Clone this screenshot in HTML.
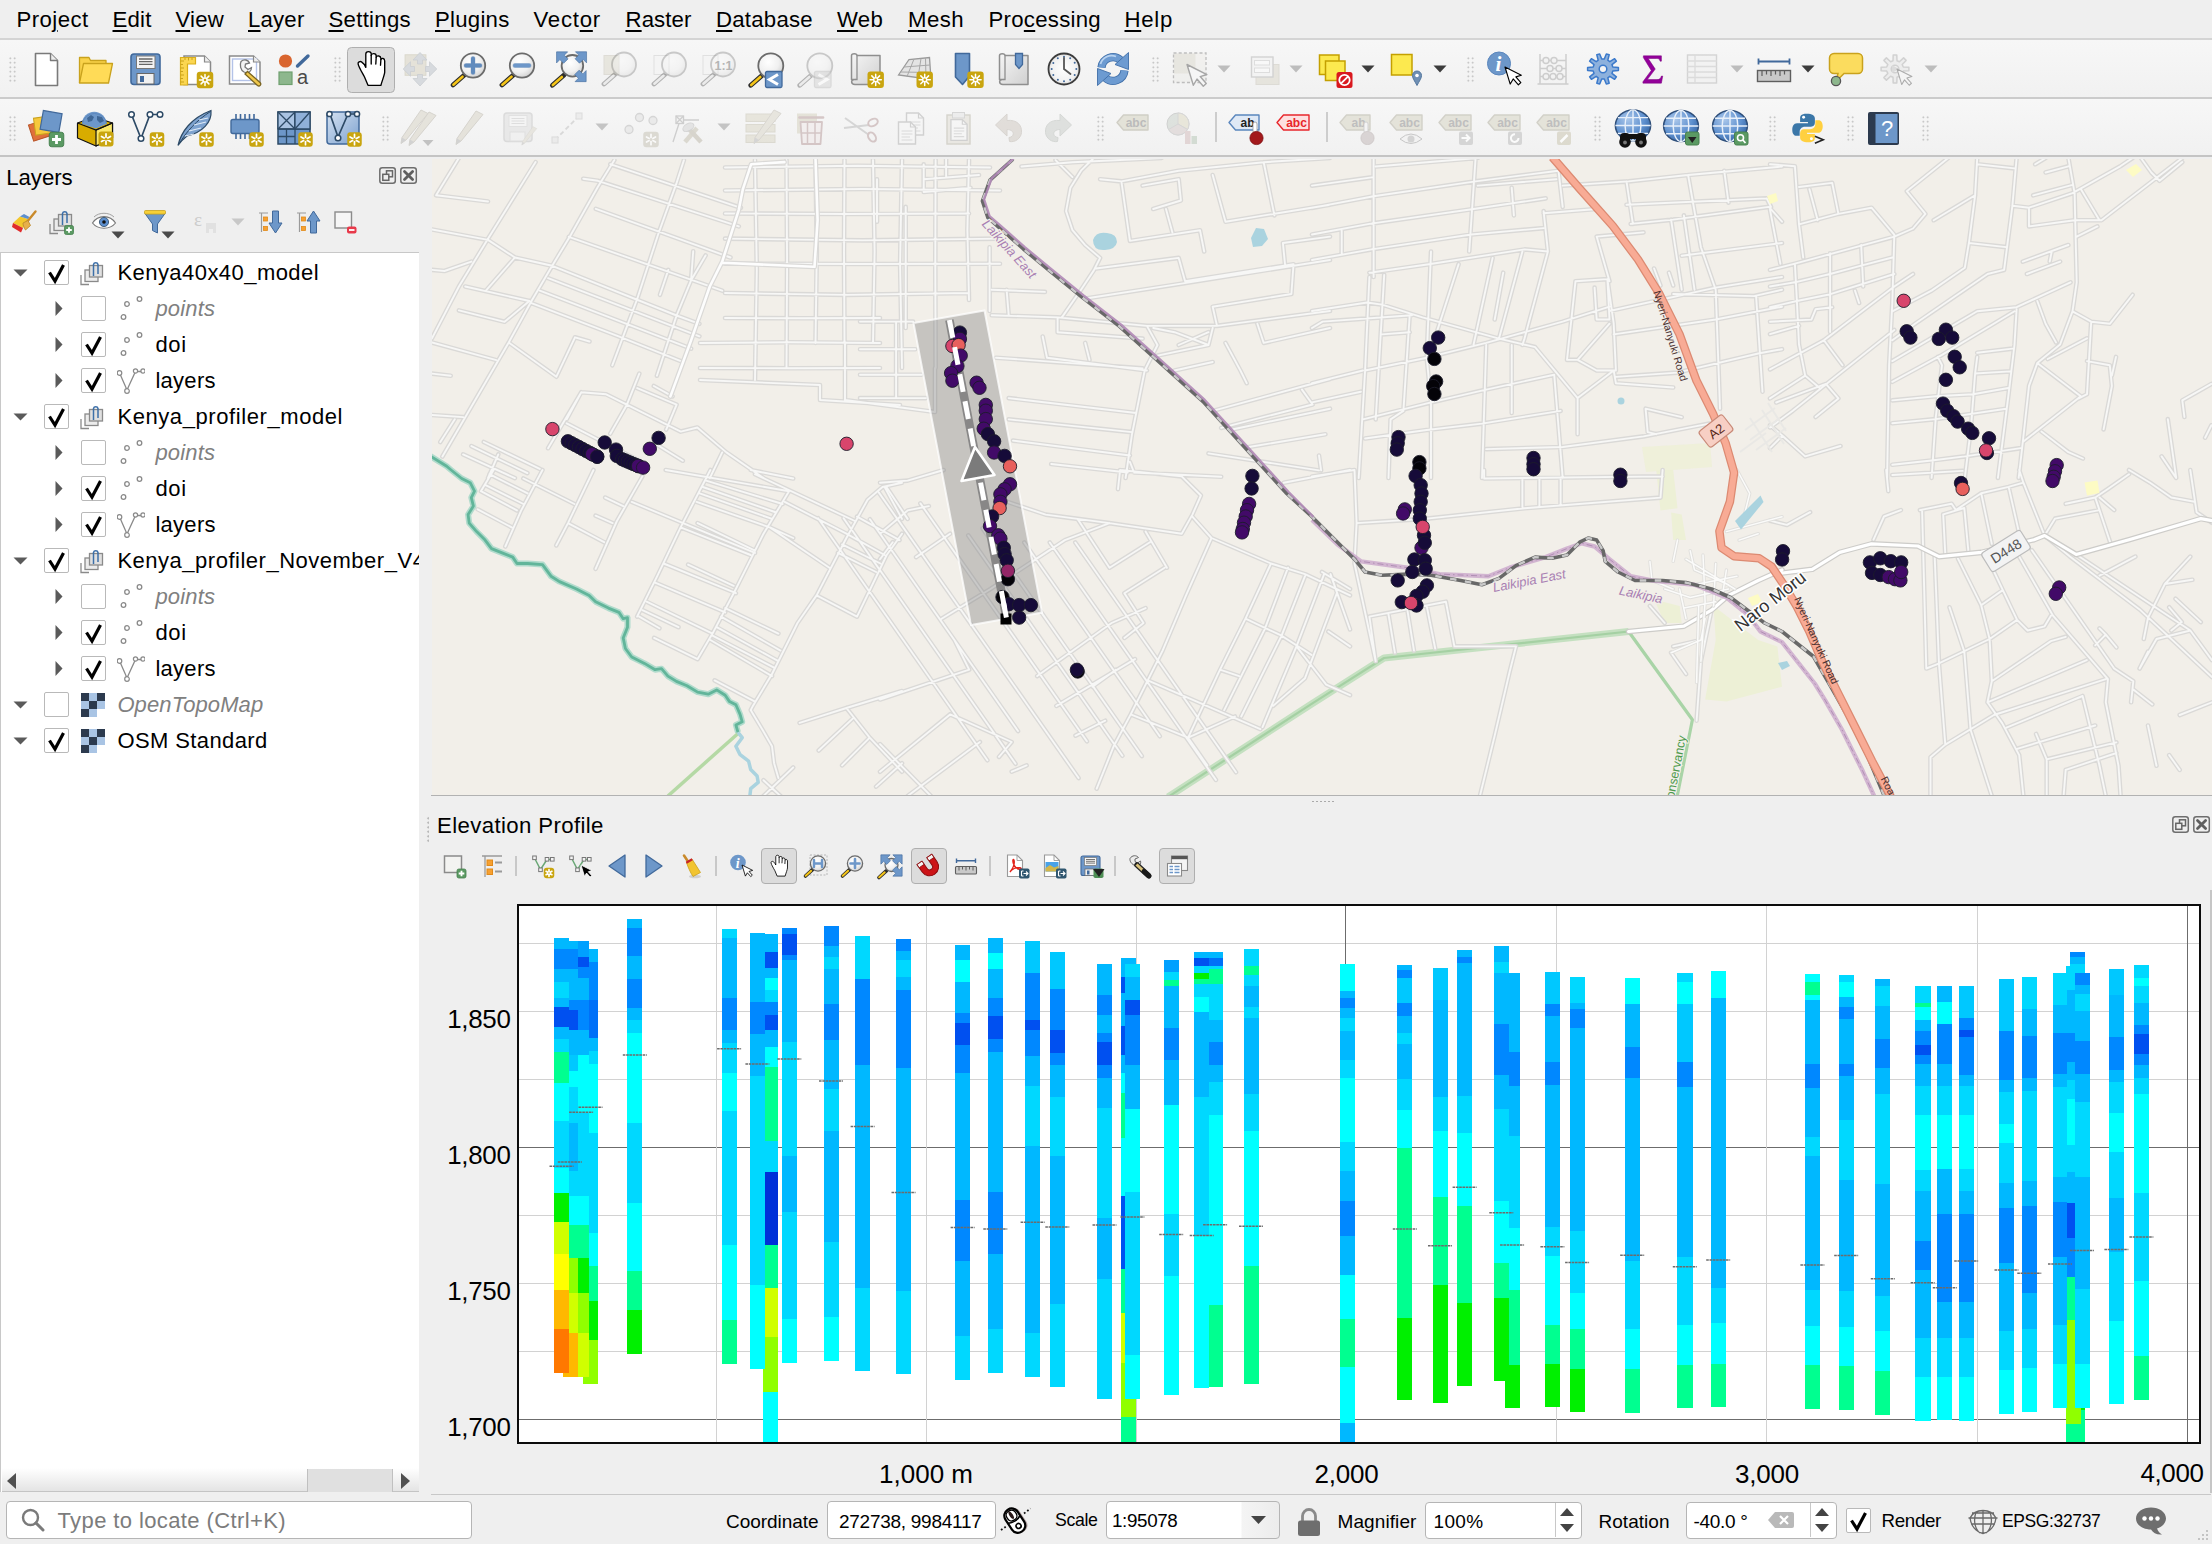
<!DOCTYPE html>
<html><head><meta charset="utf-8"><title>QGIS</title><style>
*{box-sizing:border-box;margin:0;padding:0}
html,body{width:2212px;height:1544px;overflow:hidden;background:#efefef;font-family:"Liberation Sans",sans-serif;color:#000}
.abs{position:absolute}
.t{position:absolute;white-space:nowrap;line-height:1}
.menu{}
.menu u{text-decoration-thickness:1.5px;text-underline-offset:3px}
.tb{position:absolute;left:0;width:2212px;background:linear-gradient(#f7f7f7,#f1f1f1)}
.hl{position:absolute;left:0;width:2212px;height:2px;background:#cfcfcf}
.grip{position:absolute;width:9px;height:27px;background-image:radial-gradient(circle,#b4b4b4 0.7px,transparent 1.05px);background-size:4.5px 4.5px}
.pressed{position:absolute;background:#dcdcdc;border:1.5px solid #afafaf;border-radius:4.5px}
.cb{position:absolute;width:25px;height:25px;background:#fff;border:1.5px solid #b9b9b9;border-radius:2px}
.tree{}
.gray{color:#808080;font-style:italic}
.inp{position:absolute;background:#fff;border:1.5px solid #b5b5b5;border-radius:4px}
.sb{font-size:19.5px;top:1511px}
</style></head><body>
<div class="t menu" style="left:16.5px;top:9.3px;font-size:22.2px;letter-spacing:0.415px;">Pro<u>j</u>ect</div>
<div class="t menu" style="left:112.5px;top:9.3px;font-size:22.2px;letter-spacing:0.186px;"><u>E</u>dit</div>
<div class="t menu" style="left:175.5px;top:9.3px;font-size:22.2px;letter-spacing:0.195px;"><u>V</u>iew</div>
<div class="t menu" style="left:248.0px;top:9.3px;font-size:22.2px;letter-spacing:0.193px;"><u>L</u>ayer</div>
<div class="t menu" style="left:328.5px;top:9.3px;font-size:22.2px;letter-spacing:0.285px;"><u>S</u>ettings</div>
<div class="t menu" style="left:435.0px;top:9.3px;font-size:22.2px;letter-spacing:0.241px;"><u>P</u>lugins</div>
<div class="t menu" style="left:533.5px;top:9.3px;font-size:22.2px;letter-spacing:0.76px;">Vect<u>o</u>r</div>
<div class="t menu" style="left:625.5px;top:9.3px;font-size:22.2px;letter-spacing:0.102px;"><u>R</u>aster</div>
<div class="t menu" style="left:716.0px;top:9.3px;font-size:22.2px;letter-spacing:0.246px;"><u>D</u>atabase</div>
<div class="t menu" style="left:837.0px;top:9.3px;font-size:22.2px;letter-spacing:0.251px;"><u>W</u>eb</div>
<div class="t menu" style="left:908.0px;top:9.3px;font-size:22.2px;letter-spacing:0.428px;"><u>M</u>esh</div>
<div class="t menu" style="left:988.5px;top:9.3px;font-size:22.2px;letter-spacing:0.268px;">Pro<u>c</u>essing</div>
<div class="t menu" style="left:1124.5px;top:9.3px;font-size:22.2px;letter-spacing:0.71px;"><u>H</u>elp</div>
<div class="hl" style="top:38px;background:#d4d4d4"></div>
<div class="tb" style="top:40px;height:57px"></div>
<div class="hl" style="top:97.3px;height:1.5px;background:#cbcbcb"></div>
<div class="tb" style="top:99px;height:56px"></div>
<div class="hl" style="top:155px;height:2px;background:#c4c4c4"></div>
<div class="grip" style="left:7.5px;top:55.5px"></div>
<div class="grip" style="left:332.5px;top:55.5px"></div>
<div class="grip" style="left:1150.5px;top:55.5px"></div>
<div class="grip" style="left:1465.5px;top:55.5px"></div>
<div class="grip" style="left:7.5px;top:114.5px"></div>
<div class="grip" style="left:380.5px;top:114.5px"></div>
<div class="grip" style="left:1095.5px;top:114.5px"></div>
<div class="grip" style="left:1592.5px;top:114.5px"></div>
<div class="grip" style="left:1767.5px;top:114.5px"></div>
<div class="grip" style="left:1845.5px;top:114.5px"></div>
<div class="grip" style="left:1920.5px;top:114.5px"></div>
<div class="pressed" style="left:347px;top:46.8px;width:48px;height:46.2px"></div>
<svg width="0" height="0" style="position:absolute"><defs><radialGradient id="lg" cx=".4" cy=".35" r=".7"><stop offset="0" stop-color="#fff"/><stop offset=".6" stop-color="#f0f0f0"/><stop offset="1" stop-color="#cfcfcf"/></radialGradient><linearGradient id="lgg" x1="0" y1="0" x2="1" y2="1"><stop offset="0" stop-color="#f6f6f6"/><stop offset="1" stop-color="#d0d0d0"/></linearGradient><radialGradient id="lgc" cx=".5" cy=".5" r=".5"><stop offset="0" stop-color="#fff"/><stop offset=".8" stop-color="#f1f1f1"/><stop offset="1" stop-color="#dcdcdc"/></radialGradient><linearGradient id="lgb" x1="0" y1="0" x2="1" y2="1"><stop offset="0" stop-color="#d5e2f2"/><stop offset="1" stop-color="#7da2cf"/></linearGradient><radialGradient id="lgglobe" cx=".35" cy=".3" r=".8"><stop offset="0" stop-color="#a9c6ea"/><stop offset=".6" stop-color="#5d8fce"/><stop offset="1" stop-color="#2f5d9a"/></radialGradient></defs></svg>
<svg class="abs" style="left:22px;top:44.5px" width="48" height="48" viewBox="-24 -24 48 48"><path d="M-10.500 -15.500H4.500L11.500 -8.500V16.500H-10.500Z" fill="#fff" stroke="#7a7a7a" stroke-width="1.6" stroke-linejoin="round"/><path d="M4.500 -15.500V-8.500H11.500" fill="#eee" stroke="#7a7a7a" stroke-width="1.4" stroke-linejoin="round"/></svg>
<svg class="abs" style="left:71px;top:44.5px" width="48" height="48" viewBox="-24 -24 48 48"><path d="M-15.500 14V-11.500H-6L-4.500 -8.500H11V-5" fill="#f9d24a" stroke="#c9a21d" stroke-width="1.3" stroke-linejoin="round"/><path d="M-15.500 14L-11.500 -5.500H17.500L13.500 14Z" fill="#ffdb57" stroke="#c9a21d" stroke-width="1.3" stroke-linejoin="round"/></svg>
<svg class="abs" style="left:121px;top:44.5px" width="48" height="48" viewBox="-24 -24 48 48"><rect x="-14" y="-15" width="29" height="30.500" rx="3" fill="#6d97c9" stroke="#41699b" stroke-width="1.6"/><rect x="-8.500" y="-13" width="18.500" height="12.500" fill="#f4f4f4" stroke="#777" stroke-width="1"/><path d="M-6 -10H7.500M-6 -7.300H7.500M-6 -4.600H7.500" stroke="#666" stroke-width="1.3"/><rect x="-8" y="4.500" width="17" height="10.500" fill="#f0f0f0" stroke="#666" stroke-width="1"/><rect x="-5" y="7" width="4" height="6" fill="#41699b"/></svg>
<svg class="abs" style="left:171px;top:44.5px" width="48" height="48" viewBox="-24 -24 48 48"><path d="M-4 -13H9.500L15.500 -7V15.500H-11V-13Z" fill="#fff" stroke="#8a8a8a" stroke-width="1.5"/><path d="M9.500 -13V-7H15.500" fill="#eee" stroke="#8a8a8a" stroke-width="1.2"/><path d="M-14.500 -11.500H0.500V-5H-7.500V16H-14.500Z" fill="#fbd651" stroke="#d9ae1c" stroke-width="1.2"/><path d="M-14.500 -8H-11M-14.500 -4.500H-12M-14.500 -1H-11M-14.500 2.500H-12M-14.500 6H-11M-14.500 9.500H-12M-14.500 13H-11M-10 -11.500V-9M-6.500 -11.500V-8.500M-3 -11.500V-9" stroke="#c9a21d" stroke-width="1"/><g transform="translate(10,11)"><rect x="-8.25" y="-8.25" width="16.5" height="16.5" rx="3" fill="#c9a50f"/><g stroke="#fff" stroke-width="1.500" stroke-linecap="round"><path d="M0 -5.600V5.600M-5.600 0H5.600M-3.900 -3.900L3.900 3.900M-3.900 3.900L3.900 -3.900"/></g><circle r="2.600" fill="#fff"/><circle r="1.300" fill="#c9a50f"/></g></svg>
<svg class="abs" style="left:221px;top:44.5px" width="48" height="48" viewBox="-24 -24 48 48"><path d="M-15.500 -13H8.500L15 -7V15H-15.500Z" fill="#fff" stroke="#8a8a8a" stroke-width="1.5"/><rect x="-12.500" y="-10" width="24" height="21.500" fill="none" stroke="#b4c3e8" stroke-width="1.4"/><path d="M8.500 -13V-7H15" fill="#eee" stroke="#8a8a8a" stroke-width="1.2"/><path d="M-4 -7.500C-1 -10.500 3.500 -9 4.500 -6L0.500 -5L0 -2L3 0.500L6.500 -1.500C6.500 2 3.500 4.500 0.500 3.500L-1 3C-4.500 1 -5.500 -4 -4 -7.500Z" fill="#f3f3f3" stroke="#777" stroke-width="1.3"/><path d="M2.500 2.500L15 13.500C17 15.500 14.500 18 12.500 16.500L0 5Z" fill="#f0c84b" stroke="#7a6420" stroke-width="1.3"/></svg>
<svg class="abs" style="left:270px;top:44.5px" width="48" height="48" viewBox="-24 -24 48 48"><circle cx="-8.500" cy="-8" r="6.600" fill="#d9652f"/><path d="M3.500 -3L14 -13" stroke="#41699b" stroke-width="3.400" stroke-linecap="round"/><rect x="-15" y="3" width="13" height="12.500" fill="#8db78d" stroke="#6fa06f" stroke-width="1.2"/><text x="3" y="14.500" font-size="20" fill="#4a4a4a" font-family="Liberation Sans,sans-serif">a</text></svg>
<svg class="abs" style="left:347px;top:44.5px" width="48" height="48" viewBox="-24 -24 48 48"><g transform="scale(1)"><path d="M-3 16.300L-6.600 7.700C-8 5 -9.800 2.300 -10.800 0C-11.500 -1.500 -12.600 -3.500 -12.900 -5.200C-13.200 -7 -11 -8 -9.500 -7.200C-8 -6.300 -6.500 -4.500 -5.200 -1.600L-5.200 -14.900C-5.200 -18.200 0.200 -18.200 0.200 -14.900L0.200 -13.500C0.500 -16.200 5.200 -16 5.200 -13.100L5.200 -11.800C5.800 -13.800 9.900 -13.400 9.900 -10.400L9.900 -9.500C10.500 -11.300 13.700 -10.900 13.700 -8.100L13.700 3.200C13.500 6 11 12 9.900 16.300Z" fill="#fff" stroke="#000" stroke-width="1.350" stroke-linejoin="round"/><path d="M0.200 -13.500L0.200 -5M5.200 -11.800L4.800 -5M9.900 -9.500L9.500 -3.800" stroke="#000" stroke-width="1.350" stroke-linecap="round" fill="none"/></g></svg>
<svg class="abs" style="left:396px;top:44.5px" width="48" height="48" viewBox="-24 -24 48 48"><g opacity=".9"><rect x="-14.900" y="-14.200" width="20.800" height="20.500" fill="#e4e1d6" stroke="#d8d5c8"/><g fill="#d4d8dc" stroke="#c6cace" stroke-width=".8"><path d="M0 -16.500L7 -9H2.500V-5H-2.500V-9H-7Z"/><path d="M0 17L7 9.500H2.500V5.500H-2.500V9.500H-7Z"/><path d="M16.800 0L9.500 -7.200V-2.500H5.500V2.500H9.500V7.200Z"/><path d="M-16.800 0L-9.500 -7.200V-2.500H-5.500V2.500H-9.500V7.200Z"/></g></g></svg>
<svg class="abs" style="left:446px;top:44.5px" width="48" height="48" viewBox="-24 -24 48 48"><g opacity="1"><path d="M-5.300000000000001 5.699999999999999L-17 16.0" stroke="#2b2b2b" stroke-width="4.800" stroke-linecap="round"/><path d="M-7.5 7.699999999999999L-16.6 15.7" stroke="#f5c518" stroke-width="2.600" stroke-linecap="round"/><circle cx="3" cy="-3.5" r="12.2" fill="url(#lg)" stroke="#6b6b6b" stroke-width="1.8"/></g><path d="M3 -10.500V3.500M-4 -3.500H10" stroke="#6d97c9" stroke-width="4" stroke-linecap="round"/><path d="M3 -10.500V3.500M-4 -3.500H10" stroke="#41699b" stroke-width="5" stroke-linecap="round" opacity=".25"/></svg>
<svg class="abs" style="left:495px;top:44.5px" width="48" height="48" viewBox="-24 -24 48 48"><g opacity="1"><path d="M-5.300000000000001 5.699999999999999L-17 16.0" stroke="#2b2b2b" stroke-width="4.800" stroke-linecap="round"/><path d="M-7.5 7.699999999999999L-16.6 15.7" stroke="#f5c518" stroke-width="2.600" stroke-linecap="round"/><circle cx="3" cy="-3.5" r="12.2" fill="url(#lg)" stroke="#6b6b6b" stroke-width="1.8"/></g><path d="M-4 -3.500H10" stroke="#41699b" stroke-width="5" stroke-linecap="round" opacity=".3"/><path d="M-4 -3.500H10" stroke="#6d97c9" stroke-width="4" stroke-linecap="round"/></svg>
<svg class="abs" style="left:545px;top:44.5px" width="48" height="48" viewBox="-24 -24 48 48"><g opacity="1"><path d="M-4.9 5.999999999999999L-16.6 16.3" stroke="#2b2b2b" stroke-width="4.800" stroke-linecap="round"/><path d="M-7.1 7.999999999999999L-16.200000000000003 16.0" stroke="#f5c518" stroke-width="2.600" stroke-linecap="round"/><circle cx="3.4" cy="-3.2" r="10.8" fill="url(#lg)" stroke="#6b6b6b" stroke-width="1.8"/></g><path transform="translate(12,-11.7) rotate(0) scale(0.74)" d="M-7.500 -7.500H7.500V7.500L3 3L-2 8L-8 2L-3 -3Z" fill="#6d97c9" stroke="#41699b" stroke-width="0.8"/><path transform="translate(-6.9,-11.6) rotate(-90) scale(0.74)" d="M-7.500 -7.500H7.500V7.500L3 3L-2 8L-8 2L-3 -3Z" fill="#6d97c9" stroke="#41699b" stroke-width="0.8"/><path transform="translate(11.6,7.1) rotate(90) scale(0.74)" d="M-7.500 -7.500H7.500V7.500L3 3L-2 8L-8 2L-3 -3Z" fill="#6d97c9" stroke="#41699b" stroke-width="0.8"/></svg>
<svg class="abs" style="left:594px;top:44.5px" width="48" height="48" viewBox="-24 -24 48 48"><g opacity=".45"><rect x="-14" y="-13.500" width="15" height="19" fill="#d8d4c4" stroke="#c4c0b2"/></g><g opacity="0.32"><path d="M-2.3000000000000007 4.699999999999999L-14 15.0" stroke="#2b2b2b" stroke-width="4.800" stroke-linecap="round"/><path d="M-4.5 6.699999999999999L-13.600000000000001 14.7" stroke="#ddd" stroke-width="2.600" stroke-linecap="round"/><circle cx="6" cy="-4.5" r="12" fill="url(#lg)" stroke="#6b6b6b" stroke-width="1.8"/></g></svg>
<svg class="abs" style="left:644px;top:44.5px" width="48" height="48" viewBox="-24 -24 48 48"><g opacity=".45"><rect x="-14" y="-13.500" width="15" height="19" fill="#f4f4f4" stroke="#c8c8c8"/></g><g opacity="0.32"><path d="M-2.3000000000000007 4.699999999999999L-14 15.0" stroke="#2b2b2b" stroke-width="4.800" stroke-linecap="round"/><path d="M-4.5 6.699999999999999L-13.600000000000001 14.7" stroke="#ddd" stroke-width="2.600" stroke-linecap="round"/><circle cx="6" cy="-4.5" r="12" fill="url(#lg)" stroke="#6b6b6b" stroke-width="1.8"/></g></svg>
<svg class="abs" style="left:693px;top:44.5px" width="48" height="48" viewBox="-24 -24 48 48"><g opacity=".45"><rect x="-14" y="-13.500" width="15" height="19" fill="#f4f4f4" stroke="#c8c8c8"/></g><g opacity="0.32"><path d="M-2.3000000000000007 4.699999999999999L-14 15.0" stroke="#2b2b2b" stroke-width="4.800" stroke-linecap="round"/><path d="M-4.5 6.699999999999999L-13.600000000000001 14.7" stroke="#ddd" stroke-width="2.600" stroke-linecap="round"/><circle cx="6" cy="-4.5" r="12" fill="url(#lg)" stroke="#6b6b6b" stroke-width="1.8"/></g><text x="6.500" y="1" font-size="12.500" font-weight="bold" text-anchor="middle" fill="#b5b5b5" font-family="Liberation Sans,sans-serif">1:1</text></svg>
<svg class="abs" style="left:743px;top:44.5px" width="48" height="48" viewBox="-24 -24 48 48"><g opacity="1"><path d="M-4.500000000000001 5.999999999999999L-16.2 16.3" stroke="#2b2b2b" stroke-width="4.800" stroke-linecap="round"/><path d="M-6.7 7.999999999999999L-15.8 16.0" stroke="#f5c518" stroke-width="2.600" stroke-linecap="round"/><circle cx="3.8" cy="-3.2" r="12.5" fill="url(#lg)" stroke="#6b6b6b" stroke-width="1.8"/></g><rect x="-1.500" y="2.500" width="16.500" height="16" rx="1.500" fill="#6d97c9" stroke="#41699b" stroke-width="1.3"/><path d="M11 5.500L2.500 10.500L11 15.500" fill="none" stroke="#fff" stroke-width="3"/></svg>
<svg class="abs" style="left:792px;top:44.5px" width="48" height="48" viewBox="-24 -24 48 48"><g opacity="0.32"><path d="M-4.500000000000001 5.999999999999999L-16.2 16.3" stroke="#2b2b2b" stroke-width="4.800" stroke-linecap="round"/><path d="M-6.7 7.999999999999999L-15.8 16.0" stroke="#ddd" stroke-width="2.600" stroke-linecap="round"/><circle cx="3.8" cy="-3.2" r="12.5" fill="url(#lg)" stroke="#6b6b6b" stroke-width="1.8"/></g><g opacity=".5"><rect x="-1.500" y="2.500" width="16.500" height="16" rx="1.500" fill="#d6d6d6" stroke="#c2c2c2" stroke-width="1.3"/><path d="M2.500 5.500L11 10.500L2.500 15.500" fill="none" stroke="#fff" stroke-width="3"/></g></svg>
<svg class="abs" style="left:842px;top:44.5px" width="48" height="48" viewBox="-24 -24 48 48"><path d="M-14.500 -13.500C-14.500 -16 -9 -16 -9 -13.500H14V15.500H-11C-15.500 15.500 -15.500 10 -11 10.500H-14.500Z" fill="url(#lgg)" stroke="#8f8f8f" stroke-width="1.5" stroke-linejoin="round"/><path d="M-9 -13.500V10.500H-11" fill="none" stroke="#8f8f8f" stroke-width="1.3"/><g transform="translate(9.7,10.8)"><rect x="-8.2" y="-8.2" width="16.4" height="16.4" rx="3" fill="#c9a50f"/><g stroke="#fff" stroke-width="1.500" stroke-linecap="round"><path d="M0 -5.600V5.600M-5.600 0H5.600M-3.900 -3.900L3.900 3.900M-3.900 3.900L3.900 -3.900"/></g><circle r="2.600" fill="#fff"/><circle r="1.300" fill="#c9a50f"/></g></svg>
<svg class="abs" style="left:891px;top:44.5px" width="48" height="48" viewBox="-24 -24 48 48"><path d="M-16.500 6L-6 -9.500L14.500 -11.500L16 10.500Z" fill="#e4e4e4" stroke="#9a9a9a" stroke-width="1.3"/><path d="M-11 -2L15 -4M-14 3L15.500 3.500M-1 -10L-8 7.500M6 -10.500L3 8.500M10.500 -11L11 10" stroke="#a8a8a8" stroke-width="1" fill="none"/><g transform="translate(9.7,10.8)"><rect x="-8.2" y="-8.2" width="16.4" height="16.4" rx="3" fill="#c9a50f"/><g stroke="#fff" stroke-width="1.500" stroke-linecap="round"><path d="M0 -5.600V5.600M-5.600 0H5.600M-3.900 -3.900L3.900 3.900M-3.900 3.900L3.900 -3.900"/></g><circle r="2.600" fill="#fff"/><circle r="1.300" fill="#c9a50f"/></g></svg>
<svg class="abs" style="left:941px;top:44.5px" width="48" height="48" viewBox="-24 -24 48 48"><path d="M-9.500 -15.500H4.500V7L-2.500 15.500L-9.500 8Z" fill="#6d97c9" stroke="#41699b" stroke-width="1.6" stroke-linejoin="round"/><g transform="translate(10.5,10.8)"><rect x="-8.2" y="-8.2" width="16.4" height="16.4" rx="3" fill="#c9a50f"/><g stroke="#fff" stroke-width="1.500" stroke-linecap="round"><path d="M0 -5.600V5.600M-5.600 0H5.600M-3.900 -3.900L3.900 3.900M-3.900 3.900L3.900 -3.900"/></g><circle r="2.600" fill="#fff"/><circle r="1.300" fill="#c9a50f"/></g></svg>
<svg class="abs" style="left:990px;top:44.5px" width="48" height="48" viewBox="-24 -24 48 48"><path d="M-14.500 -13.500C-14.500 -16 -9 -16 -9 -13.500H14V15.500H-11C-15.500 15.500 -15.500 10 -11 10.500H-14.500Z" fill="url(#lgg)" stroke="#8f8f8f" stroke-width="1.5" stroke-linejoin="round"/><path d="M-9 -13.500V10.500H-11" fill="none" stroke="#8f8f8f" stroke-width="1.3"/><path d="M1.500 -15.500H8.500V-4.500L5 -0.500L1.500 -4.500Z" fill="#6d97c9" stroke="#41699b" stroke-width="1.3"/></svg>
<svg class="abs" style="left:1040px;top:44.5px" width="48" height="48" viewBox="-24 -24 48 48"><circle r="15.500" fill="url(#lgc)" stroke="#3c3c3c" stroke-width="1.8"/><circle cx="12.3" cy="0.0" r="1" fill="#41699b"/><circle cx="10.7" cy="6.1" r="1" fill="#41699b"/><circle cx="6.2" cy="10.7" r="1" fill="#41699b"/><circle cx="0.0" cy="12.3" r="1" fill="#41699b"/><circle cx="-6.1" cy="10.7" r="1" fill="#41699b"/><circle cx="-10.7" cy="6.1" r="1" fill="#41699b"/><circle cx="-12.3" cy="0.0" r="1" fill="#41699b"/><circle cx="-10.7" cy="-6.1" r="1" fill="#41699b"/><circle cx="-6.2" cy="-10.7" r="1" fill="#41699b"/><circle cx="-0.0" cy="-12.3" r="1" fill="#41699b"/><circle cx="6.2" cy="-10.7" r="1" fill="#41699b"/><circle cx="10.7" cy="-6.2" r="1" fill="#41699b"/><path d="M0 -11V0L6.500 5" fill="none" stroke="#555" stroke-width="1.8" stroke-linecap="round"/></svg>
<svg class="abs" style="left:1089px;top:44.5px" width="48" height="48" viewBox="-24 -24 48 48"><g fill="none" stroke-linecap="butt"><path d="M-11.500 -1.500A11.500 11.500 0 0 1 7.500 -9" stroke="#3f6ea8" stroke-width="8.200"/><path d="M-11.500 -1.500A11.500 11.500 0 0 1 7.500 -9" stroke="#6d9bd1" stroke-width="6.600"/><path d="M11.500 1.500A11.500 11.500 0 0 1 -7.500 9" stroke="#3f6ea8" stroke-width="8.200"/><path d="M11.500 1.500A11.500 11.500 0 0 1 -7.500 9" stroke="#6d9bd1" stroke-width="6.600"/></g><path d="M2 -4.500L15.500 -16.500L15.500 0.500Z" fill="#6d9bd1" stroke="#3f6ea8" stroke-width=".9" stroke-linejoin="round"/><path d="M-2 4.500L-15.500 16.500L-15.500 -0.500Z" fill="#6d9bd1" stroke="#3f6ea8" stroke-width=".9" stroke-linejoin="round"/><path d="M-12.500 -5A11.500 11.500 0 0 1 3 -12.500" fill="none" stroke="#b9d3f0" stroke-width="1.800"/></svg>
<svg class="abs" style="left:1166px;top:44.5px" width="48" height="48" viewBox="-24 -24 48 48"><g opacity=".6"><rect x="-16" y="-15.500" width="21.500" height="20" fill="#dcdad0"/><rect x="-16.500" y="-16" width="32.500" height="29.500" fill="#e4e2da" fill-opacity=".35" stroke="#9a9a9a" stroke-width="1.300" stroke-dasharray="3 2.200"/></g><path transform="translate(-3,-4.5) rotate(-17) scale(1.4)" d="M0 0V15.500L3.800 12L6.600 18.200L9.200 17L6.500 11L11.500 11Z" fill="#f6f6f6" stroke="#a6a6a6" stroke-width="1" stroke-linejoin="round"/></svg>
<svg class="abs" style="left:1238px;top:44.5px" width="48" height="48" viewBox="-24 -24 48 48"><g opacity=".6"><rect x="-6" y="-4.500" width="23" height="20" fill="#dedbd0" stroke="#cfccc2"/><rect x="-10.500" y="-12" width="21.500" height="20" fill="#f3f3f3" stroke="#bdbdbd" stroke-width="1.400"/><rect x="-7.500" y="-8.500" width="15" height="4.500" fill="#fbfbfb" stroke="#cfcfcf"/><rect x="-7.500" y="-1" width="15" height="4.500" fill="#fbfbfb" stroke="#cfcfcf"/></g></svg>
<svg class="abs" style="left:1311px;top:44.5px" width="48" height="48" viewBox="-24 -24 48 48"><rect x="-15.500" y="-14" width="19.500" height="19.500" fill="#fce94f" stroke="#c4a000" stroke-width="1.500"/><rect x="-9.500" y="-8" width="19.500" height="19.500" fill="#fce94f" stroke="#c4a000" stroke-width="1.500"/><rect x="1.500" y="3" width="16" height="16" rx="2.500" fill="#d9181e"/><circle cx="9.500" cy="11" r="5.200" fill="none" stroke="#fff" stroke-width="1.800"/><path d="M5.800 14.700L13.200 7.300" stroke="#fff" stroke-width="1.800"/></svg>
<svg class="abs" style="left:1383px;top:44.5px" width="48" height="48" viewBox="-24 -24 48 48"><rect x="-15.500" y="-14.500" width="20.500" height="20.500" fill="#fce94f" stroke="#c4a000" stroke-width="1.5"/><path d="M10 16.500C7.500 11.500 5.500 9.500 5.500 6.500A4.500 4.500 0 0 1 14.500 6.500C14.500 9.500 12.500 11.500 10 16.500Z" fill="#6f8fb4" stroke="#54779e" stroke-width="1"/><circle cx="10" cy="6.500" r="1.800" fill="#fff"/></svg>
<svg class="abs" style="left:1480px;top:44.5px" width="48" height="48" viewBox="-24 -24 48 48"><circle cx="-5" cy="-5.500" r="11.500" fill="#6d97c9" stroke="#5a86bd" stroke-width="1"/><text x="-5.500" y="2" font-size="21" font-style="italic" font-weight="bold" text-anchor="middle" fill="#fff" font-family="Liberation Serif,serif">i</text><path transform="translate(1,-2) rotate(-17) scale(1.15)" d="M0 0V15.500L3.800 12L6.600 18.200L9.200 17L6.500 11L11.500 11Z" fill="#fff" stroke="#000" stroke-width="1" stroke-linejoin="round"/></svg>
<svg class="abs" style="left:1529px;top:44.5px" width="48" height="48" viewBox="-24 -24 48 48"><g opacity=".5" fill="none" stroke="#a9a9a9" stroke-width="1.5"><path d="M-13 -15V15M13 -15V15M-15.500 15H15.500M-13 -8.500H13M-13 -0.500H13M-13 7.500H13"/><g fill="#f2f2f2"><circle cx="-7" cy="-8.500" r="3"/><circle cx="1" cy="-8.500" r="3"/><circle cx="-3" cy="-0.500" r="3"/><circle cx="6" cy="-0.500" r="3"/><circle cx="-7" cy="7.500" r="3"/><circle cx="0" cy="7.500" r="3"/><circle cx="7" cy="7.500" r="3"/></g></g></svg>
<svg class="abs" style="left:1579px;top:44.5px" width="48" height="48" viewBox="-24 -24 48 48"><path d="M15.4 -1.6L15.4 1.6L9.8 1.9L9.0 4.3L13.4 7.8L11.6 10.3L6.8 7.3L4.8 8.8L6.2 14.2L3.3 15.1L1.3 9.9L-1.3 9.9L-3.3 15.1L-6.2 14.2L-4.8 8.8L-6.8 7.3L-11.6 10.3L-13.4 7.8L-9.0 4.3L-9.8 1.9L-15.4 1.6L-15.4 -1.6L-9.8 -1.9L-9.0 -4.3L-13.4 -7.8L-11.6 -10.3L-6.8 -7.3L-4.8 -8.8L-6.2 -14.2L-3.3 -15.1L-1.3 -9.9L1.3 -9.9L3.3 -15.1L6.2 -14.2L4.8 -8.8L6.8 -7.3L11.6 -10.3L13.4 -7.8L9.0 -4.3L9.8 -1.9Z" fill="#8db1dd" stroke="#3c7acb" stroke-width="1.500" stroke-linejoin="round"/><circle r="3.800" fill="#f4f4f4" stroke="#3c7acb" stroke-width="1.500"/></svg>
<svg class="abs" style="left:1628px;top:44.5px" width="48" height="48" viewBox="-24 -24 48 48"><path transform="translate(0.6,0.5) scale(.88)" d="M-10.500 -15.500H10V-9.500H8.500C8 -12 7 -12.500 4.500 -12.500H-5L3 -0.500L-6 11.500H5C8 11.500 9 10.500 10 7.500H11.500L10 15.500H-11V14L-1.500 1L-10.500 -13.500Z" fill="#93009a" stroke="#7a0080" stroke-width=".6"/></svg>
<svg class="abs" style="left:1678px;top:44.5px" width="48" height="48" viewBox="-24 -24 48 48"><g opacity=".5"><rect x="-14.500" y="-14" width="29" height="28" fill="#f1f1f1" stroke="#b5b5b5" stroke-width="1.4"/><path d="M-14.500 -8H14.500M-14.500 -2.500H14.500M-14.500 3H14.500M-14.500 8.500H14.500M-7 -14V14" stroke="#c4c4c4" stroke-width="1.3"/></g></svg>
<svg class="abs" style="left:1750px;top:44.5px" width="48" height="48" viewBox="-24 -24 48 48"><path d="M-15.500 -10.500V-4.500M15.500 -10.500V-4.500M-15.500 -7.500H15.500" stroke="#41699b" stroke-width="1.8"/><rect x="-16.500" y="1.500" width="33" height="11" fill="#c9c9c9" stroke="#5e5e5e" stroke-width="1.4"/><path d="M-12 1.500V7M-7.500 1.500V5.500M-3 1.500V7M1.500 1.500V5.500M6 1.500V7M10.500 1.500V5.500" stroke="#5e5e5e" stroke-width="1.2"/></svg>
<svg class="abs" style="left:1822px;top:44.5px" width="48" height="48" viewBox="-24 -24 48 48"><path d="M-12 -15.500H12A4.500 4.500 0 0 1 16.500 -11V0A4.500 4.500 0 0 1 12 4.500H-2L-10 12.500L-8 4.500H-12A4.500 4.500 0 0 1 -16.500 0V-11A4.500 4.500 0 0 1 -12 -15.500Z" fill="#fbdc5e" stroke="#c9a21d" stroke-width="1.5"/><circle cx="-10" cy="12" r="4.600" fill="#8db78d" stroke="#555" stroke-width="1.300"/></svg>
<svg class="abs" style="left:1871px;top:44.5px" width="48" height="48" viewBox="-24 -24 48 48"><g opacity=".5"><path d="M13.9 -1.8L13.9 1.8L8.3 2.0L7.2 4.4L11.1 8.6L8.6 11.1L4.4 7.2L2.0 8.3L1.8 13.9L-1.8 13.9L-2.0 8.3L-4.4 7.2L-8.6 11.1L-11.1 8.6L-7.2 4.4L-8.3 2.0L-13.9 1.8L-13.9 -1.8L-8.3 -2.0L-7.2 -4.4L-11.1 -8.6L-8.6 -11.1L-4.4 -7.2L-2.0 -8.3L-1.8 -13.9L1.8 -13.9L2.0 -8.3L4.4 -7.2L8.6 -11.1L11.1 -8.6L7.2 -4.4L8.3 -2.0Z" fill="#e6e6e6" stroke="#b0b0b0" stroke-width="1.500" stroke-linejoin="round"/><circle r="3.800" fill="#f4f4f4" stroke="#b0b0b0" stroke-width="1.500"/><path d="M-3 -4L4 0L-3 4Z" fill="#c4c4c4"/></g><path transform="translate(2,0) rotate(-17) scale(1.05)" d="M0 0V15.500L3.800 12L6.600 18.200L9.200 17L6.500 11L11.500 11Z" fill="#f4f4f4" stroke="#ababab" stroke-width="1" stroke-linejoin="round"/></svg>
<svg class="abs" style="left:1216px;top:63.5px;opacity:1" width="16" height="10" viewBox="-8 -5 16 10"><path d="M-6.500 -3.500H6.500L0 3.500Z" fill="#bdbdbd"/></svg>
<svg class="abs" style="left:1288px;top:63.5px;opacity:1" width="16" height="10" viewBox="-8 -5 16 10"><path d="M-6.500 -3.500H6.500L0 3.500Z" fill="#bdbdbd"/></svg>
<svg class="abs" style="left:1360px;top:63.5px;opacity:1" width="16" height="10" viewBox="-8 -5 16 10"><path d="M-6.500 -3.500H6.500L0 3.500Z" fill="#3c3c3c"/></svg>
<svg class="abs" style="left:1432px;top:63.5px;opacity:1" width="16" height="10" viewBox="-8 -5 16 10"><path d="M-6.500 -3.500H6.500L0 3.500Z" fill="#3c3c3c"/></svg>
<svg class="abs" style="left:1729px;top:63.5px;opacity:1" width="16" height="10" viewBox="-8 -5 16 10"><path d="M-6.500 -3.500H6.500L0 3.500Z" fill="#bdbdbd"/></svg>
<svg class="abs" style="left:1800px;top:63.5px;opacity:1" width="16" height="10" viewBox="-8 -5 16 10"><path d="M-6.500 -3.500H6.500L0 3.500Z" fill="#3c3c3c"/></svg>
<svg class="abs" style="left:1923px;top:63.5px;opacity:1" width="16" height="10" viewBox="-8 -5 16 10"><path d="M-6.500 -3.500H6.500L0 3.500Z" fill="#bdbdbd"/></svg>
<svg class="abs" style="left:22px;top:103.5px" width="48" height="48" viewBox="-24 -24 48 48"><rect x="-15.500" y="-6" width="17" height="17" transform="rotate(-18 -7 2)" fill="#e0703a" stroke="#b9552a" stroke-width="1"/><rect x="-11.500" y="-11" width="17" height="17" transform="rotate(-8 -3 -3)" fill="#f6c83c" stroke="#c9a21d" stroke-width="1"/><rect x="-4.500" y="-16" width="19" height="19" transform="rotate(10 5 -6)" fill="#6d97c9" stroke="#41699b" stroke-width="1.2"/><g transform="translate(10.5,11.5)"><rect x="-7.25" y="-7.25" width="14.5" height="14.5" rx="2.500" fill="#5b9a63" stroke="#47814f" stroke-width="1"/><path d="M0 -4.500V4.500M-4.500 0H4.500" stroke="#fff" stroke-width="2.800"/></g></svg>
<svg class="abs" style="left:71px;top:103.5px" width="48" height="48" viewBox="-24 -24 48 48"><path d="M-17.500 -5L-1 -11L17.500 -5V10L1 18L-17.500 10Z" fill="#d8ac00" stroke="#111" stroke-width="1.2" stroke-linejoin="round"/><path d="M1 2V18L17.500 10V-5Z" fill="#fbe86a" stroke="#111" stroke-width="1.2" stroke-linejoin="round"/><path d="M-17.500 -5L1 2L17.500 -5" fill="none" stroke="#111" stroke-width="1.2"/><path d="M-13 -4A12 12 0 0 1 11.500 -4L1 0.500Z" fill="#6d97c9"/><circle cx="-1" cy="-5.500" r="12" fill="none"/><path d="M-12.500 -4.500A12.200 12.200 0 0 1 11.500 -4.500" fill="#6d97c9" stroke="#5a86bd"/><path d="M-8 -10l4 -3l3 2l-2 4l-4 1zM2 -12l5 1l2 4l-4 2l-3 -3z" fill="#3f6796"/><g transform="translate(11,11)"><rect x="-7.5" y="-7.5" width="15" height="15" rx="3" fill="#c9a50f"/><g stroke="#fff" stroke-width="1.700" stroke-linecap="round"><path d="M0 -5.200V5.200M-4.500 -2.600L4.500 2.600M-4.500 2.600L4.500 -2.600"/></g><circle r="1.5" fill="#c9a50f"/></g></svg>
<svg class="abs" style="left:121px;top:103.5px" width="48" height="48" viewBox="-24 -24 48 48"><path d="M-13.500 -13.500L-4 10.500L5 -13.500H15" fill="none" stroke="#2d4a66" stroke-width="1.700"/><g fill="#fff" stroke="#2d4a66" stroke-width="1.500"><circle cx="-13.500" cy="-13.500" r="2.800"/><circle cx="-4" cy="10.500" r="2.800"/><circle cx="5" cy="-13.500" r="2.800"/><circle cx="15" cy="-13.500" r="2.800"/></g><g transform="translate(12,11.5)"><rect x="-7.25" y="-7.25" width="14.5" height="14.5" rx="3" fill="#c9a50f"/><g stroke="#fff" stroke-width="1.700" stroke-linecap="round"><path d="M0 -5.200V5.200M-4.500 -2.600L4.500 2.600M-4.500 2.600L4.500 -2.600"/></g><circle r="1.5" fill="#c9a50f"/></g></svg>
<svg class="abs" style="left:171px;top:103.5px" width="48" height="48" viewBox="-24 -24 48 48"><path d="M-17 17.500C-14 4 -4 -10 16 -17.500C17 -6 8 4 -8 8C-12 11 -14.500 14 -17 17.500Z" fill="#7da2cf" stroke="#2d4a66" stroke-width="1.200"/><path d="M-16 16C-9 4 2 -8 15.500 -16.500" fill="none" stroke="#2d4a66" stroke-width="1"/><path d="M-6 3l12 -3M-1 -3l12 -3M4 -8l9 -2M-10 8l9 -2" stroke="#dfeaf6" stroke-width="1.200"/><g transform="translate(11.5,11.5)"><rect x="-7.25" y="-7.25" width="14.5" height="14.5" rx="3" fill="#c9a50f"/><g stroke="#fff" stroke-width="1.700" stroke-linecap="round"><path d="M0 -5.200V5.200M-4.500 -2.600L4.500 2.600M-4.500 2.600L4.500 -2.600"/></g><circle r="1.5" fill="#c9a50f"/></g></svg>
<svg class="abs" style="left:221px;top:103.5px" width="48" height="48" viewBox="-24 -24 48 48"><path d="M-9 -14V-8M-4.500 -14V-8M0 -14V-8M4.500 -14V-8M9 -14V-8M-9 5V11M-4.500 5V11M0 5V11M4.500 5V11" stroke="#41699b" stroke-width="1.600"/><rect x="-14" y="-8.500" width="28" height="14" rx="2" fill="#6d97c9" stroke="#41699b" stroke-width="1.400"/><g transform="translate(11.5,11.5)"><rect x="-7.25" y="-7.25" width="14.5" height="14.5" rx="3" fill="#c9a50f"/><g stroke="#fff" stroke-width="1.700" stroke-linecap="round"><path d="M0 -5.200V5.200M-4.500 -2.600L4.500 2.600M-4.500 2.600L4.500 -2.600"/></g><circle r="1.5" fill="#c9a50f"/></g></svg>
<svg class="abs" style="left:270px;top:103.5px" width="48" height="48" viewBox="-24 -24 48 48"><rect x="-16" y="-16" width="32" height="32" fill="#6d97c9" stroke="#2d4a66" stroke-width="1.500"/><rect x="-16" y="-16" width="17" height="17" fill="#a9c3e2" stroke="#2d4a66" stroke-width="1.300"/><path d="M-16 -16L1 1M1 -16L-16 1M1 1L16 -16M1 -16V16M-16 1H16M-16 8.500H1M-7.500 1V16" stroke="#2d4a66" stroke-width="1.300" fill="none"/><path d="M1 -16H16V1H1Z" fill="#8fb0d8" stroke="#2d4a66" stroke-width="1.300"/><path d="M1 1L16 -16" stroke="#2d4a66" stroke-width="1.300"/><g transform="translate(11.5,11.5)"><rect x="-7.25" y="-7.25" width="14.5" height="14.5" rx="3" fill="#c9a50f"/><g stroke="#fff" stroke-width="1.700" stroke-linecap="round"><path d="M0 -5.200V5.200M-4.500 -2.600L4.500 2.600M-4.500 2.600L4.500 -2.600"/></g><circle r="1.5" fill="#c9a50f"/></g></svg>
<svg class="abs" style="left:319px;top:103.5px" width="48" height="48" viewBox="-24 -24 48 48"><rect x="-16" y="-16" width="32" height="32" rx="3" fill="url(#lgb)" stroke="#41699b" stroke-width="1.500"/><path d="M-13 -14L-5 9L5 -14H14" fill="none" stroke="#2d4a66" stroke-width="1.700"/><g fill="#fff" stroke="#2d4a66" stroke-width="1.500"><circle cx="-13.500" cy="-14" r="2.600"/><circle cx="-5" cy="10" r="2.800"/><circle cx="5" cy="-14" r="2.600"/><circle cx="14" cy="-14" r="2.600"/></g><g transform="translate(11.5,11.5)"><rect x="-7.25" y="-7.25" width="14.5" height="14.5" rx="3" fill="#c9a50f"/><g stroke="#fff" stroke-width="1.700" stroke-linecap="round"><path d="M0 -5.200V5.200M-4.500 -2.600L4.500 2.600M-4.500 2.600L4.500 -2.600"/></g><circle r="1.5" fill="#c9a50f"/></g></svg>
<svg class="abs" style="left:396px;top:103.5px" width="48" height="48" viewBox="-24 -24 48 48"><g opacity=".6"><g transform="translate(-6,-1)"><path d="M7 -17L14 -13.500L-8 13L-13 16.500L-12 10.500Z" fill="#dcd8cc" stroke="#c2beb4" stroke-width="1"/><path d="M-12 10.500L-8 13L-13 16.500Z" fill="#bdbdbd"/></g><g transform="translate(2,1)"><path d="M7 -17L14 -13.500L-8 13L-13 16.500L-12 10.500Z" fill="#dcd8cc" stroke="#c2beb4" stroke-width="1"/><path d="M-12 10.500L-8 13L-13 16.500Z" fill="#bdbdbd"/></g></g><g transform="translate(8,15)" opacity=".45"><path d="M-5.500 -3H5.500L0 3Z" fill="#888"/></g></svg>
<svg class="abs" style="left:445px;top:103.5px" width="48" height="48" viewBox="-24 -24 48 48"><g opacity=".6"><path d="M7 -17L14 -13.500L-8 13L-13 16.500L-12 10.500Z" fill="#dcd8cc" stroke="#c2beb4" stroke-width="1"/><path d="M-12 10.500L-8 13L-13 16.500Z" fill="#bdbdbd"/></g></svg>
<svg class="abs" style="left:494px;top:103.5px" width="48" height="48" viewBox="-24 -24 48 48"><g opacity=".5"><rect x="-14" y="-15" width="28" height="28.500" rx="3" fill="#dedede" stroke="#c3c3c3" stroke-width="1.500"/><rect x="-9" y="-12.500" width="18" height="11" fill="#f4f4f4" stroke="#cfcfcf"/><path d="M-6.500 -9.500H6.500M-6.500 -7H6.500M-6.500 -4.500H6.500" stroke="#c8c8c8" stroke-width="1.100"/><rect x="-8" y="4" width="15" height="9" fill="#eee" stroke="#ccc"/><g transform="translate(11,8) scale(.55)"><path d="M7 -17L14 -13.500L-8 13L-13 16.500L-12 10.500Z" fill="#dcd8cc" stroke="#c2beb4" stroke-width="1"/><path d="M-12 10.500L-8 13L-13 16.500Z" fill="#bdbdbd"/></g></g></svg>
<svg class="abs" style="left:544px;top:103.5px" width="48" height="48" viewBox="-24 -24 48 48"><g opacity=".5"><path d="M-13 12L11 -12" stroke="#bdbdbd" stroke-width="1.800" stroke-dasharray="4.500 3"/><rect x="-16" y="9" width="6" height="6" fill="#e4e4e4" stroke="#c4c4c4"/><rect x="8" y="-15" width="6" height="6" fill="#e4e4e4" stroke="#c4c4c4"/></g></svg>
<svg class="abs" style="left:617px;top:103.5px" width="48" height="48" viewBox="-24 -24 48 48"><g opacity=".55"><circle cx="-12" cy="1.500" r="4" fill="#e2e2e2" stroke="#bcbcbc" stroke-width="1.300"/><circle cx="-1.500" cy="-10.500" r="4" fill="#e2e2e2" stroke="#bcbcbc" stroke-width="1.300"/><circle cx="12" cy="-7.500" r="4" fill="#e2e2e2" stroke="#bcbcbc" stroke-width="1.300"/></g><g opacity=".55"><g transform="translate(10,11.5)"><rect x="-7.75" y="-7.75" width="15.5" height="15.5" rx="3" fill="#c9c5b8"/><g stroke="#fff" stroke-width="1.700" stroke-linecap="round"><path d="M0 -5.200V5.200M-4.500 -2.600L4.500 2.600M-4.500 2.600L4.500 -2.600"/></g><circle r="1.5" fill="#c9c5b8"/></g></g></svg>
<svg class="abs" style="left:666px;top:103.5px" width="48" height="48" viewBox="-24 -24 48 48"><g opacity=".5"><rect x="-14" y="-12" width="7.500" height="7.500" fill="#f2f2f2" stroke="#a9a9a9" stroke-width="1.300"/><path d="M-14 -12L-6.500 -4.500M-6.500 -12L-14 -4.500M-6.500 -8H9M-11 -4.500L-17 14" stroke="#a9a9a9" stroke-width="1.300"/><path d="M-5 14L7 0" stroke="#c4bfae" stroke-width="4.500"/><path d="M-2 0L11 14" stroke="#bcb7a8" stroke-width="4.500"/><ellipse cx="-1" cy="-1.500" rx="6" ry="3.500" transform="rotate(-30)" fill="#d4d4d4" stroke="#b4b4b4"/></g></svg>
<svg class="abs" style="left:738px;top:103.5px" width="48" height="48" viewBox="-24 -24 48 48"><g opacity=".55"><rect x="-16" y="-14" width="29" height="7.500" fill="#dcd8c8" stroke="#c9c5b5"/><rect x="-16" y="-3.500" width="29" height="7.500" fill="#dcd8c8" stroke="#c9c5b5"/><rect x="-16" y="7" width="29" height="7.500" fill="#dcd8c8" stroke="#c9c5b5"/><g transform="translate(5,-1)"><path d="M7 -17L14 -13.500L-8 13L-13 16.500L-12 10.500Z" fill="#dcd8cc" stroke="#c2beb4" stroke-width="1"/><path d="M-12 10.500L-8 13L-13 16.500Z" fill="#bdbdbd"/></g></g></svg>
<svg class="abs" style="left:787px;top:103.5px" width="48" height="48" viewBox="-24 -24 48 48"><g opacity=".5"><rect x="-14" y="-14.500" width="20" height="20" fill="#d5d1bd"/><path d="M-10.500 -6H11L9.500 16H-9Z" fill="#f1e9e9" stroke="#b79a9a" stroke-width="1.800" stroke-linejoin="round"/><path d="M-11.500 -10.500H12" stroke="#b79a9a" stroke-width="2.600" stroke-linecap="round"/><path d="M-3.500 -5V15M4 -5V15M-10 5H10.500" stroke="#b79a9a" stroke-width="1.500"/></g></svg>
<svg class="abs" style="left:837px;top:103.5px" width="48" height="48" viewBox="-24 -24 48 48"><g opacity=".5" fill="none"><path d="M-16 -10L8 7M-17 0L8 -3" stroke="#b8b8b8" stroke-width="2"/><ellipse cx="12" cy="-5.500" rx="5" ry="3.400" transform="rotate(-25 12 -5.500)" stroke="#b79a9a" stroke-width="2"/><ellipse cx="11" cy="9" rx="3.400" ry="5" transform="rotate(-35 11 9)" stroke="#b79a9a" stroke-width="2"/></g></svg>
<svg class="abs" style="left:886px;top:103.5px" width="48" height="48" viewBox="-24 -24 48 48"><g opacity=".55"><g transform="translate(5,-4)"><path d="M-8.500 -11H3.500L8.500 -6V11H-8.500Z" fill="#f7f7f7" stroke="#b5b5b5" stroke-width="1.400"/><path d="M3.500 -11V-6H8.500" fill="none" stroke="#b5b5b5" stroke-width="1.200"/><path d="M-5.500 -2H5.500M-5.500 1H5.500M-5.500 4H3M-5.500 7H5.500" stroke="#c6c6c6" stroke-width="1.200"/></g><g transform="translate(-3,5)"><path d="M-8.500 -11H3.500L8.500 -6V11H-8.500Z" fill="#f7f7f7" stroke="#b5b5b5" stroke-width="1.400"/><path d="M3.500 -11V-6H8.500" fill="none" stroke="#b5b5b5" stroke-width="1.200"/><path d="M-5.500 -2H5.500M-5.500 1H5.500M-5.500 4H3M-5.500 7H5.500" stroke="#c6c6c6" stroke-width="1.200"/></g></g></svg>
<svg class="abs" style="left:935px;top:103.5px" width="48" height="48" viewBox="-24 -24 48 48"><g opacity=".55"><rect x="-12" y="-13" width="23" height="29" fill="#e2dfd6" stroke="#bdb9ac" stroke-width="1.400"/><rect x="-6.500" y="-15.500" width="12" height="5.500" fill="#e6e6e6" stroke="#bdbdbd"/><g transform="translate(0,2) scale(.95)"><path d="M-8.500 -11H3.500L8.500 -6V11H-8.500Z" fill="#f7f7f7" stroke="#b5b5b5" stroke-width="1.400"/><path d="M3.500 -11V-6H8.500" fill="none" stroke="#b5b5b5" stroke-width="1.200"/><path d="M-5.500 -2H5.500M-5.500 1H5.500M-5.500 4H3M-5.500 7H5.500" stroke="#c6c6c6" stroke-width="1.200"/></g></g></svg>
<svg class="abs" style="left:985px;top:103.5px" width="48" height="48" viewBox="-24 -24 48 48"><g opacity=".5"><path d="M-13.500 -3L-2 -14V-7.500C8 -8.500 13 -3 12.500 4.500C12 10.500 6 14.500 0.500 13.500L0 9.500C6 9 6 1.500 -2 1.500V8Z" fill="#cfc8c0" stroke="#bdb6ae" stroke-width="1"/></g></svg>
<svg class="abs" style="left:1034px;top:103.5px" width="48" height="48" viewBox="-24 -24 48 48"><g opacity=".5"><path d="M13.500 -3L2 -14V-7.500C-8 -8.500 -13 -3 -12.500 4.500C-12 10.500 -6 14.500 -0.500 13.500L0 9.500C-6 9 -6 1.500 2 1.500V8Z" fill="#c9cdc9" stroke="#b7bcb7" stroke-width="1"/></g></svg>
<svg class="abs" style="left:1110px;top:103.5px" width="48" height="48" viewBox="-24 -24 48 48"><g opacity="0.75"><path d="M-17 -5.500L-10.500 -13H14V2H-10.500Z" fill="#dedccf" stroke="#c4c2b6" stroke-width="1.400" stroke-linejoin="round"/><text x="2.0" y="-1" font-size="12" font-weight="bold" text-anchor="middle" fill="#a8a8a8" font-family="Liberation Sans,sans-serif">abc</text></g></svg>
<svg class="abs" style="left:1159px;top:103.5px" width="48" height="48" viewBox="-24 -24 48 48"><g opacity=".6"><circle cx="-5" cy="-4" r="11" fill="#cfd6cf" stroke="#b9b9b9"/><path d="M-5 -4V-15A11 11 0 0 1 4.500 1.500Z" fill="#e1ddc9" stroke="#c3c3c3"/><path d="M-5 -4L4.500 1.500A11 11 0 0 1 -14.500 1.500Z" fill="#d9d0cf" stroke="#c3c3c3"/><rect x="2" y="3" width="5.500" height="13" fill="#d8c3c3"/><rect x="8.500" y="8" width="5.500" height="8" fill="#bfcdbf"/></g></svg>
<svg class="abs" style="left:1222px;top:103.5px" width="48" height="48" viewBox="-24 -24 48 48"><g opacity="1"><path d="M-17 -5.500L-10.500 -13H13V2H-10.500Z" fill="#dfe9f6" stroke="#5a86bd" stroke-width="1.400" stroke-linejoin="round"/><text x="1.5" y="-1" font-size="12" font-weight="bold" text-anchor="middle" fill="#222" font-family="Liberation Sans,sans-serif">ab</text><rect x="7" y="-6" width="4" height="11" rx="2" fill="#fff" stroke="#999" stroke-width=".8"/><circle cx="10.500" cy="10" r="6.600" fill="#a3191c" stroke="#7c1013" stroke-width=".8"/></g></svg>
<svg class="abs" style="left:1270px;top:103.5px" width="48" height="48" viewBox="-24 -24 48 48"><g opacity="1"><path d="M-17 -5.500L-10.500 -13H15V2H-10.500Z" fill="#fde0e0" stroke="#e8262b" stroke-width="1.400" stroke-linejoin="round"/><text x="2.5" y="-1" font-size="12" font-weight="bold" text-anchor="middle" fill="#e8262b" font-family="Liberation Sans,sans-serif">abc</text></g></svg>
<svg class="abs" style="left:1333px;top:103.5px" width="48" height="48" viewBox="-24 -24 48 48"><g opacity="0.7"><path d="M-17 -5.500L-10.500 -13H13V2H-10.500Z" fill="#dedccf" stroke="#c4c2b6" stroke-width="1.400" stroke-linejoin="round"/><text x="1.5" y="-1" font-size="12" font-weight="bold" text-anchor="middle" fill="#a8a8a8" font-family="Liberation Sans,sans-serif">ab</text><rect x="7" y="-6" width="4" height="11" rx="2" fill="#f4f4f4" stroke="#bbb" stroke-width=".8"/><circle cx="10.500" cy="10" r="6.600" fill="#cfc7c7" stroke="#bdb5b5" stroke-width=".8"/></g></svg>
<svg class="abs" style="left:1383px;top:103.5px" width="48" height="48" viewBox="-24 -24 48 48"><g opacity="0.7"><path d="M-17 -5.500L-10.500 -13H15V2H-10.500Z" fill="#dedccf" stroke="#c4c2b6" stroke-width="1.400" stroke-linejoin="round"/><text x="2.5" y="-1" font-size="12" font-weight="bold" text-anchor="middle" fill="#a8a8a8" font-family="Liberation Sans,sans-serif">abc</text><path d="M-7 11Q4 1 15 11Q4 20 -7 11Z" fill="#f2f2f2" stroke="#b5b5b5"/><circle cx="4" cy="11" r="3.500" fill="#c6c6c6"/></g></svg>
<svg class="abs" style="left:1432px;top:103.5px" width="48" height="48" viewBox="-24 -24 48 48"><g opacity="0.7"><path d="M-17 -5.500L-10.500 -13H15V2H-10.500Z" fill="#dedccf" stroke="#c4c2b6" stroke-width="1.400" stroke-linejoin="round"/><text x="2.5" y="-1" font-size="12" font-weight="bold" text-anchor="middle" fill="#a8a8a8" font-family="Liberation Sans,sans-serif">abc</text><rect x="3" y="3.500" width="14" height="13.500" rx="2" fill="#c9c9c9"/><path d="M5.500 10H12M10 6.500L13.500 10L10 13.500" stroke="#fff" stroke-width="2" fill="none"/></g></svg>
<svg class="abs" style="left:1481px;top:103.5px" width="48" height="48" viewBox="-24 -24 48 48"><g opacity="0.7"><path d="M-17 -5.500L-10.500 -13H15V2H-10.500Z" fill="#dedccf" stroke="#c4c2b6" stroke-width="1.400" stroke-linejoin="round"/><text x="2.5" y="-1" font-size="12" font-weight="bold" text-anchor="middle" fill="#a8a8a8" font-family="Liberation Sans,sans-serif">abc</text><rect x="3" y="3.500" width="14" height="13.500" rx="2" fill="#c9c9c9"/><path d="M13.500 10A3.800 3.800 0 1 1 10 6.300" stroke="#fff" stroke-width="2" fill="none"/></g></svg>
<svg class="abs" style="left:1530px;top:103.5px" width="48" height="48" viewBox="-24 -24 48 48"><g opacity="0.7"><path d="M-17 -5.500L-10.500 -13H15V2H-10.500Z" fill="#dedccf" stroke="#c4c2b6" stroke-width="1.400" stroke-linejoin="round"/><text x="2.5" y="-1" font-size="12" font-weight="bold" text-anchor="middle" fill="#a8a8a8" font-family="Liberation Sans,sans-serif">abc</text><rect x="3" y="3.500" width="14" height="13.500" rx="2" fill="#d4d0c0"/><path d="M6.500 14L13.500 7" stroke="#fff" stroke-width="2.500"/></g></svg>
<svg class="abs" style="left:1609px;top:103.5px" width="48" height="48" viewBox="-24 -24 48 48"><g transform="translate(0,-2.500) scale(1.1,.97)"><circle r="16" fill="url(#lgglobe)" stroke="#2f4f7a" stroke-width="1.400"/><g fill="none" stroke="#e8f0fa" stroke-width="1.300"><ellipse rx="7.2" ry="16"/><path d="M0 -16V16M-16 0H16M-13.76 -8.0H13.76M-13.76 8.0H13.76"/></g></g><g fill="#111"><rect x="-13" y="5" width="10" height="12" rx="4"/><rect x="3" y="5" width="10" height="12" rx="4"/><rect x="-5" y="6" width="10" height="5"/><circle cx="-8" cy="14" r="5.800"/><circle cx="8" cy="14" r="5.800"/></g><circle cx="-8" cy="14.500" r="1.900" fill="#777"/><circle cx="8" cy="14.500" r="1.900" fill="#777"/></svg>
<svg class="abs" style="left:1658px;top:103.5px" width="48" height="48" viewBox="-24 -24 48 48"><g transform="translate(-1,-2) scale(1.12,1)"><circle r="15.5" fill="url(#lgglobe)" stroke="#2f4f7a" stroke-width="1.400"/><g fill="none" stroke="#e8f0fa" stroke-width="1.300"><ellipse rx="6.9750000000000005" ry="15.5"/><path d="M0 -15.5V15.5M-15.5 0H15.5M-13.33 -7.75H13.33M-13.33 7.75H13.33"/></g></g><rect x="3.500" y="4" width="13.500" height="13" rx="2" fill="#5b9a63" stroke="#47814f"/><path d="M6 9H14.500L10.200 15Z" fill="#222"/></svg>
<svg class="abs" style="left:1707px;top:103.5px" width="48" height="48" viewBox="-24 -24 48 48"><g transform="translate(-1,-2) scale(1.12,1)"><circle r="15.5" fill="url(#lgglobe)" stroke="#2f4f7a" stroke-width="1.400"/><g fill="none" stroke="#e8f0fa" stroke-width="1.300"><ellipse rx="6.9750000000000005" ry="15.5"/><path d="M0 -15.5V15.5M-15.5 0H15.5M-13.33 -7.75H13.33M-13.33 7.75H13.33"/></g></g><rect x="3.500" y="4" width="13.500" height="13" rx="2" fill="#5b9a63" stroke="#47814f"/><circle cx="9.500" cy="9.800" r="3" fill="none" stroke="#fff" stroke-width="1.600"/><path d="M11.800 12L14.500 15" stroke="#fff" stroke-width="1.800"/></svg>
<svg class="abs" style="left:1784px;top:103.5px" width="48" height="48" viewBox="-24 -24 48 48"><g transform="translate(-0.5,0) scale(.87)"><path d="M-1 -16.500C-8 -16.500 -8.500 -13.500 -8.500 -11V-7H0.500V-5.500H-12C-16 -5.500 -17.500 -2 -17.500 2C-17.500 6 -16 9 -12.500 9H-9V4.500C-9 1 -6.500 -1.500 -3 -1.500H4C7 -1.500 8.500 -3.500 8.500 -6V-11C8.500 -14.500 5.500 -16.500 -1 -16.500Z" fill="#3b77a8"/><circle cx="-4.500" cy="-12.300" r="1.700" fill="#fff"/><path d="M1 16.500C8 16.500 8.500 13.500 8.500 11V7H-0.500V5.500H12C16 5.500 17.500 2 17.500 -2C17.500 -6 16 -9 12.500 -9H9V-4.500C9 -1 6.500 1.500 3 1.500H-4C-7 1.500 -8.500 3.500 -8.500 6V11C-8.500 14.500 -5.500 16.500 1 16.500Z" fill="#ffd040"/><circle cx="4.500" cy="12.300" r="1.700" fill="#fff"/><path d="M8.500 9.500L18 13.500L8.500 17.500" fill="none" stroke="#222" stroke-width="1.900"/></g></svg>
<svg class="abs" style="left:1860px;top:103.5px" width="48" height="48" viewBox="-24 -24 48 48"><rect x="-16" y="-16" width="31" height="33" rx="2" fill="#2c3a4e"/><rect x="-9" y="-14.500" width="23" height="30" fill="#6d97c9" stroke="#2c3a4e" stroke-width="1"/><text x="3" y="8" font-size="22" text-anchor="middle" fill="#fff" font-family="Liberation Sans,sans-serif">?</text></svg>
<svg class="abs" style="left:594px;top:122px;opacity:1" width="16" height="10" viewBox="-8 -5 16 10"><path d="M-6.500 -3.500H6.500L0 3.500Z" fill="#c4c4c4"/></svg>
<svg class="abs" style="left:716px;top:122px;opacity:1" width="16" height="10" viewBox="-8 -5 16 10"><path d="M-6.500 -3.500H6.500L0 3.500Z" fill="#c4c4c4"/></svg>
<div class="abs" style="left:1215px;top:112px;width:1.5px;height:30px;background:#cdcdcd"></div>
<div class="abs" style="left:1326px;top:112px;width:1.5px;height:30px;background:#cdcdcd"></div>
<div class="t " style="left:6.2px;top:167px;font-size:22.2px;letter-spacing:-0.022px;">Layers</div>
<div class="abs" style="left:0px;top:252px;width:419.3px;height:1240px;background:#fff;border-top:1.5px solid #c8c8c8;border-left:1.5px solid #c8c8c8"></div>
<div class="abs" style="left:2px;top:254px;width:417px;height:1212px;overflow:hidden">
<svg class="abs" style="left:9.5px;top:14px" width="18" height="10"><path d="M1.5 1.5h14l-7 7z" fill="#5a5a5a"/></svg>
<div class="cb" style="left:41.8px;top:5.699999999999999px"></div>
<svg class="abs" style="left:41.8px;top:5.699999999999999px" width="25" height="25"><path d="M5.5 12.5l5.5 8.5 8.5-16" fill="none" stroke="#000" stroke-width="3.2"/></svg>
<svg class="abs" style="left:77px;top:5px" width="28" height="28" viewBox="-14 -14 28 28"><path d="M-12 2V11.500H-4" fill="none" stroke="#8a8a8a" stroke-width="1.300"/><rect x="-8" y="-3" width="13" height="11.500" fill="#ececec" stroke="#8a8a8a" stroke-width="1.300"/><rect x="-3.500" y="-7.500" width="13" height="11.500" fill="#e0e0e0" stroke="#8a8a8a" stroke-width="1.300"/><path d="M0.500 3V-8.500A2.300 2.300 0 0 1 5 -8.500V1" fill="none" stroke="#3c6fa8" stroke-width="1.500"/></svg>
<div class="t tree" style="left:115.4px;top:8.2px;font-size:22px;letter-spacing:0.451px;">Kenya40x40_model</div>
<svg class="abs" style="left:51.5px;top:46px" width="10" height="17"><path d="M1.5 1l7 7.5-7 7.5z" fill="#5a5a5a"/></svg>
<div class="cb" style="left:78.8px;top:41.7px"></div>
<svg class="abs" style="left:115px;top:41px" width="28" height="28" viewBox="-14 -14 28 28"><g fill="#fff" stroke="#8a8a8a" stroke-width="1.300"><circle cx="-7.500" cy="8" r="2.300"/><circle cx="-4" cy="-5" r="2.300"/><circle cx="8.500" cy="-10" r="2.300"/></g></svg>
<div class="t tree gray" style="left:153.4px;top:44.2px;font-size:22px;letter-spacing:0.182px;">points</div>
<svg class="abs" style="left:51.5px;top:82px" width="10" height="17"><path d="M1.5 1l7 7.5-7 7.5z" fill="#5a5a5a"/></svg>
<div class="cb" style="left:78.8px;top:77.7px"></div>
<svg class="abs" style="left:78.8px;top:77.7px" width="25" height="25"><path d="M5.5 12.5l5.5 8.5 8.5-16" fill="none" stroke="#000" stroke-width="3.2"/></svg>
<svg class="abs" style="left:115px;top:77px" width="28" height="28" viewBox="-14 -14 28 28"><g fill="#fff" stroke="#8a8a8a" stroke-width="1.300"><circle cx="-7.500" cy="8" r="2.300"/><circle cx="-4" cy="-5" r="2.300"/><circle cx="8.500" cy="-10" r="2.300"/></g></svg>
<div class="t tree" style="left:153.4px;top:80.2px;font-size:22px;letter-spacing:0.747px;">doi</div>
<svg class="abs" style="left:51.5px;top:118px" width="10" height="17"><path d="M1.5 1l7 7.5-7 7.5z" fill="#5a5a5a"/></svg>
<div class="cb" style="left:78.8px;top:113.7px"></div>
<svg class="abs" style="left:78.8px;top:113.7px" width="25" height="25"><path d="M5.5 12.5l5.5 8.5 8.5-16" fill="none" stroke="#000" stroke-width="3.2"/></svg>
<svg class="abs" style="left:115px;top:113px" width="28" height="28" viewBox="-14 -14 28 28"><path d="M-11 -7L-4 9L4.500 -9.500H12" fill="none" stroke="#8a8a8a" stroke-width="1.300"/><g fill="#fff" stroke="#8a8a8a" stroke-width="1.200"><circle cx="-11.500" cy="-8" r="2.300"/><circle cx="-4" cy="10" r="2.300"/><circle cx="4.500" cy="-10" r="2.100"/><circle cx="12" cy="-10" r="2.100"/></g></svg>
<div class="t tree" style="left:153.4px;top:116.2px;font-size:22px;letter-spacing:0.286px;">layers</div>
<svg class="abs" style="left:9.5px;top:158px" width="18" height="10"><path d="M1.5 1.5h14l-7 7z" fill="#5a5a5a"/></svg>
<div class="cb" style="left:41.8px;top:149.7px"></div>
<svg class="abs" style="left:41.8px;top:149.7px" width="25" height="25"><path d="M5.5 12.5l5.5 8.5 8.5-16" fill="none" stroke="#000" stroke-width="3.2"/></svg>
<svg class="abs" style="left:77px;top:149px" width="28" height="28" viewBox="-14 -14 28 28"><path d="M-12 2V11.500H-4" fill="none" stroke="#8a8a8a" stroke-width="1.300"/><rect x="-8" y="-3" width="13" height="11.500" fill="#ececec" stroke="#8a8a8a" stroke-width="1.300"/><rect x="-3.500" y="-7.500" width="13" height="11.500" fill="#e0e0e0" stroke="#8a8a8a" stroke-width="1.300"/><path d="M0.500 3V-8.500A2.300 2.300 0 0 1 5 -8.500V1" fill="none" stroke="#3c6fa8" stroke-width="1.500"/></svg>
<div class="t tree" style="left:115.4px;top:152.2px;font-size:22px;letter-spacing:0.584px;">Kenya_profiler_model</div>
<svg class="abs" style="left:51.5px;top:190px" width="10" height="17"><path d="M1.5 1l7 7.5-7 7.5z" fill="#5a5a5a"/></svg>
<div class="cb" style="left:78.8px;top:185.7px"></div>
<svg class="abs" style="left:115px;top:185px" width="28" height="28" viewBox="-14 -14 28 28"><g fill="#fff" stroke="#8a8a8a" stroke-width="1.300"><circle cx="-7.500" cy="8" r="2.300"/><circle cx="-4" cy="-5" r="2.300"/><circle cx="8.500" cy="-10" r="2.300"/></g></svg>
<div class="t tree gray" style="left:153.4px;top:188.2px;font-size:22px;letter-spacing:0.182px;">points</div>
<svg class="abs" style="left:51.5px;top:226px" width="10" height="17"><path d="M1.5 1l7 7.5-7 7.5z" fill="#5a5a5a"/></svg>
<div class="cb" style="left:78.8px;top:221.7px"></div>
<svg class="abs" style="left:78.8px;top:221.7px" width="25" height="25"><path d="M5.5 12.5l5.5 8.5 8.5-16" fill="none" stroke="#000" stroke-width="3.2"/></svg>
<svg class="abs" style="left:115px;top:221px" width="28" height="28" viewBox="-14 -14 28 28"><g fill="#fff" stroke="#8a8a8a" stroke-width="1.300"><circle cx="-7.500" cy="8" r="2.300"/><circle cx="-4" cy="-5" r="2.300"/><circle cx="8.500" cy="-10" r="2.300"/></g></svg>
<div class="t tree" style="left:153.4px;top:224.2px;font-size:22px;letter-spacing:0.747px;">doi</div>
<svg class="abs" style="left:51.5px;top:262px" width="10" height="17"><path d="M1.5 1l7 7.5-7 7.5z" fill="#5a5a5a"/></svg>
<div class="cb" style="left:78.8px;top:257.7px"></div>
<svg class="abs" style="left:78.8px;top:257.7px" width="25" height="25"><path d="M5.5 12.5l5.5 8.5 8.5-16" fill="none" stroke="#000" stroke-width="3.2"/></svg>
<svg class="abs" style="left:115px;top:257px" width="28" height="28" viewBox="-14 -14 28 28"><path d="M-11 -7L-4 9L4.500 -9.500H12" fill="none" stroke="#8a8a8a" stroke-width="1.300"/><g fill="#fff" stroke="#8a8a8a" stroke-width="1.200"><circle cx="-11.500" cy="-8" r="2.300"/><circle cx="-4" cy="10" r="2.300"/><circle cx="4.500" cy="-10" r="2.100"/><circle cx="12" cy="-10" r="2.100"/></g></svg>
<div class="t tree" style="left:153.4px;top:260.2px;font-size:22px;letter-spacing:0.286px;">layers</div>
<svg class="abs" style="left:9.5px;top:302px" width="18" height="10"><path d="M1.5 1.5h14l-7 7z" fill="#5a5a5a"/></svg>
<div class="cb" style="left:41.8px;top:293.7px"></div>
<svg class="abs" style="left:41.8px;top:293.7px" width="25" height="25"><path d="M5.5 12.5l5.5 8.5 8.5-16" fill="none" stroke="#000" stroke-width="3.2"/></svg>
<svg class="abs" style="left:77px;top:293px" width="28" height="28" viewBox="-14 -14 28 28"><path d="M-12 2V11.500H-4" fill="none" stroke="#8a8a8a" stroke-width="1.300"/><rect x="-8" y="-3" width="13" height="11.500" fill="#ececec" stroke="#8a8a8a" stroke-width="1.300"/><rect x="-3.500" y="-7.500" width="13" height="11.500" fill="#e0e0e0" stroke="#8a8a8a" stroke-width="1.300"/><path d="M0.500 3V-8.500A2.300 2.300 0 0 1 5 -8.500V1" fill="none" stroke="#3c6fa8" stroke-width="1.500"/></svg>
<div class="t tree" style="left:115.4px;top:296.2px;font-size:22px;letter-spacing:0.51px;">Kenya_profiler_November_V4</div>
<svg class="abs" style="left:51.5px;top:334px" width="10" height="17"><path d="M1.5 1l7 7.5-7 7.5z" fill="#5a5a5a"/></svg>
<div class="cb" style="left:78.8px;top:329.7px"></div>
<svg class="abs" style="left:115px;top:329px" width="28" height="28" viewBox="-14 -14 28 28"><g fill="#fff" stroke="#8a8a8a" stroke-width="1.300"><circle cx="-7.500" cy="8" r="2.300"/><circle cx="-4" cy="-5" r="2.300"/><circle cx="8.500" cy="-10" r="2.300"/></g></svg>
<div class="t tree gray" style="left:153.4px;top:332.2px;font-size:22px;letter-spacing:0.182px;">points</div>
<svg class="abs" style="left:51.5px;top:370px" width="10" height="17"><path d="M1.5 1l7 7.5-7 7.5z" fill="#5a5a5a"/></svg>
<div class="cb" style="left:78.8px;top:365.7px"></div>
<svg class="abs" style="left:78.8px;top:365.7px" width="25" height="25"><path d="M5.5 12.5l5.5 8.5 8.5-16" fill="none" stroke="#000" stroke-width="3.2"/></svg>
<svg class="abs" style="left:115px;top:365px" width="28" height="28" viewBox="-14 -14 28 28"><g fill="#fff" stroke="#8a8a8a" stroke-width="1.300"><circle cx="-7.500" cy="8" r="2.300"/><circle cx="-4" cy="-5" r="2.300"/><circle cx="8.500" cy="-10" r="2.300"/></g></svg>
<div class="t tree" style="left:153.4px;top:368.2px;font-size:22px;letter-spacing:0.747px;">doi</div>
<svg class="abs" style="left:51.5px;top:406px" width="10" height="17"><path d="M1.5 1l7 7.5-7 7.5z" fill="#5a5a5a"/></svg>
<div class="cb" style="left:78.8px;top:401.7px"></div>
<svg class="abs" style="left:78.8px;top:401.7px" width="25" height="25"><path d="M5.5 12.5l5.5 8.5 8.5-16" fill="none" stroke="#000" stroke-width="3.2"/></svg>
<svg class="abs" style="left:115px;top:401px" width="28" height="28" viewBox="-14 -14 28 28"><path d="M-11 -7L-4 9L4.500 -9.500H12" fill="none" stroke="#8a8a8a" stroke-width="1.300"/><g fill="#fff" stroke="#8a8a8a" stroke-width="1.200"><circle cx="-11.500" cy="-8" r="2.300"/><circle cx="-4" cy="10" r="2.300"/><circle cx="4.500" cy="-10" r="2.100"/><circle cx="12" cy="-10" r="2.100"/></g></svg>
<div class="t tree" style="left:153.4px;top:404.2px;font-size:22px;letter-spacing:0.286px;">layers</div>
<svg class="abs" style="left:9.5px;top:446px" width="18" height="10"><path d="M1.5 1.5h14l-7 7z" fill="#5a5a5a"/></svg>
<div class="cb" style="left:41.8px;top:437.7px"></div>
<svg class="abs" style="left:77px;top:437px" width="28" height="28" viewBox="-14 -14 28 28"><rect x="-12" y="-12" width="24" height="24" fill="#a9c4e4"/><rect x="-12" y="-12" width="8" height="8" fill="#2c3a4e"/><rect x="4" y="-12" width="8" height="8" fill="#2c3a4e"/><rect x="-4" y="-4" width="8" height="8" fill="#2c3a4e"/><rect x="-12" y="4" width="8" height="8" fill="#2c3a4e"/><rect x="4" y="4" width="8" height="8" fill="#fff"/></svg>
<div class="t tree gray" style="left:115.4px;top:440.2px;font-size:22px;letter-spacing:0.105px;">OpenTopoMap</div>
<svg class="abs" style="left:9.5px;top:482px" width="18" height="10"><path d="M1.5 1.5h14l-7 7z" fill="#5a5a5a"/></svg>
<div class="cb" style="left:41.8px;top:473.7px"></div>
<svg class="abs" style="left:41.8px;top:473.7px" width="25" height="25"><path d="M5.5 12.5l5.5 8.5 8.5-16" fill="none" stroke="#000" stroke-width="3.2"/></svg>
<svg class="abs" style="left:77px;top:473px" width="28" height="28" viewBox="-14 -14 28 28"><rect x="-12" y="-12" width="24" height="24" fill="#a9c4e4"/><rect x="-12" y="-12" width="8" height="8" fill="#2c3a4e"/><rect x="4" y="-12" width="8" height="8" fill="#2c3a4e"/><rect x="-4" y="-4" width="8" height="8" fill="#2c3a4e"/><rect x="-12" y="4" width="8" height="8" fill="#2c3a4e"/><rect x="4" y="4" width="8" height="8" fill="#fff"/></svg>
<div class="t tree" style="left:115.4px;top:476.2px;font-size:22px;letter-spacing:0.399px;">OSM Standard</div>
</div>
<div class="abs" style="left:2px;top:1468px;width:417px;height:24px;background:linear-gradient(#fff,#e4e4e4);border-bottom:1.5px solid #c4c4c4"></div>
<div class="abs" style="left:307px;top:1469px;width:86px;height:23px;background:#e0e0e0;border-left:1px solid #c0c0c0;border-right:1px solid #c0c0c0"></div>
<svg class="abs" style="left:6px;top:1472px" width="12" height="18"><path d="M10 1v16l-9-8z" fill="#505050"/></svg>
<svg class="abs" style="left:399px;top:1472px" width="12" height="18"><path d="M2 1v16l9-8z" fill="#505050"/></svg>
<svg class="abs" style="left:10px;top:208px" width="28" height="28" viewBox="-14 -14 28 28"><path d="M-11 1L-4 -5.500L4 -3L-1 6Z" fill="#f3c72c"/><path d="M-11 1L-1 6L-3 10.500L-12 5Z" fill="#e02b2b"/><path d="M-4 -5.500L0 -8L5.500 -5L4 -3Z" fill="#5d8fce"/><path d="M11.500 -10.500L2.500 0.500" stroke="#c98a2b" stroke-width="2.400" stroke-linecap="round"/><path d="M-1 1L4 -1.500L6.500 3.500L1.500 8C0 6 -1 3.500 -1 1Z" fill="#e7b04a" stroke="#b9852a" stroke-width=".8"/></svg>
<svg class="abs" style="left:48px;top:208px" width="28" height="28" viewBox="-14 -14 28 28"><path d="M-12 2V11.500H-4" fill="none" stroke="#8a8a8a" stroke-width="1.300"/><rect x="-8" y="-3" width="13" height="11.500" fill="#ececec" stroke="#8a8a8a" stroke-width="1.300"/><rect x="-3.500" y="-7.500" width="13" height="11.500" fill="#e0e0e0" stroke="#8a8a8a" stroke-width="1.300"/><path d="M0.500 3V-8.500A2.300 2.300 0 0 1 5 -8.500V1" fill="none" stroke="#3c6fa8" stroke-width="1.500"/><g transform="translate(7,8)"><rect x="-4.5" y="-4.5" width="9" height="9" rx="1.800" fill="#5b9a63" stroke="#47814f" stroke-width=".8"/><path d="M0 -2.800V2.800M-2.800 0H2.800" stroke="#fff" stroke-width="1.800"/></g></svg>
<svg class="abs" style="left:90px;top:208px" width="28" height="28" viewBox="-14 -14 28 28"><path d="M-11.500 1C-6 -7.500 6 -7.500 11.500 1C6 8 -6 8 -11.500 1Z" fill="#fff" stroke="#777" stroke-width="1.100"/><circle cx="0" cy="0" r="4.600" fill="#5d8fce" stroke="#2d4a66" stroke-width=".8"/><circle cx="0" cy="0" r="1.800" fill="#111"/><path d="M-10 -5C-5 -10 5 -10 10 -5" fill="none" stroke="#999" stroke-width=".9"/></svg>
<svg class="abs" style="left:141px;top:208px" width="28" height="28" viewBox="-14 -14 28 28"><path d="M-10 -8.500H10L2.500 2V11L-2.500 8.500V2Z" fill="#6d97c9" stroke="#41699b" stroke-width="1"/><rect x="-10.500" y="-11.500" width="21" height="3.600" rx="1" fill="#f7d038" stroke="#c9a21d" stroke-width=".8"/></svg>
<svg class="abs" style="left:191px;top:208px" width="28" height="28" viewBox="-14 -14 28 28"><g opacity=".5"><text x="-11" y="4" font-size="19" fill="#aaa" font-family="Liberation Serif,serif">ε</text><path d="M1 1H11V11H8V7H4V11H1Z" fill="#d5d5d5"/></g></svg>
<svg class="abs" style="left:256px;top:208px" width="28" height="28" viewBox="-14 -14 28 28"><path d="M-11 -9H-2M-8.500 -9V10" stroke="#9a9a9a" stroke-width="1.200" fill="none"/><rect x="-6.500" y="-5" width="4" height="4" fill="#f7a030" stroke="#e08a1a" stroke-width=".8"/><rect x="-6.500" y="4.500" width="4" height="4" fill="#f7a030" stroke="#e08a1a" stroke-width=".8"/><path d="M2.500 -11H8.500V1H12L5.500 11L-1 1H2.500Z" fill="#6d97c9" stroke="#41699b" stroke-width="1"/></svg>
<svg class="abs" style="left:294px;top:208px" width="28" height="28" viewBox="-14 -14 28 28"><path d="M-11 -9H-2M-8.500 -9V10" stroke="#9a9a9a" stroke-width="1.200" fill="none"/><rect x="-6.500" y="-5" width="4" height="4" fill="#f7a030" stroke="#e08a1a" stroke-width=".8"/><rect x="-6.500" y="4.500" width="4" height="4" fill="#f7a030" stroke="#e08a1a" stroke-width=".8"/><path d="M2.500 11H8.500V-1H12L5.500 -11L-1 -1H2.500Z" fill="#6d97c9" stroke="#41699b" stroke-width="1"/></svg>
<svg class="abs" style="left:331px;top:208px" width="28" height="28" viewBox="-14 -14 28 28"><rect x="-10" y="-10" width="16.500" height="16" fill="#f6f6f6" stroke="#8b8b8b" stroke-width="1.400"/><rect x="2" y="4.500" width="9.500" height="7" rx="2" fill="#e8394a"/><path d="M4 8H9.500" stroke="#fff" stroke-width="1.800"/></svg>
<svg class="abs" style="left:110px;top:230px;opacity:1" width="16" height="10" viewBox="-8 -5 16 10"><path d="M-6.500 -3.500H6.500L0 3.500Z" fill="#4a4a4a"/></svg>
<svg class="abs" style="left:160px;top:230px;opacity:1" width="16" height="10" viewBox="-8 -5 16 10"><path d="M-6.500 -3.500H6.500L0 3.500Z" fill="#4a4a4a"/></svg>
<svg class="abs" style="left:230px;top:217px;opacity:1" width="16" height="10" viewBox="-8 -5 16 10"><path d="M-6.500 -3.500H6.500L0 3.500Z" fill="#c8c8c8"/></svg>
<svg class="abs" style="left:379.3px;top:166.6px" width="40" height="18" viewBox="0 0 40 18"><g fill="none" stroke="#555" stroke-width="1.200"><rect x="0.800" y="0.800" width="15.500" height="15.500" rx="2.500" stroke="#6e6e6e" stroke-width="1.500"/><rect x="7.500" y="3.800" width="6" height="6" stroke="#666" stroke-width="1.500"/><rect x="3.800" y="7.300" width="6" height="6" fill="#efefef" stroke="#666" stroke-width="1.500"/><rect x="21.800" y="0.800" width="15.500" height="15.500" rx="2.500" stroke="#6e6e6e" stroke-width="1.500"/></g><path d="M25.500 4.500L33.600 12.600M33.600 4.500L25.500 12.600" stroke="#5e5e5e" stroke-width="2.800" stroke-linecap="round"/></svg>
<svg class="abs" style="left:2171.5px;top:815.6px" width="40" height="18" viewBox="0 0 40 18"><g fill="none" stroke="#555" stroke-width="1.200"><rect x="0.800" y="0.800" width="15.500" height="15.500" rx="2.500" stroke="#6e6e6e" stroke-width="1.500"/><rect x="7.500" y="3.800" width="6" height="6" stroke="#666" stroke-width="1.500"/><rect x="3.800" y="7.300" width="6" height="6" fill="#efefef" stroke="#666" stroke-width="1.500"/><rect x="21.800" y="0.800" width="15.500" height="15.500" rx="2.500" stroke="#6e6e6e" stroke-width="1.500"/></g><path d="M25.500 4.500L33.600 12.600M33.600 4.500L25.500 12.600" stroke="#5e5e5e" stroke-width="2.800" stroke-linecap="round"/></svg>
<svg class="abs" style="left:432px;top:158px" width="1780" height="637" viewBox="432 158 1780 637" font-family="Liberation Sans, sans-serif">
<rect x="432" y="158" width="1780" height="637" fill="#f2efe9"/>
<g fill="#edf0d6"><path d="M1656.2 470.0 L1673.2 470.0 L1677.5 508.2 L1660.5 510.4z"/><path d="M1671.1 512.5 L1681.7 514.6 L1686.0 540.1 L1673.2 540.1z"/><path d="M1654.1 599.6 L1679.6 606.0 L1681.7 623.0 L1664.7 623.0z"/><path d="M1713.6 606.0 L1758.2 640.0 L1777.4 646.4 L1782.0 686.7 L1726.4 701.6 L1705.1 699.5 L1715.7 640.0z"/><path d="M1642 447l68 -4l2 24l-66 5z" opacity=".8"/></g>
<path d="M1168.0 797.0 L1312.0 703.7 L1384.0 658.0 L1628.6 631.5" fill="none" stroke="#c4e0c0" stroke-width="7" stroke-linejoin="round"/><path d="M1168.0 797.0 L1312.0 703.7 L1384.0 658.0 L1628.6 631.5" fill="none" stroke="#a5d0a3" stroke-width="2.2" stroke-linejoin="round"/>
<path d="M667.9 796.0 L738.0 733.5" fill="none" stroke="#b5d9a5" stroke-width="3.5"/>
<path d="M1628.6 631.5 L1692.4 719.7 L1677.0 797.0" fill="none" stroke="#a9d4a7" stroke-width="3.200" stroke-linejoin="round"/>
<g fill="none" stroke-linejoin="round" stroke-linecap="round"><path d="M432.0 338.3 L458.9 286.5 L488.0 238.8 L535.6 162.1 M442.4 456.5 L508.7 342.5 L531.5 301.0 L552.2 265.8 L570.9 234.7 L597.8 187.0 L614.4 160.1 M548.1 448.2 L581.3 392.2 L606.1 394.3 L626.9 404.7 L639.3 373.6 M612.3 365.3 L637.2 299.0 L658.0 234.7 L676.6 182.9 L683.9 160.1 M656.9 375.7 L676.6 315.5 L691.1 280.3 L693.2 251.3 M432.0 229.5 L488.0 239.9 L514.9 257.5 L552.2 265.8 L676.6 315.5 L699.4 323.8 M610.3 164.2 L740.9 207.8 M583.3 178.7 L597.8 180.8 L738.8 226.4 M595.8 208.8 L730.5 257.5 M568.8 236.8 L722.2 290.7 M548.1 278.2 L699.4 336.3 M539.8 290.7 L691.1 348.7 M531.5 303.1 L618.6 336.3 L680.8 361.2 M458.9 310.4 L504.6 321.8 L529.4 301.0 M432.0 342.5 L496.3 360.1 M508.7 342.5 L556.4 376.7 L575.0 337.3 L589.5 341.5 M432.0 269.9 L444.4 271.0 L471.4 261.6 M465.2 286.5 L529.4 301.0 M485.9 290.7 L514.9 257.5 M436.1 195.3 L488.0 201.5 M436.1 195.3 L458.9 158.0 M432.0 373.6 L450.7 375.7 M432.0 415.0 L463.1 417.1 M440.3 442.0 L454.8 419.2 M660.0 294.8 L668.3 269.9 M705.6 255.4 L691.1 280.3 M581.3 392.2 L566.7 419.2 M606.1 394.3 L680.8 431.6 L697.3 427.5 L726.4 452.4 L763.7 478.1 M637.2 388.1 L676.6 404.7 L666.2 429.6 M653.8 386.0 L672.5 396.4 M566.7 423.3 L639.3 460.7 M483.8 442.0 L539.8 468.9 M471.4 446.1 L527.4 473.1 M463.1 454.4 L514.9 478.1 M498.3 454.4 L488.0 478.1 M626.9 404.7 L610.3 433.7 M722.2 452.4 L709.8 478.1 M655.9 444.1 L682.8 460.7 M755.0 160.0 L756.8 270.0 L755.0 380.0 M786.5 160.0 L787.1 264.0 L786.5 368.0 M815.5 160.0 L816.8 251.5 L815.5 343.0 M844.5 160.0 L844.0 251.5 L844.5 343.0 M873.0 160.0 L874.6 251.5 L873.0 343.0 M902.0 160.0 L900.1 264.0 L902.0 368.0 M935.6 160.0 L935.3 264.0 L935.6 368.0 M969.0 160.0 L967.4 230.0 L969.0 300.0 M725.0 167.5 L857.5 165.7 L990.0 167.5 M725.0 190.5 L862.5 189.0 L1000.0 190.5 M725.0 213.5 L847.0 214.0 L969.0 213.5 M725.0 238.6 L862.5 240.4 L1000.0 238.6 M725.0 263.7 L862.5 264.0 L1000.0 263.7 M725.0 293.0 L847.0 294.9 L969.0 293.0 M725.0 318.0 L802.5 318.2 L880.0 318.0 M700.0 343.0 L790.0 342.2 L880.0 343.0 M700.0 368.0 L790.0 368.2 L880.0 368.0 M845.0 343.0 L845.0 400.0 L935.0 412.0 L935.0 368.0 M700.0 380.0 L820.0 385.0 L820.0 400.0 L900.0 405.0 M480.9 491.2 L493.6 470.0 M505.3 546.5 L521.2 510.4 L542.5 470.0 M556.3 545.4 L568.0 523.1 L593.5 470.0 M595.6 568.8 L616.9 521.0 L642.4 476.4 M637.1 616.6 L657.2 576.2 L680.6 527.4 L710.4 470.0 M697.6 659.1 L712.5 633.6 L733.7 593.2 L763.5 533.7 L789.0 491.2 M752.9 705.9 L772.0 674.0 L797.5 623.0 L816.6 595.4 L846.4 538.0 L867.6 499.7 L882.5 487.0 L902.0 482.7 M857.0 616.6 L886.7 555.0 L902.0 533.7 M489.4 474.2 L527.6 493.4 M485.1 484.9 L523.4 504.0 M480.9 491.2 L517.0 510.4 M477.7 509.3 L511.7 527.4 M523.4 478.5 L574.4 504.0 M568.0 523.1 L604.1 542.2 M605.2 497.6 L623.2 506.1 M595.6 515.7 L612.6 523.1 M631.7 501.9 L755.0 552.9 M706.1 480.6 L782.6 504.0 M702.9 487.0 L776.2 512.5 M699.7 493.4 L772.0 518.9 M696.6 501.9 L769.9 527.4 L793.2 538.0 M697.6 523.1 L755.0 550.7 M680.6 527.4 L750.7 555.0 M663.6 563.5 L735.9 593.2 M688.1 564.6 L733.7 585.8 M655.1 582.6 L725.2 612.4 M646.6 601.7 L712.5 633.6 M642.4 610.2 L678.5 627.2 M639.2 616.6 L659.4 628.3 M654.1 637.9 L697.6 659.1 M665.7 470.0 L789.0 491.2 M755.0 474.2 L854.9 521.0 M784.7 501.9 L846.4 533.7 M769.9 527.4 L829.4 567.7 M725.2 608.1 L778.4 633.6 M721.0 616.6 L780.5 650.6 M716.7 627.2 L778.4 661.2 M712.5 635.7 L774.1 667.6 M710.4 640.0 L772.0 676.1 M714.6 680.4 L755.0 701.6 M857.0 516.7 L899.5 540.1 M846.4 533.7 L884.6 555.0 M842.1 544.4 L880.4 563.5 M837.9 552.9 L876.1 572.0 M816.6 595.4 L857.0 616.6 M752.9 705.9 L750.7 710.1 L763.5 731.4 L772.0 746.2 L774.1 763.2 L778.4 778.1 M799.6 722.9 L846.4 708.0 L902.0 691.0 M846.4 708.0 L869.7 737.7 L902.0 771.7 M852.7 718.6 L818.7 750.5 M869.7 737.7 L842.1 765.4 M902.0 763.2 L876.1 786.6 M793.2 767.5 L763.5 796.0 M763.5 780.2 L780.5 796.0 M884.6 487.0 L902.0 518.9 M750.7 470.0 L793.2 478.5 M818.1 518.2 L987.4 760.2 M843.6 518.2 L1015.5 763.8 M869.9 519.3 L1018.0 731.0 M878.9 492.6 L1078.6 778.0 M920.4 503.4 L1086.9 741.3 M968.3 535.4 L1122.4 755.7 M982.6 528.5 L1141.8 756.0 M1024.3 542.5 L1159.8 736.2 M1049.8 542.5 L1215.9 779.9 M1075.3 542.5 L1236.0 772.2 M880.0 533.7 L907.6 510.4 L928.9 506.1 M916.1 557.1 L950.1 533.7 M941.6 618.7 L990.5 589.0 L1064.9 540.1 L1109.5 523.1 M954.4 640.0 L969.2 669.7 L880.0 699.5 M1037.2 676.1 L1111.6 623.0 L1145.6 608.1 M1056.4 705.9 L1135.0 659.1 M1075.5 735.6 L1105.2 720.7 M1092.5 686.7 L1115.9 669.7 M1124.4 593.2 L1164.7 567.7 M1109.5 567.7 L1149.9 542.2 M880.0 482.7 L907.6 480.6 L943.7 470.0 M886.4 487.0 L907.6 518.9 M880.0 559.2 L892.7 542.2 M1124.4 593.2 L1143.5 623.0 L1124.4 637.9 M1145.6 531.6 L1166.9 567.7 M1077.6 518.9 L1109.5 567.7 M950.1 714.4 L1011.7 742.0 L999.0 756.9 M880.0 744.1 L931.0 796.0 M950.1 714.4 L880.0 771.7 M979.9 742.0 L907.6 796.0 M1026.6 765.4 L1011.7 771.7 M1211.5 538.0 L1186.0 595.4 L1162.6 650.6 L1147.7 680.4 L1130.7 714.4 L1113.7 746.2 L1096.7 788.7 M1192.4 516.7 L1211.5 538.0 L1271.0 563.5 L1305.0 574.1 L1350.0 595.4 M1007.5 501.9 L1045.7 514.6 L1109.5 523.1 L1181.7 533.7 L1192.4 514.6 L1200.9 495.5 L1181.7 476.4 L1120.1 470.0 M1120.1 470.0 L1118.0 489.1 M1147.7 680.4 L1260.4 729.2 M1130.7 714.4 L1188.1 737.7 L1207.2 765.4 M1188.1 737.7 L1234.9 716.5 M1271.0 563.5 L1245.5 618.7 L1220.0 669.7 L1203.0 705.9 L1188.1 737.7 M1288.0 567.7 L1264.6 629.4 L1224.2 710.1 M1305.0 576.2 L1281.6 635.7 L1241.2 716.5 M1324.1 574.1 L1296.5 646.4 L1262.5 727.1 M1336.9 593.2 L1305.0 678.2 L1273.1 705.9 M1245.5 618.7 L1281.6 635.7 L1311.4 654.9 M1220.0 669.7 L1239.1 676.1 M1296.5 646.4 L1326.2 684.6 L1350.0 695.2 M1322.0 572.0 L1350.0 589.0 M1328.4 631.5 L1350.0 646.4 M1330.5 574.1 L1350.0 629.4 M1283.7 482.7 L1350.0 470.0 M1093.7 158.0 L1081.0 170.7 L1070.4 187.7 L1066.1 211.1 L1072.5 230.2 L1085.2 245.1 L1100.1 257.9 L1093.7 270.6 L1081.0 289.7 L1061.9 317.4 M1021.5 166.5 L1072.5 162.2 L1161.7 158.0 M1055.5 160.1 L1072.5 177.1 M1100.1 179.2 L1121.4 181.4 L1178.7 170.7 L1263.7 162.2 L1330.0 158.0 M1142.6 185.6 L1178.7 179.2 L1180.9 200.5 L1153.2 209.0 M1121.4 181.4 L1129.9 240.9 L1200.0 230.2 L1204.2 251.5 M1166.0 209.0 L1172.4 232.4 M1212.7 175.0 L1225.5 221.7 L1330.0 204.7 M1263.7 162.2 L1274.4 215.4 M1095.9 268.5 L1178.7 257.9 L1185.1 281.2 L1293.5 264.2 L1291.4 294.0 L1212.7 306.7 L1217.0 325.9 M1282.9 243.0 L1330.0 236.6 M1282.9 243.0 L1285.0 264.2 M1087.4 298.2 L1183.0 283.4 L1330.0 260.0 M1057.6 317.4 L1146.9 325.9 L1217.0 325.9 L1330.0 311.0 M1057.6 317.4 L1057.6 332.2 L1142.6 338.6 M1042.7 336.5 L1047.0 357.7 L1146.9 370.5 M1085.2 342.9 L1089.5 359.9 M1146.9 325.9 L1157.5 345.0 L1144.7 370.5 L1132.0 434.2 L1125.6 478.0 M1157.5 355.6 L1208.5 345.0 L1212.7 328.0 M1257.4 323.7 L1263.7 342.9 L1330.0 328.0 M1225.5 342.9 L1240.4 370.5 L1246.7 383.2 M1174.5 370.5 L1212.7 362.0 M991.7 289.7 L1044.9 291.9 M1006.6 289.7 L1008.7 315.2 M991.7 315.2 L1057.6 317.4 M996.0 357.7 L1142.6 368.4 M1008.7 398.1 L1136.2 413.0 M1008.7 419.4 L1132.0 432.1 M1013.0 440.6 L1129.9 455.5 M1051.2 464.0 L1127.7 472.5 M1212.7 410.9 L1330.0 379.0 M1302.0 389.6 L1312.6 404.5 L1221.2 427.9 M1229.7 430.0 L1330.0 408.7 M1248.9 447.0 L1325.4 434.2 M1208.5 453.4 L1319.0 470.4 M1319.0 455.5 L1321.1 470.4 M1129.9 461.9 L1134.1 472.5 L1221.2 476.7 M923.7 179.2 L979.0 175.0 M923.7 164.4 L923.7 192.0 L970.5 187.7 M946.1 158.0 L946.1 177.1 M877.0 179.2 L877.0 221.7 M905.7 206.9 L905.7 328.0 M896.1 321.6 L896.1 398.1 M860.0 321.6 L913.1 321.6 M860.0 349.2 L915.2 349.2 M860.0 374.7 L921.6 374.7 M860.0 398.1 L925.9 398.1 M989.6 247.2 L989.6 311.0 M1153.2 328.0 L1174.5 332.2 L1208.5 345.0 M1178.7 345.0 L1208.5 332.2 M1312.0 207.9 L1373.6 196.2 L1475.6 181.4 L1558.5 170.7 M1312.0 234.5 L1369.4 223.9 L1473.5 209.0 L1545.7 198.4 M1312.0 260.0 L1371.5 249.4 L1471.4 234.5 L1543.6 228.1 M1369.4 272.7 L1428.9 264.2 L1524.5 249.4 L1547.9 251.5 M1312.0 311.0 L1367.2 302.5 L1382.1 304.6 L1422.5 317.4 L1499.0 338.6 L1535.1 347.1 L1577.6 398.1 M1312.0 328.0 L1322.6 321.6 L1411.9 315.2 M1382.1 334.4 L1409.7 332.2 M1365.1 370.5 L1426.7 357.7 L1486.2 342.9 L1562.7 321.6 L1609.5 306.7 M1312.0 383.2 L1363.0 370.5 M1312.0 402.4 L1360.9 391.7 M1363.0 419.4 L1431.0 402.4 L1486.2 389.6 L1554.2 374.7 M1365.1 438.5 L1426.7 430.0 L1482.0 423.6 L1560.6 410.9 M1486.2 449.1 L1562.7 447.0 L1643.5 436.4 L1709.4 423.6 M1373.6 158.0 L1373.6 277.0 M1369.4 277.0 L1365.1 370.5 L1358.7 478.0 M1475.6 158.0 L1469.2 251.5 M1431.0 251.5 L1426.7 357.7 L1431.0 402.4 L1431.0 478.0 M1384.2 274.9 L1375.7 419.4 M1409.7 315.2 L1403.4 410.9 L1390.6 419.4 L1388.5 478.0 M1543.6 211.1 L1547.9 251.5 L1524.5 338.6 L1522.4 345.0 M1492.6 257.9 L1473.5 345.0 M1458.6 264.2 L1437.4 330.1 M1503.2 272.7 L1494.7 319.5 M1522.4 251.5 L1499.0 338.6 M1511.7 345.0 L1511.7 413.0 M1486.2 345.0 L1482.0 478.0 M1554.2 374.7 L1562.7 478.0 M1341.7 230.2 L1341.7 253.6 M1577.6 398.1 L1577.6 434.2 M1575.5 281.2 L1607.4 279.1 L1609.5 319.5 L1596.7 319.5 L1594.6 287.6 M1575.5 281.2 L1567.0 359.9 L1577.6 359.9 L1609.5 323.7 M1577.6 359.9 L1596.7 370.5 L1615.9 370.5 L1613.7 323.7 L1607.4 279.1 M1577.6 398.1 L1613.7 370.5 M1562.7 185.6 L1628.6 181.4 L1688.1 175.0 L1782.0 166.5 M1626.5 204.7 L1766.7 198.4 M1543.6 213.2 L1596.7 209.0 M1630.7 223.9 L1673.2 219.6 L1768.9 206.9 L1782.0 221.7 M1596.7 236.6 L1643.5 232.4 M1681.7 255.7 L1782.0 243.0 M1673.2 294.0 L1754.0 296.1 L1782.0 289.7 M1609.5 311.0 L1715.7 287.6 L1782.0 277.0 M1613.7 334.4 L1715.7 319.5 L1782.0 306.7 M1615.9 376.9 L1677.5 372.6 L1758.2 353.5 L1782.0 349.2 M1615.9 383.2 L1673.2 387.5 M1645.6 408.7 L1681.7 417.2 M1688.1 175.0 L1700.9 247.2 L1715.7 289.7 L1720.0 408.7 M1626.5 181.4 L1632.9 223.9 M1724.2 170.7 L1728.5 202.6 M1671.1 219.6 L1681.7 289.7 M1683.9 215.4 L1694.5 289.7 M1756.1 296.1 L1762.5 391.7 M1558.5 170.7 L1562.7 206.9 M1511.7 187.7 L1513.9 215.4 M1766.7 198.4 L1771.0 206.9 M1654.1 268.5 L1660.5 285.5 M1669.0 272.7 L1673.2 285.5 M1596.7 236.6 L1609.5 281.2 M1312.0 185.6 L1373.6 177.1 M1375.7 166.5 L1477.7 158.0 M1477.7 185.6 L1556.4 179.2 M1645.6 408.7 L1647.7 432.1 L1656.2 434.2 M1613.7 370.5 L1615.9 383.2 M1354.5 470.0 L1356.6 523.1 L1354.5 563.5 L1375.7 661.2 M1356.6 523.1 L1424.6 518.9 L1524.5 508.2 L1660.5 497.6 L1662.6 470.0 M1484.1 470.0 L1484.1 478.5 L1662.6 476.4 M1522.4 478.5 L1522.4 507.2 M1539.4 478.5 L1539.4 506.1 M1560.6 478.5 L1560.6 505.1 M1454.4 646.4 L1516.0 646.4 L1509.6 671.9 L1494.7 735.6 L1479.9 796.0 M1369.4 616.6 L1445.9 601.7 L1454.4 646.4 M1369.4 616.6 L1375.7 661.2 M1388.5 614.5 L1394.9 652.7 M1407.6 611.3 L1414.0 650.6 M1426.7 606.0 L1435.2 648.5 M1312.0 476.4 L1354.5 470.0 M1696.6 720.7 L1700.9 661.2 L1711.5 610.2 M1673.2 646.4 L1700.9 640.0 M1671.1 652.7 L1686.0 674.0 M1649.9 606.0 L1664.7 623.0 M1894.3 234.7 L1892.3 303.0 L1889.1 365.2 L1887.1 477.9 M1770.0 269.9 L1794.9 263.7 L1894.3 236.7 L1913.0 228.5 M1913.0 228.5 L1925.4 213.9 L1906.8 191.2 L1948.2 158.0 M1933.7 220.2 L1975.1 195.3 M1977.2 158.0 L1975.1 195.3 L1968.9 243.0 L1964.8 267.8 L1931.6 290.6 L1892.3 311.3 M2016.6 158.0 L2012.4 205.7 L2004.1 269.9 L1987.6 274.0 L1915.0 323.8 L1892.3 340.3 M1977.2 164.2 L2014.5 168.4 M1968.9 243.0 L2006.2 247.1 M2012.4 205.7 L2029.0 207.7 L2029.0 226.4 L2074.6 220.2 L2101.5 220.2 L2182.3 158.0 M2029.0 207.7 L2072.5 193.2 L2120.2 166.3 L2132.6 158.0 M2068.4 158.0 L2074.6 193.2 L2076.7 282.3 L2072.5 311.3 L2060.1 344.5 L2037.3 363.1 L2029.0 385.9 L2022.8 441.9 L2018.7 477.9 M2076.7 236.7 L2097.4 226.4 M2080.8 189.1 L2099.5 220.2 M2022.8 261.6 L2068.4 245.0 M2051.8 251.2 L2049.7 261.6 M2026.9 274.0 L2060.1 261.6 M1892.3 361.1 L1977.2 311.3 L2016.6 307.2 L2070.5 282.3 M1892.3 381.8 L1942.0 354.9 L2014.5 311.3 M2016.6 309.3 L2014.5 344.5 L2008.3 396.3 L1997.9 477.9 M2037.3 301.0 L2045.6 323.8 L2056.0 342.4 M1937.8 356.9 L1942.0 365.2 L1935.8 417.0 L1931.6 477.9 M1977.2 356.9 L1975.1 373.5 L1971.0 427.4 L1964.8 477.9 M1977.2 352.8 L2012.4 348.6 M1975.1 373.5 L2010.4 371.4 M1892.3 400.4 L1935.8 396.3 L1973.1 394.2 L2008.3 388.0 M1892.3 423.2 L1935.8 419.1 L2006.2 408.7 M1892.3 464.7 L1931.6 460.5 L1964.8 456.4 L2020.7 448.1 M1892.3 475.0 L1962.7 470.9 M1770.0 286.5 L1794.9 282.3 L1830.1 274.0 L1861.2 265.7 L1892.3 257.5 M1770.0 307.2 L1796.9 301.0 L1828.0 294.8 L1894.3 274.0 M1770.0 321.7 L1811.4 319.6 L1815.6 309.3 L1832.2 307.2 M1770.0 334.1 L1799.0 325.8 M1794.9 263.7 L1796.9 301.0 L1799.0 344.5 L1805.2 375.6 L1819.7 388.0 M1830.1 253.3 L1830.1 332.1 M1861.2 245.0 L1863.2 286.5 M1855.0 290.6 L1859.1 303.0 M1770.0 369.4 L1823.9 340.3 L1894.3 286.5 L1913.0 274.0 M1823.9 340.3 L1842.5 365.2 M1770.0 398.4 L1805.2 375.6 M1776.2 402.5 L1825.9 383.9 L1838.4 398.4 L1815.6 417.0 M1770.0 427.4 L1792.8 410.8 L1894.3 330.0 M1770.0 164.2 L1794.9 166.3 L1799.0 224.3 L1803.2 257.5 M1799.0 187.0 L1832.2 182.9 L1838.4 213.9 L1871.5 207.7 L1894.3 234.7 M1809.4 189.1 L1817.7 220.2 M1799.0 224.3 L1838.4 213.9 M1770.0 209.8 L1780.4 263.7 M2072.5 311.3 L2091.2 321.7 L2109.8 323.8 L2132.6 294.8 M2091.2 321.7 L2087.0 394.2 L2078.7 398.4 M2047.7 359.0 L2087.0 338.3 M2037.3 363.1 L2080.8 396.3 L2022.8 441.9 M2087.0 361.1 L2109.8 365.2 L2111.9 385.9 L2103.6 429.4 M2116.0 356.9 L2111.9 375.6 M2041.4 431.5 L2068.4 452.2 L2082.9 458.5 M2167.8 419.1 L2176.1 477.1 M2211.4 383.9 L2182.3 400.4 L2184.4 417.0 M2161.6 456.4 L2176.1 477.9 M2211.4 425.3 L2205.1 437.7 M2033.2 195.3 L2072.5 184.9 M2045.6 172.5 L2068.4 166.3 M2035.2 164.2 L2045.6 158.0 M2151.3 172.5 L2159.6 180.8 L2182.3 162.1 M2140.9 158.0 L2151.3 172.5 M1770.0 448.1 L1782.4 435.7 L1805.2 456.4 L1840.5 446.0 M1782.4 435.7 L1770.0 425.3 M1922.1 510.1 L1926.3 668.5 L1936.8 664.3 M1919.9 510.1 L1951.6 503.8 L1955.9 510.1 L1981.2 493.2 L2008.6 486.9 L2023.4 482.7 L2019.2 470.0 M1943.2 514.4 L1945.3 554.5 M1943.2 514.4 L1964.3 508.0 L1968.5 552.4 M1981.2 493.2 L1991.8 543.9 M2008.6 486.9 L2019.2 533.4 M2023.4 482.7 L2044.6 535.5 M1934.7 556.6 L1939.0 664.3 L1945.3 744.6 L1930.5 757.2 L1930.5 796.1 M1958.0 558.7 L1981.2 605.2 L1989.6 639.0 L1991.8 681.2 L1987.5 702.3 L2002.3 723.4 L2019.2 755.1 L2023.4 796.1 M1949.5 607.3 L1964.3 651.6 L1970.6 729.8 L1991.8 796.1 M1936.8 664.3 L1989.6 639.0 L2017.1 619.9 L2027.7 630.5 L2044.6 626.3 L2050.9 615.7 M1981.2 605.2 L2002.3 590.4 M1993.9 571.4 L2017.1 619.9 M2019.2 556.6 L2053.0 615.7 L2107.9 679.1 L2105.8 702.3 L2118.5 765.7 L2120.6 796.1 M2031.9 550.3 L2114.2 668.5 M1991.8 681.2 L2050.9 641.1 L2065.7 636.8 M1987.5 702.3 L2086.8 660.1 M1945.3 744.6 L1993.9 715.0 L2105.8 679.1 M2006.5 727.7 L2082.6 696.0 L2099.5 765.7 L2105.8 796.1 M2017.1 748.8 L2095.2 725.5 M2036.1 734.0 L2046.7 759.3 L2116.4 742.4 M2046.7 759.3 L2046.7 796.1 M2065.7 769.9 L2116.4 753.0 M2065.7 769.9 L2063.6 796.1 M2114.2 668.5 L2133.3 681.2 L2131.1 702.3 M2133.3 689.6 L2152.3 704.4 M2095.2 645.3 L2105.8 634.7 L2116.4 647.4 M2099.5 628.4 L2105.8 634.7 M2099.5 575.6 L2135.4 556.6 M2044.6 535.5 L2069.9 556.6 L2139.6 609.4 L2212.0 677.0 M2076.2 554.5 L2190.3 630.5 L2212.0 660.1 M2190.3 556.6 L2164.9 584.0 L2148.0 617.8 L2143.8 639.0 M2139.6 668.5 L2156.5 639.0 L2190.3 630.5 M2164.9 584.0 L2192.4 579.8 M2169.2 607.3 L2181.8 622.1 L2171.3 630.5 M2175.5 598.8 L2200.8 622.1 M2148.0 651.6 L2139.6 668.5 M2179.7 715.0 L2212.0 702.3 M2148.0 725.5 L2156.5 765.7 M2169.2 755.1 L2179.7 769.9 M2065.7 503.8 L2095.2 497.5 L2099.5 510.1 L2055.1 518.6 L2044.6 535.5 M2095.2 497.5 L2107.9 489.0 L2129.0 474.2 M2099.5 510.1 L2110.0 541.8 M2099.5 497.5 L2114.2 510.1 M2190.3 470.0 L2196.6 512.2 L2212.0 522.8 M2129.0 470.0 L2150.1 482.7 L2171.3 497.5 L2194.5 501.7 M1886.2 470.0 L1888.3 491.1 M1770.0 520.7 L1786.9 524.9 L1810.1 512.2 M1873.5 539.7 L1884.0 516.5 L1900.9 510.1" stroke="#dad9d7" stroke-width="4.600"/><path d="M432.0 338.3 L458.9 286.5 L488.0 238.8 L535.6 162.1 M442.4 456.5 L508.7 342.5 L531.5 301.0 L552.2 265.8 L570.9 234.7 L597.8 187.0 L614.4 160.1 M548.1 448.2 L581.3 392.2 L606.1 394.3 L626.9 404.7 L639.3 373.6 M612.3 365.3 L637.2 299.0 L658.0 234.7 L676.6 182.9 L683.9 160.1 M656.9 375.7 L676.6 315.5 L691.1 280.3 L693.2 251.3 M432.0 229.5 L488.0 239.9 L514.9 257.5 L552.2 265.8 L676.6 315.5 L699.4 323.8 M610.3 164.2 L740.9 207.8 M583.3 178.7 L597.8 180.8 L738.8 226.4 M595.8 208.8 L730.5 257.5 M568.8 236.8 L722.2 290.7 M548.1 278.2 L699.4 336.3 M539.8 290.7 L691.1 348.7 M531.5 303.1 L618.6 336.3 L680.8 361.2 M458.9 310.4 L504.6 321.8 L529.4 301.0 M432.0 342.5 L496.3 360.1 M508.7 342.5 L556.4 376.7 L575.0 337.3 L589.5 341.5 M432.0 269.9 L444.4 271.0 L471.4 261.6 M465.2 286.5 L529.4 301.0 M485.9 290.7 L514.9 257.5 M436.1 195.3 L488.0 201.5 M436.1 195.3 L458.9 158.0 M432.0 373.6 L450.7 375.7 M432.0 415.0 L463.1 417.1 M440.3 442.0 L454.8 419.2 M660.0 294.8 L668.3 269.9 M705.6 255.4 L691.1 280.3 M581.3 392.2 L566.7 419.2 M606.1 394.3 L680.8 431.6 L697.3 427.5 L726.4 452.4 L763.7 478.1 M637.2 388.1 L676.6 404.7 L666.2 429.6 M653.8 386.0 L672.5 396.4 M566.7 423.3 L639.3 460.7 M483.8 442.0 L539.8 468.9 M471.4 446.1 L527.4 473.1 M463.1 454.4 L514.9 478.1 M498.3 454.4 L488.0 478.1 M626.9 404.7 L610.3 433.7 M722.2 452.4 L709.8 478.1 M655.9 444.1 L682.8 460.7 M755.0 160.0 L756.8 270.0 L755.0 380.0 M786.5 160.0 L787.1 264.0 L786.5 368.0 M815.5 160.0 L816.8 251.5 L815.5 343.0 M844.5 160.0 L844.0 251.5 L844.5 343.0 M873.0 160.0 L874.6 251.5 L873.0 343.0 M902.0 160.0 L900.1 264.0 L902.0 368.0 M935.6 160.0 L935.3 264.0 L935.6 368.0 M969.0 160.0 L967.4 230.0 L969.0 300.0 M725.0 167.5 L857.5 165.7 L990.0 167.5 M725.0 190.5 L862.5 189.0 L1000.0 190.5 M725.0 213.5 L847.0 214.0 L969.0 213.5 M725.0 238.6 L862.5 240.4 L1000.0 238.6 M725.0 263.7 L862.5 264.0 L1000.0 263.7 M725.0 293.0 L847.0 294.9 L969.0 293.0 M725.0 318.0 L802.5 318.2 L880.0 318.0 M700.0 343.0 L790.0 342.2 L880.0 343.0 M700.0 368.0 L790.0 368.2 L880.0 368.0 M845.0 343.0 L845.0 400.0 L935.0 412.0 L935.0 368.0 M700.0 380.0 L820.0 385.0 L820.0 400.0 L900.0 405.0 M480.9 491.2 L493.6 470.0 M505.3 546.5 L521.2 510.4 L542.5 470.0 M556.3 545.4 L568.0 523.1 L593.5 470.0 M595.6 568.8 L616.9 521.0 L642.4 476.4 M637.1 616.6 L657.2 576.2 L680.6 527.4 L710.4 470.0 M697.6 659.1 L712.5 633.6 L733.7 593.2 L763.5 533.7 L789.0 491.2 M752.9 705.9 L772.0 674.0 L797.5 623.0 L816.6 595.4 L846.4 538.0 L867.6 499.7 L882.5 487.0 L902.0 482.7 M857.0 616.6 L886.7 555.0 L902.0 533.7 M489.4 474.2 L527.6 493.4 M485.1 484.9 L523.4 504.0 M480.9 491.2 L517.0 510.4 M477.7 509.3 L511.7 527.4 M523.4 478.5 L574.4 504.0 M568.0 523.1 L604.1 542.2 M605.2 497.6 L623.2 506.1 M595.6 515.7 L612.6 523.1 M631.7 501.9 L755.0 552.9 M706.1 480.6 L782.6 504.0 M702.9 487.0 L776.2 512.5 M699.7 493.4 L772.0 518.9 M696.6 501.9 L769.9 527.4 L793.2 538.0 M697.6 523.1 L755.0 550.7 M680.6 527.4 L750.7 555.0 M663.6 563.5 L735.9 593.2 M688.1 564.6 L733.7 585.8 M655.1 582.6 L725.2 612.4 M646.6 601.7 L712.5 633.6 M642.4 610.2 L678.5 627.2 M639.2 616.6 L659.4 628.3 M654.1 637.9 L697.6 659.1 M665.7 470.0 L789.0 491.2 M755.0 474.2 L854.9 521.0 M784.7 501.9 L846.4 533.7 M769.9 527.4 L829.4 567.7 M725.2 608.1 L778.4 633.6 M721.0 616.6 L780.5 650.6 M716.7 627.2 L778.4 661.2 M712.5 635.7 L774.1 667.6 M710.4 640.0 L772.0 676.1 M714.6 680.4 L755.0 701.6 M857.0 516.7 L899.5 540.1 M846.4 533.7 L884.6 555.0 M842.1 544.4 L880.4 563.5 M837.9 552.9 L876.1 572.0 M816.6 595.4 L857.0 616.6 M752.9 705.9 L750.7 710.1 L763.5 731.4 L772.0 746.2 L774.1 763.2 L778.4 778.1 M799.6 722.9 L846.4 708.0 L902.0 691.0 M846.4 708.0 L869.7 737.7 L902.0 771.7 M852.7 718.6 L818.7 750.5 M869.7 737.7 L842.1 765.4 M902.0 763.2 L876.1 786.6 M793.2 767.5 L763.5 796.0 M763.5 780.2 L780.5 796.0 M884.6 487.0 L902.0 518.9 M750.7 470.0 L793.2 478.5 M818.1 518.2 L987.4 760.2 M843.6 518.2 L1015.5 763.8 M869.9 519.3 L1018.0 731.0 M878.9 492.6 L1078.6 778.0 M920.4 503.4 L1086.9 741.3 M968.3 535.4 L1122.4 755.7 M982.6 528.5 L1141.8 756.0 M1024.3 542.5 L1159.8 736.2 M1049.8 542.5 L1215.9 779.9 M1075.3 542.5 L1236.0 772.2 M880.0 533.7 L907.6 510.4 L928.9 506.1 M916.1 557.1 L950.1 533.7 M941.6 618.7 L990.5 589.0 L1064.9 540.1 L1109.5 523.1 M954.4 640.0 L969.2 669.7 L880.0 699.5 M1037.2 676.1 L1111.6 623.0 L1145.6 608.1 M1056.4 705.9 L1135.0 659.1 M1075.5 735.6 L1105.2 720.7 M1092.5 686.7 L1115.9 669.7 M1124.4 593.2 L1164.7 567.7 M1109.5 567.7 L1149.9 542.2 M880.0 482.7 L907.6 480.6 L943.7 470.0 M886.4 487.0 L907.6 518.9 M880.0 559.2 L892.7 542.2 M1124.4 593.2 L1143.5 623.0 L1124.4 637.9 M1145.6 531.6 L1166.9 567.7 M1077.6 518.9 L1109.5 567.7 M950.1 714.4 L1011.7 742.0 L999.0 756.9 M880.0 744.1 L931.0 796.0 M950.1 714.4 L880.0 771.7 M979.9 742.0 L907.6 796.0 M1026.6 765.4 L1011.7 771.7 M1211.5 538.0 L1186.0 595.4 L1162.6 650.6 L1147.7 680.4 L1130.7 714.4 L1113.7 746.2 L1096.7 788.7 M1192.4 516.7 L1211.5 538.0 L1271.0 563.5 L1305.0 574.1 L1350.0 595.4 M1007.5 501.9 L1045.7 514.6 L1109.5 523.1 L1181.7 533.7 L1192.4 514.6 L1200.9 495.5 L1181.7 476.4 L1120.1 470.0 M1120.1 470.0 L1118.0 489.1 M1147.7 680.4 L1260.4 729.2 M1130.7 714.4 L1188.1 737.7 L1207.2 765.4 M1188.1 737.7 L1234.9 716.5 M1271.0 563.5 L1245.5 618.7 L1220.0 669.7 L1203.0 705.9 L1188.1 737.7 M1288.0 567.7 L1264.6 629.4 L1224.2 710.1 M1305.0 576.2 L1281.6 635.7 L1241.2 716.5 M1324.1 574.1 L1296.5 646.4 L1262.5 727.1 M1336.9 593.2 L1305.0 678.2 L1273.1 705.9 M1245.5 618.7 L1281.6 635.7 L1311.4 654.9 M1220.0 669.7 L1239.1 676.1 M1296.5 646.4 L1326.2 684.6 L1350.0 695.2 M1322.0 572.0 L1350.0 589.0 M1328.4 631.5 L1350.0 646.4 M1330.5 574.1 L1350.0 629.4 M1283.7 482.7 L1350.0 470.0 M1093.7 158.0 L1081.0 170.7 L1070.4 187.7 L1066.1 211.1 L1072.5 230.2 L1085.2 245.1 L1100.1 257.9 L1093.7 270.6 L1081.0 289.7 L1061.9 317.4 M1021.5 166.5 L1072.5 162.2 L1161.7 158.0 M1055.5 160.1 L1072.5 177.1 M1100.1 179.2 L1121.4 181.4 L1178.7 170.7 L1263.7 162.2 L1330.0 158.0 M1142.6 185.6 L1178.7 179.2 L1180.9 200.5 L1153.2 209.0 M1121.4 181.4 L1129.9 240.9 L1200.0 230.2 L1204.2 251.5 M1166.0 209.0 L1172.4 232.4 M1212.7 175.0 L1225.5 221.7 L1330.0 204.7 M1263.7 162.2 L1274.4 215.4 M1095.9 268.5 L1178.7 257.9 L1185.1 281.2 L1293.5 264.2 L1291.4 294.0 L1212.7 306.7 L1217.0 325.9 M1282.9 243.0 L1330.0 236.6 M1282.9 243.0 L1285.0 264.2 M1087.4 298.2 L1183.0 283.4 L1330.0 260.0 M1057.6 317.4 L1146.9 325.9 L1217.0 325.9 L1330.0 311.0 M1057.6 317.4 L1057.6 332.2 L1142.6 338.6 M1042.7 336.5 L1047.0 357.7 L1146.9 370.5 M1085.2 342.9 L1089.5 359.9 M1146.9 325.9 L1157.5 345.0 L1144.7 370.5 L1132.0 434.2 L1125.6 478.0 M1157.5 355.6 L1208.5 345.0 L1212.7 328.0 M1257.4 323.7 L1263.7 342.9 L1330.0 328.0 M1225.5 342.9 L1240.4 370.5 L1246.7 383.2 M1174.5 370.5 L1212.7 362.0 M991.7 289.7 L1044.9 291.9 M1006.6 289.7 L1008.7 315.2 M991.7 315.2 L1057.6 317.4 M996.0 357.7 L1142.6 368.4 M1008.7 398.1 L1136.2 413.0 M1008.7 419.4 L1132.0 432.1 M1013.0 440.6 L1129.9 455.5 M1051.2 464.0 L1127.7 472.5 M1212.7 410.9 L1330.0 379.0 M1302.0 389.6 L1312.6 404.5 L1221.2 427.9 M1229.7 430.0 L1330.0 408.7 M1248.9 447.0 L1325.4 434.2 M1208.5 453.4 L1319.0 470.4 M1319.0 455.5 L1321.1 470.4 M1129.9 461.9 L1134.1 472.5 L1221.2 476.7 M923.7 179.2 L979.0 175.0 M923.7 164.4 L923.7 192.0 L970.5 187.7 M946.1 158.0 L946.1 177.1 M877.0 179.2 L877.0 221.7 M905.7 206.9 L905.7 328.0 M896.1 321.6 L896.1 398.1 M860.0 321.6 L913.1 321.6 M860.0 349.2 L915.2 349.2 M860.0 374.7 L921.6 374.7 M860.0 398.1 L925.9 398.1 M989.6 247.2 L989.6 311.0 M1153.2 328.0 L1174.5 332.2 L1208.5 345.0 M1178.7 345.0 L1208.5 332.2 M1312.0 207.9 L1373.6 196.2 L1475.6 181.4 L1558.5 170.7 M1312.0 234.5 L1369.4 223.9 L1473.5 209.0 L1545.7 198.4 M1312.0 260.0 L1371.5 249.4 L1471.4 234.5 L1543.6 228.1 M1369.4 272.7 L1428.9 264.2 L1524.5 249.4 L1547.9 251.5 M1312.0 311.0 L1367.2 302.5 L1382.1 304.6 L1422.5 317.4 L1499.0 338.6 L1535.1 347.1 L1577.6 398.1 M1312.0 328.0 L1322.6 321.6 L1411.9 315.2 M1382.1 334.4 L1409.7 332.2 M1365.1 370.5 L1426.7 357.7 L1486.2 342.9 L1562.7 321.6 L1609.5 306.7 M1312.0 383.2 L1363.0 370.5 M1312.0 402.4 L1360.9 391.7 M1363.0 419.4 L1431.0 402.4 L1486.2 389.6 L1554.2 374.7 M1365.1 438.5 L1426.7 430.0 L1482.0 423.6 L1560.6 410.9 M1486.2 449.1 L1562.7 447.0 L1643.5 436.4 L1709.4 423.6 M1373.6 158.0 L1373.6 277.0 M1369.4 277.0 L1365.1 370.5 L1358.7 478.0 M1475.6 158.0 L1469.2 251.5 M1431.0 251.5 L1426.7 357.7 L1431.0 402.4 L1431.0 478.0 M1384.2 274.9 L1375.7 419.4 M1409.7 315.2 L1403.4 410.9 L1390.6 419.4 L1388.5 478.0 M1543.6 211.1 L1547.9 251.5 L1524.5 338.6 L1522.4 345.0 M1492.6 257.9 L1473.5 345.0 M1458.6 264.2 L1437.4 330.1 M1503.2 272.7 L1494.7 319.5 M1522.4 251.5 L1499.0 338.6 M1511.7 345.0 L1511.7 413.0 M1486.2 345.0 L1482.0 478.0 M1554.2 374.7 L1562.7 478.0 M1341.7 230.2 L1341.7 253.6 M1577.6 398.1 L1577.6 434.2 M1575.5 281.2 L1607.4 279.1 L1609.5 319.5 L1596.7 319.5 L1594.6 287.6 M1575.5 281.2 L1567.0 359.9 L1577.6 359.9 L1609.5 323.7 M1577.6 359.9 L1596.7 370.5 L1615.9 370.5 L1613.7 323.7 L1607.4 279.1 M1577.6 398.1 L1613.7 370.5 M1562.7 185.6 L1628.6 181.4 L1688.1 175.0 L1782.0 166.5 M1626.5 204.7 L1766.7 198.4 M1543.6 213.2 L1596.7 209.0 M1630.7 223.9 L1673.2 219.6 L1768.9 206.9 L1782.0 221.7 M1596.7 236.6 L1643.5 232.4 M1681.7 255.7 L1782.0 243.0 M1673.2 294.0 L1754.0 296.1 L1782.0 289.7 M1609.5 311.0 L1715.7 287.6 L1782.0 277.0 M1613.7 334.4 L1715.7 319.5 L1782.0 306.7 M1615.9 376.9 L1677.5 372.6 L1758.2 353.5 L1782.0 349.2 M1615.9 383.2 L1673.2 387.5 M1645.6 408.7 L1681.7 417.2 M1688.1 175.0 L1700.9 247.2 L1715.7 289.7 L1720.0 408.7 M1626.5 181.4 L1632.9 223.9 M1724.2 170.7 L1728.5 202.6 M1671.1 219.6 L1681.7 289.7 M1683.9 215.4 L1694.5 289.7 M1756.1 296.1 L1762.5 391.7 M1558.5 170.7 L1562.7 206.9 M1511.7 187.7 L1513.9 215.4 M1766.7 198.4 L1771.0 206.9 M1654.1 268.5 L1660.5 285.5 M1669.0 272.7 L1673.2 285.5 M1596.7 236.6 L1609.5 281.2 M1312.0 185.6 L1373.6 177.1 M1375.7 166.5 L1477.7 158.0 M1477.7 185.6 L1556.4 179.2 M1645.6 408.7 L1647.7 432.1 L1656.2 434.2 M1613.7 370.5 L1615.9 383.2 M1354.5 470.0 L1356.6 523.1 L1354.5 563.5 L1375.7 661.2 M1356.6 523.1 L1424.6 518.9 L1524.5 508.2 L1660.5 497.6 L1662.6 470.0 M1484.1 470.0 L1484.1 478.5 L1662.6 476.4 M1522.4 478.5 L1522.4 507.2 M1539.4 478.5 L1539.4 506.1 M1560.6 478.5 L1560.6 505.1 M1454.4 646.4 L1516.0 646.4 L1509.6 671.9 L1494.7 735.6 L1479.9 796.0 M1369.4 616.6 L1445.9 601.7 L1454.4 646.4 M1369.4 616.6 L1375.7 661.2 M1388.5 614.5 L1394.9 652.7 M1407.6 611.3 L1414.0 650.6 M1426.7 606.0 L1435.2 648.5 M1312.0 476.4 L1354.5 470.0 M1696.6 720.7 L1700.9 661.2 L1711.5 610.2 M1673.2 646.4 L1700.9 640.0 M1671.1 652.7 L1686.0 674.0 M1649.9 606.0 L1664.7 623.0 M1894.3 234.7 L1892.3 303.0 L1889.1 365.2 L1887.1 477.9 M1770.0 269.9 L1794.9 263.7 L1894.3 236.7 L1913.0 228.5 M1913.0 228.5 L1925.4 213.9 L1906.8 191.2 L1948.2 158.0 M1933.7 220.2 L1975.1 195.3 M1977.2 158.0 L1975.1 195.3 L1968.9 243.0 L1964.8 267.8 L1931.6 290.6 L1892.3 311.3 M2016.6 158.0 L2012.4 205.7 L2004.1 269.9 L1987.6 274.0 L1915.0 323.8 L1892.3 340.3 M1977.2 164.2 L2014.5 168.4 M1968.9 243.0 L2006.2 247.1 M2012.4 205.7 L2029.0 207.7 L2029.0 226.4 L2074.6 220.2 L2101.5 220.2 L2182.3 158.0 M2029.0 207.7 L2072.5 193.2 L2120.2 166.3 L2132.6 158.0 M2068.4 158.0 L2074.6 193.2 L2076.7 282.3 L2072.5 311.3 L2060.1 344.5 L2037.3 363.1 L2029.0 385.9 L2022.8 441.9 L2018.7 477.9 M2076.7 236.7 L2097.4 226.4 M2080.8 189.1 L2099.5 220.2 M2022.8 261.6 L2068.4 245.0 M2051.8 251.2 L2049.7 261.6 M2026.9 274.0 L2060.1 261.6 M1892.3 361.1 L1977.2 311.3 L2016.6 307.2 L2070.5 282.3 M1892.3 381.8 L1942.0 354.9 L2014.5 311.3 M2016.6 309.3 L2014.5 344.5 L2008.3 396.3 L1997.9 477.9 M2037.3 301.0 L2045.6 323.8 L2056.0 342.4 M1937.8 356.9 L1942.0 365.2 L1935.8 417.0 L1931.6 477.9 M1977.2 356.9 L1975.1 373.5 L1971.0 427.4 L1964.8 477.9 M1977.2 352.8 L2012.4 348.6 M1975.1 373.5 L2010.4 371.4 M1892.3 400.4 L1935.8 396.3 L1973.1 394.2 L2008.3 388.0 M1892.3 423.2 L1935.8 419.1 L2006.2 408.7 M1892.3 464.7 L1931.6 460.5 L1964.8 456.4 L2020.7 448.1 M1892.3 475.0 L1962.7 470.9 M1770.0 286.5 L1794.9 282.3 L1830.1 274.0 L1861.2 265.7 L1892.3 257.5 M1770.0 307.2 L1796.9 301.0 L1828.0 294.8 L1894.3 274.0 M1770.0 321.7 L1811.4 319.6 L1815.6 309.3 L1832.2 307.2 M1770.0 334.1 L1799.0 325.8 M1794.9 263.7 L1796.9 301.0 L1799.0 344.5 L1805.2 375.6 L1819.7 388.0 M1830.1 253.3 L1830.1 332.1 M1861.2 245.0 L1863.2 286.5 M1855.0 290.6 L1859.1 303.0 M1770.0 369.4 L1823.9 340.3 L1894.3 286.5 L1913.0 274.0 M1823.9 340.3 L1842.5 365.2 M1770.0 398.4 L1805.2 375.6 M1776.2 402.5 L1825.9 383.9 L1838.4 398.4 L1815.6 417.0 M1770.0 427.4 L1792.8 410.8 L1894.3 330.0 M1770.0 164.2 L1794.9 166.3 L1799.0 224.3 L1803.2 257.5 M1799.0 187.0 L1832.2 182.9 L1838.4 213.9 L1871.5 207.7 L1894.3 234.7 M1809.4 189.1 L1817.7 220.2 M1799.0 224.3 L1838.4 213.9 M1770.0 209.8 L1780.4 263.7 M2072.5 311.3 L2091.2 321.7 L2109.8 323.8 L2132.6 294.8 M2091.2 321.7 L2087.0 394.2 L2078.7 398.4 M2047.7 359.0 L2087.0 338.3 M2037.3 363.1 L2080.8 396.3 L2022.8 441.9 M2087.0 361.1 L2109.8 365.2 L2111.9 385.9 L2103.6 429.4 M2116.0 356.9 L2111.9 375.6 M2041.4 431.5 L2068.4 452.2 L2082.9 458.5 M2167.8 419.1 L2176.1 477.1 M2211.4 383.9 L2182.3 400.4 L2184.4 417.0 M2161.6 456.4 L2176.1 477.9 M2211.4 425.3 L2205.1 437.7 M2033.2 195.3 L2072.5 184.9 M2045.6 172.5 L2068.4 166.3 M2035.2 164.2 L2045.6 158.0 M2151.3 172.5 L2159.6 180.8 L2182.3 162.1 M2140.9 158.0 L2151.3 172.5 M1770.0 448.1 L1782.4 435.7 L1805.2 456.4 L1840.5 446.0 M1782.4 435.7 L1770.0 425.3 M1922.1 510.1 L1926.3 668.5 L1936.8 664.3 M1919.9 510.1 L1951.6 503.8 L1955.9 510.1 L1981.2 493.2 L2008.6 486.9 L2023.4 482.7 L2019.2 470.0 M1943.2 514.4 L1945.3 554.5 M1943.2 514.4 L1964.3 508.0 L1968.5 552.4 M1981.2 493.2 L1991.8 543.9 M2008.6 486.9 L2019.2 533.4 M2023.4 482.7 L2044.6 535.5 M1934.7 556.6 L1939.0 664.3 L1945.3 744.6 L1930.5 757.2 L1930.5 796.1 M1958.0 558.7 L1981.2 605.2 L1989.6 639.0 L1991.8 681.2 L1987.5 702.3 L2002.3 723.4 L2019.2 755.1 L2023.4 796.1 M1949.5 607.3 L1964.3 651.6 L1970.6 729.8 L1991.8 796.1 M1936.8 664.3 L1989.6 639.0 L2017.1 619.9 L2027.7 630.5 L2044.6 626.3 L2050.9 615.7 M1981.2 605.2 L2002.3 590.4 M1993.9 571.4 L2017.1 619.9 M2019.2 556.6 L2053.0 615.7 L2107.9 679.1 L2105.8 702.3 L2118.5 765.7 L2120.6 796.1 M2031.9 550.3 L2114.2 668.5 M1991.8 681.2 L2050.9 641.1 L2065.7 636.8 M1987.5 702.3 L2086.8 660.1 M1945.3 744.6 L1993.9 715.0 L2105.8 679.1 M2006.5 727.7 L2082.6 696.0 L2099.5 765.7 L2105.8 796.1 M2017.1 748.8 L2095.2 725.5 M2036.1 734.0 L2046.7 759.3 L2116.4 742.4 M2046.7 759.3 L2046.7 796.1 M2065.7 769.9 L2116.4 753.0 M2065.7 769.9 L2063.6 796.1 M2114.2 668.5 L2133.3 681.2 L2131.1 702.3 M2133.3 689.6 L2152.3 704.4 M2095.2 645.3 L2105.8 634.7 L2116.4 647.4 M2099.5 628.4 L2105.8 634.7 M2099.5 575.6 L2135.4 556.6 M2044.6 535.5 L2069.9 556.6 L2139.6 609.4 L2212.0 677.0 M2076.2 554.5 L2190.3 630.5 L2212.0 660.1 M2190.3 556.6 L2164.9 584.0 L2148.0 617.8 L2143.8 639.0 M2139.6 668.5 L2156.5 639.0 L2190.3 630.5 M2164.9 584.0 L2192.4 579.8 M2169.2 607.3 L2181.8 622.1 L2171.3 630.5 M2175.5 598.8 L2200.8 622.1 M2148.0 651.6 L2139.6 668.5 M2179.7 715.0 L2212.0 702.3 M2148.0 725.5 L2156.5 765.7 M2169.2 755.1 L2179.7 769.9 M2065.7 503.8 L2095.2 497.5 L2099.5 510.1 L2055.1 518.6 L2044.6 535.5 M2095.2 497.5 L2107.9 489.0 L2129.0 474.2 M2099.5 510.1 L2110.0 541.8 M2099.5 497.5 L2114.2 510.1 M2190.3 470.0 L2196.6 512.2 L2212.0 522.8 M2129.0 470.0 L2150.1 482.7 L2171.3 497.5 L2194.5 501.7 M1886.2 470.0 L1888.3 491.1 M1770.0 520.7 L1786.9 524.9 L1810.1 512.2 M1873.5 539.7 L1884.0 516.5 L1900.9 510.1" stroke="#f7f7f6" stroke-width="1.900"/></g>
<g fill="none" stroke-linejoin="round" stroke-linecap="round"><path d="M670.4 396.4 L691.1 340.4 L709.8 286.5 L722.2 261.6 L738.8 209.8 L742.9 189.1 L751.2 164.2 L784.4 162.1 M722.2 262.7 L813.4 266.8 M815.5 158.0 L817.6 220.2 L814.5 266.8" stroke="#dad9d7" stroke-width="5"/><path d="M670.4 396.4 L691.1 340.4 L709.8 286.5 L722.2 261.6 L738.8 209.8 L742.9 189.1 L751.2 164.2 L784.4 162.1 M722.2 262.7 L813.4 266.8 M815.5 158.0 L817.6 220.2 L814.5 266.8" stroke="#fdfdfd" stroke-width="2.6"/></g>
<g fill="none" stroke-linejoin="round" stroke-linecap="round"><path d="M1628.6 631.5 L1683.9 626.2 L1711.5 610.2 L1728.5 595.4 L1758.2 580.5 L1782.0 569.9 M1778.4 573.5 L1812.2 569.3 L1839.7 552.4 L1871.4 543.9 L1917.8 546.0 L1939.0 556.6 L1981.2 552.4 L2034.0 539.7 L2044.6 535.5 L2076.2 554.5 L2129.0 539.7 L2200.8 518.6 L2212.0 520.7" stroke="#cdccc9" stroke-width="5.6"/><path d="M1628.6 631.5 L1683.9 626.2 L1711.5 610.2 L1728.5 595.4 L1758.2 580.5 L1782.0 569.9 M1778.4 573.5 L1812.2 569.3 L1839.7 552.4 L1871.4 543.9 L1917.8 546.0 L1939.0 556.6 L1981.2 552.4 L2034.0 539.7 L2044.6 535.5 L2076.2 554.5 L2129.0 539.7 L2200.8 518.6 L2212.0 520.7" stroke="#ffffff" stroke-width="3.2"/></g>
<g fill="none" stroke-linejoin="round" stroke-linecap="round"><path d="M1686.0 559.2 L1734.9 589.0 M1690.2 550.7 L1694.5 569.9 L1728.5 584.7 M1703.0 555.0 L1705.1 601.7 M1715.7 563.5 L1713.6 606.0 M1726.4 569.9 L1722.1 597.5 M1694.5 584.7 L1737.0 576.2 M1690.2 597.5 L1728.5 589.0 M1683.9 608.1 L1715.7 601.7 M1679.6 589.0 L1686.0 618.7 M1649.9 561.4 L1652.0 580.5 L1673.2 589.0 M1664.7 589.0 L1690.2 597.5 M1671.1 652.7 L1700.9 640.0 L1705.1 618.7 M1698.7 606.0 L1696.6 682.5 M1705.1 601.7 L1700.9 661.2 M1677.5 540.1 L1673.2 561.4 M1737.0 470.0 L1749.7 493.4 L1743.4 518.9 M1726.4 531.6 L1782.0 516.7 M1739.1 540.1 L1758.2 533.7" stroke="#e1e0dd" stroke-width="3.400"/><path d="M1686.0 559.2 L1734.9 589.0 M1690.2 550.7 L1694.5 569.9 L1728.5 584.7 M1703.0 555.0 L1705.1 601.7 M1715.7 563.5 L1713.6 606.0 M1726.4 569.9 L1722.1 597.5 M1694.5 584.7 L1737.0 576.2 M1690.2 597.5 L1728.5 589.0 M1683.9 608.1 L1715.7 601.7 M1679.6 589.0 L1686.0 618.7 M1649.9 561.4 L1652.0 580.5 L1673.2 589.0 M1664.7 589.0 L1690.2 597.5 M1671.1 652.7 L1700.9 640.0 L1705.1 618.7 M1698.7 606.0 L1696.6 682.5 M1705.1 601.7 L1700.9 661.2 M1677.5 540.1 L1673.2 561.4 M1737.0 470.0 L1749.7 493.4 L1743.4 518.9 M1726.4 531.6 L1782.0 516.7 M1739.1 540.1 L1758.2 533.7" stroke="#fbfbfa" stroke-width="1.500"/></g>
<g stroke="#e9e8e5" stroke-width="2" fill="none"><path d="M1745 430l30 -22M1750 440l30 -22M1756 450l30 -22M1750 418l22 34M1762 410l22 34M1740 452l26 -19M1768 403l18 28"/></g>
<g fill="#aad3df"><path d="M1093 240 q3 -9 14 -7 q10 1 10 9 q-1 7 -12 8 q-12 1 -12 -10z"/><path d="M1256 228 l8 1 l4 10 l-6 7 l-9 1 l-2 -9z"/><path d="M1735 521L1760.500 495.500L1763.500 502L1741 529.500Z"/><circle cx="1621" cy="401" r="3.5"/><path d="M1778 663 l9 -2 l3 5 l-8 4z"/></g>
<g fill="#fdfbc4"><path d="M1767 196l9 -3l2 8l-8 3z"/><path d="M2126 170l10 -6l6 6l-9 7z"/><path d="M2084.500 482.500L2097.500 480.500L2099.500 493L2087 495.500Z"/><path d="M1748 598l10-4l4 8l-10 4z"/></g>
<path d="M430.0 455.9 L446.7 466.3 L451.1 470.0 L461.7 478.5 L470.2 482.7 L474.5 491.2 L471.3 497.6 L473.4 506.1 L468.1 514.6 L469.2 523.1 L476.6 531.6 L485.1 540.1 L491.5 548.6 L502.1 552.9 L512.7 557.1 L517.0 563.5 L527.6 563.5 L542.5 564.6 L551.0 576.2 L559.5 581.6 L576.5 589.0 L589.2 595.4 L595.6 601.7 L608.4 608.1 L619.0 612.4 L623.2 618.7 L627.5 617.7 L627.5 627.2 L623.2 637.9 L625.4 648.5 L631.7 657.0 L644.5 663.4 L655.1 669.7 L661.5 668.7 L667.9 676.1 L676.4 681.4 L687.0 685.7 L697.6 692.1 L708.2 694.2 L716.7 689.9 L725.2 695.2 L729.5 701.6 L735.9 704.8 L740.1 714.4 L742.2 721.8 L735.9 725.0 L738.0 732.4" fill="none" stroke="#9fd6c4" stroke-width="6" stroke-linejoin="round" opacity=".8"/><path d="M430.0 455.9 L446.7 466.3 L451.1 470.0 L461.7 478.5 L470.2 482.7 L474.5 491.2 L471.3 497.6 L473.4 506.1 L468.1 514.6 L469.2 523.1 L476.6 531.6 L485.1 540.1 L491.5 548.6 L502.1 552.9 L512.7 557.1 L517.0 563.5 L527.6 563.5 L542.5 564.6 L551.0 576.2 L559.5 581.6 L576.5 589.0 L589.2 595.4 L595.6 601.7 L608.4 608.1 L619.0 612.4 L623.2 618.7 L627.5 617.7 L627.5 627.2 L623.2 637.9 L625.4 648.5 L631.7 657.0 L644.5 663.4 L655.1 669.7 L661.5 668.7 L667.9 676.1 L676.4 681.4 L687.0 685.7 L697.6 692.1 L708.2 694.2 L716.7 689.9 L725.2 695.2 L729.5 701.6 L735.9 704.8 L740.1 714.4 L742.2 721.8 L735.9 725.0 L738.0 732.4" fill="none" stroke="#62b59a" stroke-width="2.8" stroke-linejoin="round"/>
<path d="M738.0 732.4 L742.2 737.7 L735.9 746.2 L740.1 754.7 L748.6 761.1 L750.7 769.6 L757.1 776.0 L758.2 782.4 L750.7 788.7 L749.7 797.2" fill="none" stroke="#aad3df" stroke-width="3.5" stroke-linejoin="round"/>
<path d="M1312.0 519.9 L1337.5 544.4 L1360.9 561.4 L1407.6 567.7 L1439.5 574.1 L1488.4 576.2 L1509.6 567.7 L1545.7 557.1 L1567.0 548.6 L1581.9 543.3 L1594.6 546.5 L1609.5 559.2 L1630.7 576.2 L1652.0 580.5 L1694.5 584.7 L1726.4 597.5 L1747.6 614.5 L1760.4 631.5 L1782.0 642.1 L1814.7 683.5 L1825.2 700.3 L1841.9 729.5 L1862.8 771.3 L1875.3 798.5" fill="none" stroke="#cdaacd" stroke-width="4.400" stroke-linejoin="round" opacity=".85"/><path d="M1312.0 519.9 L1337.5 544.4 L1360.9 561.4 L1407.6 567.7 L1439.5 574.1 L1488.4 576.2 L1509.6 567.7 L1545.7 557.1 L1567.0 548.6 L1581.9 543.3 L1594.6 546.5 L1609.5 559.2 L1630.7 576.2 L1652.0 580.5 L1694.5 584.7 L1726.4 597.5 L1747.6 614.5 L1760.4 631.5 L1782.0 642.1 L1814.7 683.5 L1825.2 700.3 L1841.9 729.5 L1862.8 771.3 L1875.3 798.5" fill="none" stroke="#a884ac" stroke-width="1" stroke-dasharray="6 3 1.500 3" stroke-linejoin="round" opacity=".8"/>
<path d="M1013.0 159.2 L990.0 180.1 L982.4 201.0 L987.9 217.7 L1004.6 232.3 L1023.4 249.0 L1048.5 269.9 L1081.9 297.1 L1119.5 326.3 L1161.3 363.9 L1203.1 401.6 L1244.9 447.5 L1286.7 493.5 L1312.0 516.7 L1333.2 538.0 L1354.5 559.2 L1365.1 572.0 L1382.1 575.2 L1407.6 574.1 L1431.0 575.2 L1460.7 580.5 L1482.0 584.7 L1499.0 578.4 L1516.0 565.6 L1535.1 557.1 L1552.1 558.2 L1567.0 555.0 L1579.7 542.2 L1588.2 538.0 L1596.7 540.1 L1603.1 550.7 L1605.2 561.4 L1618.0 572.0 L1635.0 580.5 L1662.6 580.5 L1686.0 582.6 L1711.5 589.0 L1730.6 597.5 L1747.6 610.2 L1764.6 623.0 L1782.0 631.5 L1813.5 656.5 L1830.2 685.7 L1846.9 715.0 L1867.8 756.8 L1884.5 796.5" fill="none" stroke="#686868" stroke-width="3.600" stroke-linejoin="round"/><path d="M1013.0 159.2 L990.0 180.1 L982.4 201.0 L987.9 217.7 L1004.6 232.3 L1023.4 249.0 L1048.5 269.9 L1081.9 297.1 L1119.5 326.3 L1161.3 363.9 L1203.1 401.6 L1244.9 447.5 L1286.7 493.5 L1312.0 516.7 L1333.2 538.0 L1354.5 559.2 L1365.1 572.0 L1382.1 575.2 L1407.6 574.1 L1431.0 575.2 L1460.7 580.5 L1482.0 584.7 L1499.0 578.4 L1516.0 565.6 L1535.1 557.1 L1552.1 558.2 L1567.0 555.0 L1579.7 542.2 L1588.2 538.0 L1596.7 540.1 L1603.1 550.7 L1605.2 561.4 L1618.0 572.0 L1635.0 580.5 L1662.6 580.5 L1686.0 582.6 L1711.5 589.0 L1730.6 597.5 L1747.6 610.2 L1764.6 623.0 L1782.0 631.5 L1813.5 656.5 L1830.2 685.7 L1846.9 715.0 L1867.8 756.8 L1884.5 796.5" fill="none" stroke="#c9c9c9" stroke-width="2.400" stroke-dasharray="6.500 8.500" stroke-linejoin="round"/>
<path d="M1014.7 157.5 L991.7 178.4 L984.1 199.3 L989.6 216.0 L1006.3 230.6 L1025.1 247.3 L1050.2 268.2 L1083.6 295.4 L1121.2 324.6 L1163.0 362.2 L1204.8 399.9 L1246.6 445.8 L1288.4 491.8 L1313.4 516.9" fill="none" stroke="#b088b6" stroke-width="2.300" stroke-linejoin="round" opacity=".9"/>
<path d="M1552.3 157.1 L1579.4 188.4 L1612.9 226.0 L1638.0 259.5 L1658.8 292.9 L1679.7 334.7 L1696.5 380.7 L1713.2 414.1 L1725.7 443.3 L1734.1 472.6 L1729.9 501.8 L1719.4 531.1 L1721.5 547.8 L1734.1 556.2 L1759.1 558.3 L1771.7 566.6 L1784.2 585.4 L1796.7 606.3 L1809.3 631.4 L1821.8 660.6 L1838.5 694.1 L1855.3 727.5 L1872.0 760.9 L1890.8 796.5" fill="none" stroke="#dc8a72" stroke-width="8.5" stroke-linejoin="round"/><path d="M1552.3 157.1 L1579.4 188.4 L1612.9 226.0 L1638.0 259.5 L1658.8 292.9 L1679.7 334.7 L1696.5 380.7 L1713.2 414.1 L1725.7 443.3 L1734.1 472.6 L1729.9 501.8 L1719.4 531.1 L1721.5 547.8 L1734.1 556.2 L1759.1 558.3 L1771.7 566.6 L1784.2 585.4 L1796.7 606.3 L1809.3 631.4 L1821.8 660.6 L1838.5 694.1 L1855.3 727.5 L1872.0 760.9 L1890.8 796.5" fill="none" stroke="#f8ab95" stroke-width="6" stroke-linejoin="round"/>
<g font-size="13" fill="#a97fb3" font-style="italic" stroke="#f2efe9" stroke-width="2.5" paint-order="stroke" text-anchor="middle"><text transform="translate(1006,252) rotate(48)">Laikipia East</text><text transform="translate(1530,585) rotate(-11)">Laikipia East</text><text transform="translate(1640,599) rotate(12)">Laikipia</text></g>
<g font-size="18" fill="#333" stroke="#fff" stroke-width="3" paint-order="stroke" text-anchor="middle"><text transform="translate(1774,606) rotate(-38)">Naro Moru</text></g>
<g font-size="10.5" fill="#4a3030" text-anchor="middle"><text transform="translate(1667,337) rotate(73)">Nyeri-Nanyuki Road</text><text transform="translate(1813,642) rotate(66)">Nyeri-Nanyuki Road</text><text transform="translate(1886,790) rotate(64)">Road</text></g>
<g transform="translate(1716,431) rotate(-38)"><rect x="-15" y="-10" width="30" height="20" rx="3" fill="#f7cfc4" stroke="#c98a78" stroke-width="1.2"/><text y="5" font-size="13" text-anchor="middle" fill="#5a2a20">A2</text></g>
<g transform="translate(2006,551) rotate(-32)"><rect x="-23" y="-11" width="46" height="22" rx="3" fill="#f3f3f3" stroke="#bdbdbd" stroke-width="1.2"/><text y="5" font-size="14" text-anchor="middle" fill="#555">D448</text></g>
<text transform="translate(1674,799) rotate(-79)" font-size="12.5" fill="#4d9a4d" stroke="#f2efe9" stroke-width="2" paint-order="stroke">onservancy</text>
<path d="M913.5 323L984.500 310.500L1042 612.600L971 625z" fill="#7d7d7d" fill-opacity=".38" stroke="#fff" stroke-opacity=".75" stroke-width="2"/>
<path d="M949.400 320L1006.700 619" stroke="#7c7c7c" stroke-width="8.5" stroke-opacity=".85"/>
<circle cx="959.9" cy="332.6" r="6.7" fill="#160b39" stroke="#1c1c2a" stroke-width="0.9"/><circle cx="959.9" cy="338.9" r="6.7" fill="#420a68" stroke="#1c1c2a" stroke-width="0.9"/><circle cx="952.4" cy="346.0" r="6.7" fill="#d8456c" stroke="#1c1c2a" stroke-width="0.9"/><circle cx="958.6" cy="345.1" r="6.7" fill="#e8605d" stroke="#1c1c2a" stroke-width="0.9"/><circle cx="960.7" cy="355.6" r="6.7" fill="#420a68" stroke="#1c1c2a" stroke-width="0.9"/><circle cx="957.4" cy="366.0" r="6.7" fill="#420a68" stroke="#1c1c2a" stroke-width="0.9"/><circle cx="951.1" cy="373.1" r="6.7" fill="#420a68" stroke="#1c1c2a" stroke-width="0.9"/><circle cx="952.4" cy="380.7" r="6.7" fill="#420a68" stroke="#1c1c2a" stroke-width="0.9"/><circle cx="976.6" cy="382.7" r="6.7" fill="#420a68" stroke="#1c1c2a" stroke-width="0.9"/><circle cx="979.5" cy="387.8" r="6.7" fill="#420a68" stroke="#1c1c2a" stroke-width="0.9"/><circle cx="985.8" cy="404.9" r="6.7" fill="#420a68" stroke="#1c1c2a" stroke-width="0.9"/><circle cx="985.8" cy="410.7" r="6.7" fill="#420a68" stroke="#1c1c2a" stroke-width="0.9"/><circle cx="985.8" cy="419.1" r="6.7" fill="#420a68" stroke="#1c1c2a" stroke-width="0.9"/><circle cx="983.7" cy="428.7" r="6.7" fill="#420a68" stroke="#1c1c2a" stroke-width="0.9"/><circle cx="987.9" cy="434.1" r="6.7" fill="#160b39" stroke="#1c1c2a" stroke-width="0.9"/><circle cx="994.1" cy="441.3" r="6.7" fill="#160b39" stroke="#1c1c2a" stroke-width="0.9"/><circle cx="994.1" cy="452.5" r="6.7" fill="#420a68" stroke="#1c1c2a" stroke-width="0.9"/><circle cx="1004.6" cy="455.9" r="6.7" fill="#160b39" stroke="#1c1c2a" stroke-width="0.9"/><circle cx="1010.0" cy="466.3" r="6.7" fill="#e8605d" stroke="#1c1c2a" stroke-width="0.9"/><circle cx="1010.0" cy="484.3" r="6.7" fill="#420a68" stroke="#1c1c2a" stroke-width="0.9"/><circle cx="1004.6" cy="489.3" r="6.7" fill="#420a68" stroke="#1c1c2a" stroke-width="0.9"/><circle cx="1000.4" cy="494.3" r="6.7" fill="#420a68" stroke="#1c1c2a" stroke-width="0.9"/><circle cx="1000.4" cy="501.8" r="6.7" fill="#420a68" stroke="#1c1c2a" stroke-width="0.9"/><circle cx="999.6" cy="508.1" r="6.7" fill="#e8605d" stroke="#1c1c2a" stroke-width="0.9"/><circle cx="992.1" cy="516.5" r="6.7" fill="#160b39" stroke="#1c1c2a" stroke-width="0.9"/><circle cx="990.0" cy="526.1" r="6.7" fill="#420a68" stroke="#1c1c2a" stroke-width="0.9"/><circle cx="998.3" cy="535.3" r="6.7" fill="#420a68" stroke="#1c1c2a" stroke-width="0.9"/><circle cx="1000.4" cy="538.6" r="6.7" fill="#420a68" stroke="#1c1c2a" stroke-width="0.9"/><circle cx="1003.8" cy="547.8" r="6.7" fill="#160b39" stroke="#1c1c2a" stroke-width="0.9"/><circle cx="1004.6" cy="554.1" r="6.7" fill="#160b39" stroke="#1c1c2a" stroke-width="0.9"/><circle cx="1006.7" cy="560.3" r="6.7" fill="#160b39" stroke="#1c1c2a" stroke-width="0.9"/><circle cx="1007.9" cy="579.2" r="6.7" fill="#040308" stroke="#1c1c2a" stroke-width="0.9"/><circle cx="1007.9" cy="570.8" r="6.7" fill="#932667" stroke="#1c1c2a" stroke-width="0.9"/><circle cx="1002.5" cy="597.1" r="6.7" fill="#040308" stroke="#1c1c2a" stroke-width="0.9"/><circle cx="1008.8" cy="604.2" r="6.7" fill="#160b39" stroke="#1c1c2a" stroke-width="0.9"/><circle cx="1019.2" cy="605.1" r="6.7" fill="#160b39" stroke="#1c1c2a" stroke-width="0.9"/><circle cx="1030.9" cy="605.1" r="6.7" fill="#160b39" stroke="#1c1c2a" stroke-width="0.9"/><circle cx="1019.2" cy="617.6" r="6.7" fill="#160b39" stroke="#1c1c2a" stroke-width="0.9"/>
<path d="M949.400 320L1006.700 619" stroke="#fff" stroke-width="5" stroke-dasharray="18 9.600"/>
<path d="M975 447L961.500 481L994.500 475z" fill="#7b7b7b" stroke="#fff" stroke-width="2.6" stroke-linejoin="round"/>
<rect x="1000.5" y="613.5" width="11" height="11" fill="#000"/><path d="M1003.500 602.500L1006.400 617.500" stroke="#fff" stroke-width="5"/>
<circle cx="552.4" cy="429.1" r="6.7" fill="#d8456c" stroke="#1c1c2a" stroke-width="0.9"/><circle cx="567.9" cy="441.3" r="6.7" fill="#160b39" stroke="#1c1c2a" stroke-width="0.9"/><circle cx="571.6" cy="443.2" r="6.7" fill="#160b39" stroke="#1c1c2a" stroke-width="0.9"/><circle cx="575.2" cy="445.1" r="6.7" fill="#160b39" stroke="#1c1c2a" stroke-width="0.9"/><circle cx="578.9" cy="447.0" r="6.7" fill="#160b39" stroke="#1c1c2a" stroke-width="0.9"/><circle cx="582.5" cy="449.0" r="6.7" fill="#160b39" stroke="#1c1c2a" stroke-width="0.9"/><circle cx="586.2" cy="450.9" r="6.7" fill="#160b39" stroke="#1c1c2a" stroke-width="0.9"/><circle cx="589.8" cy="452.8" r="6.7" fill="#160b39" stroke="#1c1c2a" stroke-width="0.9"/><circle cx="593.5" cy="454.8" r="6.7" fill="#160b39" stroke="#1c1c2a" stroke-width="0.9"/><circle cx="597.2" cy="456.7" r="6.7" fill="#160b39" stroke="#1c1c2a" stroke-width="0.9"/><circle cx="592.1" cy="454.2" r="6.7" fill="#420a68" stroke="#1c1c2a" stroke-width="0.9"/><circle cx="597.2" cy="456.7" r="6.7" fill="#160b39" stroke="#1c1c2a" stroke-width="0.9"/><circle cx="604.7" cy="442.5" r="6.7" fill="#160b39" stroke="#1c1c2a" stroke-width="0.9"/><circle cx="616.0" cy="449.6" r="6.7" fill="#160b39" stroke="#1c1c2a" stroke-width="0.9"/><circle cx="616.8" cy="455.9" r="6.7" fill="#160b39" stroke="#1c1c2a" stroke-width="0.9"/><circle cx="622.2" cy="459.2" r="6.7" fill="#160b39" stroke="#1c1c2a" stroke-width="0.9"/><circle cx="625.0" cy="460.4" r="6.7" fill="#160b39" stroke="#1c1c2a" stroke-width="0.9"/><circle cx="627.8" cy="461.6" r="6.7" fill="#160b39" stroke="#1c1c2a" stroke-width="0.9"/><circle cx="630.6" cy="462.8" r="6.7" fill="#160b39" stroke="#1c1c2a" stroke-width="0.9"/><circle cx="633.4" cy="464.0" r="6.7" fill="#160b39" stroke="#1c1c2a" stroke-width="0.9"/><circle cx="636.2" cy="465.1" r="6.7" fill="#160b39" stroke="#1c1c2a" stroke-width="0.9"/><circle cx="638.9" cy="466.3" r="6.7" fill="#160b39" stroke="#1c1c2a" stroke-width="0.9"/><circle cx="638.1" cy="465.9" r="6.7" fill="#420a68" stroke="#1c1c2a" stroke-width="0.9"/><circle cx="643.1" cy="467.6" r="6.7" fill="#420a68" stroke="#1c1c2a" stroke-width="0.9"/><circle cx="649.8" cy="448.8" r="6.7" fill="#420a68" stroke="#1c1c2a" stroke-width="0.9"/><circle cx="658.6" cy="437.9" r="6.7" fill="#160b39" stroke="#1c1c2a" stroke-width="0.9"/><circle cx="846.6" cy="443.8" r="6.7" fill="#d8456c" stroke="#1c1c2a" stroke-width="0.9"/><circle cx="1077.7" cy="671.5" r="6.7" fill="#040308" stroke="#1c1c2a" stroke-width="0.9"/><circle cx="1076.9" cy="669.8" r="6.7" fill="#160b39" stroke="#1c1c2a" stroke-width="0.9"/><circle cx="1252.4" cy="475.9" r="6.7" fill="#160b39" stroke="#1c1c2a" stroke-width="0.9"/><circle cx="1251.6" cy="488.5" r="6.7" fill="#160b39" stroke="#1c1c2a" stroke-width="0.9"/><circle cx="1249.1" cy="503.9" r="6.7" fill="#420a68" stroke="#1c1c2a" stroke-width="0.9"/><circle cx="1247.0" cy="510.2" r="6.7" fill="#420a68" stroke="#1c1c2a" stroke-width="0.9"/><circle cx="1245.7" cy="516.5" r="6.7" fill="#420a68" stroke="#1c1c2a" stroke-width="0.9"/><circle cx="1244.0" cy="522.7" r="6.7" fill="#420a68" stroke="#1c1c2a" stroke-width="0.9"/><circle cx="1242.8" cy="529.0" r="6.7" fill="#420a68" stroke="#1c1c2a" stroke-width="0.9"/><circle cx="1242.0" cy="532.4" r="6.7" fill="#420a68" stroke="#1c1c2a" stroke-width="0.9"/><circle cx="1438.2" cy="337.6" r="6.7" fill="#160b39" stroke="#1c1c2a" stroke-width="0.9"/><circle cx="1429.8" cy="348.1" r="6.7" fill="#160b39" stroke="#1c1c2a" stroke-width="0.9"/><circle cx="1434.4" cy="358.9" r="6.7" fill="#040308" stroke="#1c1c2a" stroke-width="0.9"/><circle cx="1436.1" cy="381.5" r="6.7" fill="#040308" stroke="#1c1c2a" stroke-width="0.9"/><circle cx="1433.2" cy="386.1" r="6.7" fill="#040308" stroke="#1c1c2a" stroke-width="0.9"/><circle cx="1434.4" cy="394.0" r="6.7" fill="#040308" stroke="#1c1c2a" stroke-width="0.9"/><circle cx="1398.5" cy="437.1" r="6.7" fill="#160b39" stroke="#1c1c2a" stroke-width="0.9"/><circle cx="1397.7" cy="443.3" r="6.7" fill="#160b39" stroke="#1c1c2a" stroke-width="0.9"/><circle cx="1396.8" cy="449.6" r="6.7" fill="#160b39" stroke="#1c1c2a" stroke-width="0.9"/><circle cx="1419.4" cy="462.1" r="6.7" fill="#040308" stroke="#1c1c2a" stroke-width="0.9"/><circle cx="1419.4" cy="468.4" r="6.7" fill="#040308" stroke="#1c1c2a" stroke-width="0.9"/><circle cx="1404.8" cy="509.4" r="6.7" fill="#420a68" stroke="#1c1c2a" stroke-width="0.9"/><circle cx="1403.1" cy="513.5" r="6.7" fill="#420a68" stroke="#1c1c2a" stroke-width="0.9"/><circle cx="1415.6" cy="475.9" r="6.7" fill="#160b39" stroke="#1c1c2a" stroke-width="0.9"/><circle cx="1420.7" cy="485.1" r="6.7" fill="#160b39" stroke="#1c1c2a" stroke-width="0.9"/><circle cx="1421.5" cy="493.5" r="6.7" fill="#160b39" stroke="#1c1c2a" stroke-width="0.9"/><circle cx="1420.7" cy="501.8" r="6.7" fill="#160b39" stroke="#1c1c2a" stroke-width="0.9"/><circle cx="1419.8" cy="510.2" r="6.7" fill="#160b39" stroke="#1c1c2a" stroke-width="0.9"/><circle cx="1419.8" cy="518.6" r="6.7" fill="#160b39" stroke="#1c1c2a" stroke-width="0.9"/><circle cx="1421.5" cy="547.8" r="6.7" fill="#420a68" stroke="#1c1c2a" stroke-width="0.9"/><circle cx="1424.0" cy="535.3" r="6.7" fill="#160b39" stroke="#1c1c2a" stroke-width="0.9"/><circle cx="1424.8" cy="542.8" r="6.7" fill="#160b39" stroke="#1c1c2a" stroke-width="0.9"/><circle cx="1414.4" cy="559.5" r="6.7" fill="#160b39" stroke="#1c1c2a" stroke-width="0.9"/><circle cx="1424.8" cy="560.3" r="6.7" fill="#160b39" stroke="#1c1c2a" stroke-width="0.9"/><circle cx="1425.7" cy="568.7" r="6.7" fill="#160b39" stroke="#1c1c2a" stroke-width="0.9"/><circle cx="1412.3" cy="572.0" r="6.7" fill="#160b39" stroke="#1c1c2a" stroke-width="0.9"/><circle cx="1397.7" cy="580.4" r="6.7" fill="#160b39" stroke="#1c1c2a" stroke-width="0.9"/><circle cx="1426.9" cy="585.4" r="6.7" fill="#160b39" stroke="#1c1c2a" stroke-width="0.9"/><circle cx="1422.7" cy="591.7" r="6.7" fill="#160b39" stroke="#1c1c2a" stroke-width="0.9"/><circle cx="1416.5" cy="595.9" r="6.7" fill="#160b39" stroke="#1c1c2a" stroke-width="0.9"/><circle cx="1401.8" cy="602.1" r="6.7" fill="#160b39" stroke="#1c1c2a" stroke-width="0.9"/><circle cx="1416.5" cy="605.5" r="6.7" fill="#160b39" stroke="#1c1c2a" stroke-width="0.9"/><circle cx="1422.7" cy="526.9" r="6.7" fill="#d8456c" stroke="#1c1c2a" stroke-width="0.9"/><circle cx="1411.0" cy="603.0" r="6.7" fill="#d8456c" stroke="#1c1c2a" stroke-width="0.9"/><circle cx="1533.5" cy="458.0" r="6.7" fill="#160b39" stroke="#1c1c2a" stroke-width="0.9"/><circle cx="1533.5" cy="464.2" r="6.7" fill="#160b39" stroke="#1c1c2a" stroke-width="0.9"/><circle cx="1533.5" cy="469.2" r="6.7" fill="#160b39" stroke="#1c1c2a" stroke-width="0.9"/><circle cx="1620.4" cy="474.7" r="6.7" fill="#160b39" stroke="#1c1c2a" stroke-width="0.9"/><circle cx="1620.4" cy="481.0" r="6.7" fill="#160b39" stroke="#1c1c2a" stroke-width="0.9"/><circle cx="1783.0" cy="551.2" r="6.7" fill="#160b39" stroke="#1c1c2a" stroke-width="0.9"/><circle cx="1782.1" cy="559.5" r="6.7" fill="#160b39" stroke="#1c1c2a" stroke-width="0.9"/><circle cx="1869.9" cy="562.4" r="6.7" fill="#160b39" stroke="#1c1c2a" stroke-width="0.9"/><circle cx="1880.3" cy="558.3" r="6.7" fill="#160b39" stroke="#1c1c2a" stroke-width="0.9"/><circle cx="1890.8" cy="561.2" r="6.7" fill="#160b39" stroke="#1c1c2a" stroke-width="0.9"/><circle cx="1901.2" cy="562.4" r="6.7" fill="#160b39" stroke="#1c1c2a" stroke-width="0.9"/><circle cx="1872.0" cy="572.9" r="6.7" fill="#160b39" stroke="#1c1c2a" stroke-width="0.9"/><circle cx="1880.3" cy="575.0" r="6.7" fill="#160b39" stroke="#1c1c2a" stroke-width="0.9"/><circle cx="1888.7" cy="577.1" r="6.7" fill="#420a68" stroke="#1c1c2a" stroke-width="0.9"/><circle cx="1895.0" cy="579.2" r="6.7" fill="#420a68" stroke="#1c1c2a" stroke-width="0.9"/><circle cx="1900.4" cy="580.4" r="6.7" fill="#420a68" stroke="#1c1c2a" stroke-width="0.9"/><circle cx="1901.2" cy="572.0" r="6.7" fill="#420a68" stroke="#1c1c2a" stroke-width="0.9"/><circle cx="2059.2" cy="587.5" r="6.7" fill="#420a68" stroke="#1c1c2a" stroke-width="0.9"/><circle cx="2055.8" cy="593.8" r="6.7" fill="#420a68" stroke="#1c1c2a" stroke-width="0.9"/><circle cx="1903.7" cy="300.8" r="6.7" fill="#d8456c" stroke="#1c1c2a" stroke-width="0.9"/><circle cx="1906.7" cy="331.3" r="6.7" fill="#160b39" stroke="#1c1c2a" stroke-width="0.9"/><circle cx="1910.4" cy="337.6" r="6.7" fill="#160b39" stroke="#1c1c2a" stroke-width="0.9"/><circle cx="1945.9" cy="329.7" r="6.7" fill="#160b39" stroke="#1c1c2a" stroke-width="0.9"/><circle cx="1938.8" cy="338.9" r="6.7" fill="#160b39" stroke="#1c1c2a" stroke-width="0.9"/><circle cx="1952.2" cy="337.6" r="6.7" fill="#160b39" stroke="#1c1c2a" stroke-width="0.9"/><circle cx="1954.7" cy="356.8" r="6.7" fill="#160b39" stroke="#1c1c2a" stroke-width="0.9"/><circle cx="1959.7" cy="367.3" r="6.7" fill="#160b39" stroke="#1c1c2a" stroke-width="0.9"/><circle cx="1945.9" cy="379.8" r="6.7" fill="#160b39" stroke="#1c1c2a" stroke-width="0.9"/><circle cx="1943.0" cy="403.6" r="6.7" fill="#160b39" stroke="#1c1c2a" stroke-width="0.9"/><circle cx="1947.2" cy="410.7" r="6.7" fill="#160b39" stroke="#1c1c2a" stroke-width="0.9"/><circle cx="1953.5" cy="416.2" r="6.7" fill="#160b39" stroke="#1c1c2a" stroke-width="0.9"/><circle cx="1957.6" cy="421.6" r="6.7" fill="#160b39" stroke="#1c1c2a" stroke-width="0.9"/><circle cx="1968.1" cy="428.7" r="6.7" fill="#160b39" stroke="#1c1c2a" stroke-width="0.9"/><circle cx="1972.3" cy="432.9" r="6.7" fill="#160b39" stroke="#1c1c2a" stroke-width="0.9"/><circle cx="1989.0" cy="438.3" r="6.7" fill="#160b39" stroke="#1c1c2a" stroke-width="0.9"/><circle cx="1986.9" cy="453.0" r="6.7" fill="#160b39" stroke="#1c1c2a" stroke-width="0.9"/><circle cx="1986.0" cy="450.4" r="6.7" fill="#d8456c" stroke="#1c1c2a" stroke-width="0.9"/><circle cx="1961.0" cy="483.0" r="6.7" fill="#160b39" stroke="#1c1c2a" stroke-width="0.9"/><circle cx="1962.6" cy="488.9" r="6.7" fill="#e8605d" stroke="#1c1c2a" stroke-width="0.9"/><circle cx="2056.7" cy="465.1" r="6.7" fill="#420a68" stroke="#1c1c2a" stroke-width="0.9"/><circle cx="2055.0" cy="471.3" r="6.7" fill="#420a68" stroke="#1c1c2a" stroke-width="0.9"/><circle cx="2053.7" cy="476.8" r="6.7" fill="#420a68" stroke="#1c1c2a" stroke-width="0.9"/><circle cx="2052.5" cy="481.0" r="6.7" fill="#420a68" stroke="#1c1c2a" stroke-width="0.9"/>
</svg>
<div class="abs" style="left:431px;top:794.8px;width:1781px;height:1px;background:#b2b2b2"></div>
<div class="abs" style="left:431px;top:157.5px;width:1781px;height:1.3px;background:#efefef"></div>
<div class="abs" style="left:425.5px;top:815.5px;width:3px;height:27px;background-image:radial-gradient(circle,#b0b0b0 0.85px,transparent 1.25px);background-size:4.5px 4.5px"></div>
<div class="abs" style="left:1311px;top:800px;width:24px;height:3px;background-image:radial-gradient(circle,#aaa 0.8px,transparent 1.1px);background-size:4px 3px"></div>
<div class="t " style="left:437px;top:815.3px;font-size:22.2px;letter-spacing:0.381px;">Elevation Profile</div>
<div class="pressed" style="left:761px;top:848px;width:36px;height:36px;border-radius:4px"></div>
<div class="pressed" style="left:911px;top:848px;width:36px;height:36px;border-radius:4px"></div>
<div class="pressed" style="left:1159px;top:848px;width:36px;height:36px;border-radius:4px"></div>
<div class="abs" style="left:515px;top:856px;width:1.5px;height:20px;background:#c8c8c8"></div>
<div class="abs" style="left:715px;top:856px;width:1.5px;height:20px;background:#c8c8c8"></div>
<div class="abs" style="left:989px;top:856px;width:1.5px;height:20px;background:#c8c8c8"></div>
<div class="abs" style="left:1114px;top:856px;width:1.5px;height:20px;background:#c8c8c8"></div>
<svg class="abs" style="left:440px;top:852px" width="28" height="28" viewBox="-14 -14 28 28"><rect x="-9.500" y="-10" width="17" height="16.500" fill="#f3f3f1" stroke="#8b8b8b" stroke-width="1.500"/><g transform="translate(7.5,7.5)"><rect x="-4.5" y="-4.5" width="9" height="9" rx="1.800" fill="#5b9a63" stroke="#47814f" stroke-width=".8"/><path d="M0 -2.800V2.800M-2.800 0H2.800" stroke="#fff" stroke-width="1.800"/></g></svg>
<svg class="abs" style="left:478px;top:852px" width="28" height="28" viewBox="-14 -14 28 28"><path d="M-10 -10H10M-7 -10V11" stroke="#9a9a9a" stroke-width="1.300" fill="none"/><rect x="-5" y="-6" width="5.500" height="5.500" fill="#f7a030" stroke="#e08a1a"/><rect x="-5" y="3" width="5.500" height="5.500" fill="#f7a030" stroke="#e08a1a"/><path d="M3 -3.500H10M3 5.500H10" stroke="#9a9a9a" stroke-width="2.200"/></svg>
<svg class="abs" style="left:529px;top:852px" width="28" height="28" viewBox="-14 -14 28 28"><path d="M-8.500 -8L-2.500 3.500L4 -6.500H9.500" fill="none" stroke="#6aa876" stroke-width="1.500"/><g fill="#f4f4f4" stroke="#777" stroke-width="1"><rect x="-10.300" y="-10" width="3.600" height="3.600"/><rect x="-4.300" y="2" width="3.600" height="3.600"/><rect x="2.200" y="-8.500" width="3.600" height="3.600"/><rect x="7.500" y="-8.500" width="3.600" height="3.600"/></g><g transform="translate(6,7)"><rect x="-5.25" y="-5.25" width="10.5" height="10.5" rx="3" fill="#c9a50f"/><g stroke="#fff" stroke-width="1.700" stroke-linecap="round"><path d="M0 -3.300V3.300M-2.900 -1.700L2.900 1.700M-2.900 1.700L2.900 -1.700"/></g><circle r="0.8" fill="#c9a50f"/></g></svg>
<svg class="abs" style="left:566px;top:852px" width="28" height="28" viewBox="-14 -14 28 28"><path d="M-8.500 -8L-2.500 3.500L4 -6.500H9.500" fill="none" stroke="#6aa876" stroke-width="1.500"/><g fill="#f4f4f4" stroke="#777" stroke-width="1"><rect x="-10.300" y="-10" width="3.600" height="3.600"/><rect x="-4.300" y="2" width="3.600" height="3.600"/><rect x="2.200" y="-8.500" width="3.600" height="3.600"/><rect x="7.500" y="-8.500" width="3.600" height="3.600"/></g><path transform="translate(1,-1) rotate(-17) scale(0.78)" d="M0 0V15.500L3.800 12L6.600 18.200L9.200 17L6.500 11L11.500 11Z" fill="#000" stroke="#fff" stroke-width="1" stroke-linejoin="round"/></svg>
<svg class="abs" style="left:603px;top:852px" width="28" height="28" viewBox="-14 -14 28 28"><path d="M8 -11V11L-8 0Z" fill="#6d97c9" stroke="#41699b" stroke-width="1.300" stroke-linejoin="round"/></svg>
<svg class="abs" style="left:640px;top:852px" width="28" height="28" viewBox="-14 -14 28 28"><path d="M-8 -11V11L8 0Z" fill="#6d97c9" stroke="#41699b" stroke-width="1.300" stroke-linejoin="round"/></svg>
<svg class="abs" style="left:677px;top:852px" width="28" height="28" viewBox="-14 -14 28 28"><ellipse cx="4" cy="10.500" rx="6" ry="1.800" fill="#d0d0d0"/><path d="M-7 -10.500L-2 -3" stroke="#c98a2b" stroke-width="2.600" stroke-linecap="round"/><path d="M-4.500 -3.500L1 -7L9.500 6.500L2 10.500C-1 6 -3 1 -4.500 -3.500Z" fill="#f2c430" stroke="#caa11d" stroke-width=".8"/><path d="M-4.700 -3.200L1.200 -6.800" stroke="#c8232a" stroke-width="2.200"/></svg>
<svg class="abs" style="left:727px;top:852px" width="28" height="28" viewBox="-14 -14 28 28"><circle cx="-3" cy="-3.500" r="7.800" fill="#6d97c9"/><text x="-3.300" y="1.500" font-size="14" font-style="italic" font-weight="bold" text-anchor="middle" fill="#fff" font-family="Liberation Serif,serif">i</text><path transform="translate(1,-1) rotate(-17) scale(0.75)" d="M0 0V15.500L3.800 12L6.600 18.200L9.200 17L6.500 11L11.500 11Z" fill="#fff" stroke="#000" stroke-width="1" stroke-linejoin="round"/></svg>
<svg class="abs" style="left:765px;top:852px" width="28" height="28" viewBox="-14 -14 28 28"><g transform="scale(0.62)"><path d="M-3 16.300L-6.600 7.700C-8 5 -9.800 2.300 -10.800 0C-11.500 -1.500 -12.600 -3.500 -12.900 -5.200C-13.200 -7 -11 -8 -9.500 -7.200C-8 -6.300 -6.500 -4.500 -5.200 -1.600L-5.200 -14.900C-5.200 -18.200 0.200 -18.200 0.200 -14.900L0.200 -13.500C0.500 -16.200 5.200 -16 5.200 -13.100L5.200 -11.800C5.800 -13.800 9.900 -13.400 9.900 -10.400L9.900 -9.500C10.500 -11.300 13.700 -10.900 13.700 -8.100L13.700 3.200C13.500 6 11 12 9.900 16.300Z" fill="#fff" stroke="#000" stroke-width="1.350" stroke-linejoin="round"/><path d="M0.200 -13.500L0.200 -5M5.200 -11.800L4.800 -5M9.900 -9.500L9.500 -3.800" stroke="#000" stroke-width="1.350" stroke-linecap="round" fill="none"/></g></svg>
<svg class="abs" style="left:802px;top:852px" width="28" height="28" viewBox="-14 -14 28 28"><rect x="-6" y="-11" width="17" height="20" fill="none" stroke="#aaa" stroke-width=".8" stroke-dasharray="2 1.500"/><path d="M-3.2 3.3L-10.5 10.0" stroke="#2b2b2b" stroke-width="3.600" stroke-linecap="round"/><path d="M-4.8 4.8L-10.3 9.8" stroke="#f5c518" stroke-width="2" stroke-linecap="round"/><circle cx="2" cy="-2.5" r="7.6" fill="url(#lg)" stroke="#6b6b6b" stroke-width="1.300"/><path d="M-2 -6V1M6 -6V1M-2 -2.500H6" stroke="#6d97c9" stroke-width="2.400" stroke-linecap="round"/></svg>
<svg class="abs" style="left:839px;top:852px" width="28" height="28" viewBox="-14 -14 28 28"><path d="M-3.2 3.3L-10.5 10.0" stroke="#2b2b2b" stroke-width="3.600" stroke-linecap="round"/><path d="M-4.8 4.8L-10.3 9.8" stroke="#f5c518" stroke-width="2" stroke-linecap="round"/><circle cx="2" cy="-2.5" r="7.6" fill="url(#lg)" stroke="#6b6b6b" stroke-width="1.300"/><path d="M2 -7V2M-2.500 -2.500H6.500" stroke="#6d97c9" stroke-width="2.600" stroke-linecap="round"/></svg>
<svg class="abs" style="left:877px;top:852px" width="28" height="28" viewBox="-14 -14 28 28"><path d="M-4.7 4.8L-12.0 11.5" stroke="#2b2b2b" stroke-width="3.600" stroke-linecap="round"/><path d="M-6.3 6.3L-11.8 11.3" stroke="#f5c518" stroke-width="2" stroke-linecap="round"/><circle cx="0.5" cy="-1" r="6.5" fill="url(#lg)" stroke="#6b6b6b" stroke-width="1.300"/><path transform="translate(6.5,-6.5) rotate(0) scale(.62)" d="M-7.500 -7.500H7.500V7.500L3 3L-2 8L-8 2L-3 -3Z" fill="#6d97c9" stroke="#41699b" stroke-width="1"/><path transform="translate(-5.5,-6.5) rotate(-90) scale(.62)" d="M-7.500 -7.500H7.500V7.500L3 3L-2 8L-8 2L-3 -3Z" fill="#6d97c9" stroke="#41699b" stroke-width="1"/><path transform="translate(6.5,5.5) rotate(90) scale(.62)" d="M-7.500 -7.500H7.500V7.500L3 3L-2 8L-8 2L-3 -3Z" fill="#6d97c9" stroke="#41699b" stroke-width="1"/></svg>
<svg class="abs" style="left:915px;top:852px" width="28" height="28" viewBox="-14 -14 28 28"><g transform="rotate(-35)"><path d="M-9 -8V1A9 9 0 0 0 9 1V-8H3V1A3 3 0 0 1 -3 1V-8Z" fill="#cc1317" stroke="#8e0c0f" stroke-width="1"/><rect x="-9" y="-8" width="6" height="3.800" fill="#f4f4f4" stroke="#8e0c0f" stroke-width=".8"/><rect x="3" y="-8" width="6" height="3.800" fill="#f4f4f4" stroke="#8e0c0f" stroke-width=".8"/></g></svg>
<svg class="abs" style="left:952px;top:852px" width="28" height="28" viewBox="-14 -14 28 28"><path d="M-9.500 -7.500V-3M9.500 -7.500V-3M-9.500 -5.300H9.500" stroke="#41699b" stroke-width="1.400"/><rect x="-10.500" y="0.500" width="21" height="7.500" rx="1" fill="#c9c9c9" stroke="#5e5e5e" stroke-width="1.100"/><path d="M-7 0.500V4.500M-3.500 0.500V3.500M0 0.500V4.500M3.500 0.500V3.500M7 0.500V4.500" stroke="#5e5e5e" stroke-width="1"/></svg>
<svg class="abs" style="left:1002px;top:852px" width="28" height="28" viewBox="-14 -14 28 28"><path d="M-8.500 -11H1L6.500 -5.500V10.500H-8.500Z" fill="#fff" stroke="#9a9a9a" stroke-width="1.100"/><path d="M1 -11V-5.500H6.500" fill="none" stroke="#9a9a9a" stroke-width=".9"/><path d="M-6 6C-3 2 -1 -3 -2 -6C-3 -8 -4 -5 -2 -1C0 2 3 4 5 3C6 2 3 1 -1 2C-3 3 -5 4 -6 6Z" fill="none" stroke="#e2231a" stroke-width="1.300"/><rect x="3" y="2.500" width="10.500" height="10" rx="1.800" fill="#2f566f"/><path d="M5.500 5V10M5.500 5H7.500M5.500 10H7.500M7.500 7.500H12M10 5.500L12 7.500L10 9.500" stroke="#fff" stroke-width="1.100" fill="none"/></svg>
<svg class="abs" style="left:1039px;top:852px" width="28" height="28" viewBox="-14 -14 28 28"><path d="M-8.500 -11H1L6.500 -5.500V10.500H-8.500Z" fill="#fff" stroke="#9a9a9a" stroke-width="1.100"/><path d="M1 -11V-5.500H6.500" fill="none" stroke="#9a9a9a" stroke-width=".9"/><rect x="-7.500" y="-4" width="13" height="9.500" fill="#49a2e8"/><path d="M-7.500 5.500V2L-3 -1L1 1.500L5.500 0V5.500Z" fill="#d2b64a"/><rect x="3" y="2.500" width="10.500" height="10" rx="1.800" fill="#2f566f"/><path d="M5.500 5V10M5.500 5H7.500M5.500 10H7.500M7.500 7.500H12M10 5.500L12 7.500L10 9.500" stroke="#fff" stroke-width="1.100" fill="none"/></svg>
<svg class="abs" style="left:1077px;top:852px" width="28" height="28" viewBox="-14 -14 28 28"><rect x="-10" y="-10" width="19" height="19.500" rx="2" fill="#6d97c9" stroke="#41699b" stroke-width="1.100"/><rect x="-6.500" y="-8.500" width="12" height="8" fill="#f4f4f4" stroke="#777" stroke-width=".7"/><path d="M-5 -6.500H4M-5 -4.700H4M-5 -2.900H4" stroke="#666" stroke-width=".9"/><rect x="-6" y="3" width="11" height="6.500" fill="#f0f0f0" stroke="#666" stroke-width=".7"/><rect x="-4" y="4.500" width="2.500" height="4" fill="#41699b"/><rect x="2.500" y="2.500" width="10" height="9.500" rx="1.800" fill="#4e8f55"/><path d="M2 3H13.500L8 11Z" fill="#222"/></svg>
<svg class="abs" style="left:1126px;top:852px" width="28" height="28" viewBox="-14 -14 28 28"><path d="M-10 -7.500C-8 -11 -3.500 -11 -1.500 -8.500L-5 -7L-5 -4.500L-2.500 -3L0.500 -5C1.500 -2 -1 0.500 -4 0L-5 -0.500C-8 -1.500 -10.500 -4.500 -10 -7.500Z" fill="#ececec" stroke="#666" stroke-width="1"/><path d="M-3 -1L8.500 9.500" stroke="#222" stroke-width="5.500" stroke-linecap="round"/><path d="M-3.500 -1.500L4 5.500" stroke="#d9c27a" stroke-width="3"/><path d="M4 5.500L9 10" stroke="#1a1a1a" stroke-width="5" stroke-linecap="round"/></svg>
<svg class="abs" style="left:1163px;top:852px" width="28" height="28" viewBox="-14 -14 28 28"><rect x="-5.500" y="-10" width="16" height="14.500" fill="#f4f4f4" stroke="#8a8a8a" stroke-width="1.100"/><rect x="-5.500" y="-10" width="16" height="3.200" fill="#555"/><rect x="-9.500" y="-2.500" width="14" height="12.500" fill="#fff" stroke="#8a8a8a" stroke-width="1.100"/><path d="M-7.500 0.500H-4M-2.500 0.500H2.500M-7.500 3.500H-4M-2.500 3.500H2.500M-7.500 6.500H-4M-2.500 6.500H2.500" stroke="#6d97c9" stroke-width="1.700"/></svg>
<svg class="abs" style="left:517px;top:904px" width="1684.1999999999998" height="540.2" viewBox="517 904 1684.1999999999998 540.2" shape-rendering="crispEdges">
<rect x="517" y="904" width="1684.1999999999998" height="540.2" fill="#fff"/>
<rect x="517" y="943" width="1684.1999999999998" height="1" fill="#d2d2d2"/>
<rect x="517" y="1011" width="1684.1999999999998" height="1" fill="#d2d2d2"/>
<rect x="517" y="1079" width="1684.1999999999998" height="1" fill="#d2d2d2"/>
<rect x="517" y="1215" width="1684.1999999999998" height="1" fill="#d2d2d2"/>
<rect x="517" y="1283" width="1684.1999999999998" height="1" fill="#d2d2d2"/>
<rect x="517" y="1351" width="1684.1999999999998" height="1" fill="#d2d2d2"/>
<rect x="517" y="1147" width="1684.1999999999998" height="1" fill="#6c6c6c"/>
<rect x="517" y="1419" width="1684.1999999999998" height="1" fill="#6c6c6c"/>
<rect x="715.5" y="904" width="1" height="540.2" fill="#d2d2d2"/>
<rect x="925.5" y="904" width="1" height="540.2" fill="#d2d2d2"/>
<rect x="1136.0" y="904" width="1" height="540.2" fill="#d2d2d2"/>
<rect x="1556.5" y="904" width="1" height="540.2" fill="#d2d2d2"/>
<rect x="1766.5" y="904" width="1" height="540.2" fill="#d2d2d2"/>
<rect x="1977.0" y="904" width="1" height="540.2" fill="#d2d2d2"/>
<rect x="1345.5" y="904" width="1" height="540.2" fill="#6c6c6c"/>
<rect x="2187.0" y="904" width="1" height="540.2" fill="#6c6c6c"/>
<g>
<rect x="627.2" y="918.9" width="15.2" height="9.0" fill="#00b8ff"/>
<rect x="627.2" y="927.6" width="15.2" height="28.6" fill="#0088ff"/>
<rect x="627.2" y="955.9" width="15.2" height="23.5" fill="#00b8ff"/>
<rect x="627.2" y="979.1" width="15.2" height="29.3" fill="#0088ff"/>
<rect x="627.2" y="1008.2" width="15.2" height="12.3" fill="#00b8ff"/>
<rect x="627.2" y="1020.1" width="15.2" height="13.0" fill="#00d8ff"/>
<rect x="627.2" y="1032.8" width="15.2" height="91.0" fill="#00ffff"/>
<rect x="627.2" y="1123.5" width="15.2" height="79.4" fill="#00d8ff"/>
<rect x="627.2" y="1202.6" width="15.2" height="69.2" fill="#00ffff"/>
<rect x="627.2" y="1271.5" width="15.2" height="39.1" fill="#00ff90"/>
<rect x="627.2" y="1310.3" width="15.2" height="43.8" fill="#00f000"/>
</g>
<g>
<rect x="721.8" y="928.7" width="14.9" height="10.1" fill="#00d8ff"/>
<rect x="721.8" y="938.5" width="14.9" height="59.4" fill="#00b8ff"/>
<rect x="721.8" y="997.6" width="14.9" height="32.6" fill="#0088ff"/>
<rect x="721.8" y="1029.9" width="14.9" height="13.4" fill="#00b8ff"/>
<rect x="721.8" y="1043.0" width="14.9" height="30.8" fill="#00d8ff"/>
<rect x="721.8" y="1073.5" width="14.9" height="38.4" fill="#00ffff"/>
<rect x="721.8" y="1111.5" width="14.9" height="133.8" fill="#00d8ff"/>
<rect x="721.8" y="1245.0" width="14.9" height="75.7" fill="#00ffff"/>
<rect x="721.8" y="1320.5" width="14.9" height="43.5" fill="#00ff90"/>
</g>
<g>
<rect x="782.0" y="928.0" width="14.9" height="6.5" fill="#0088ff"/>
<rect x="782.0" y="934.2" width="14.9" height="21.0" fill="#0050f0"/>
<rect x="782.0" y="954.8" width="14.9" height="5.7" fill="#0088ff"/>
<rect x="782.0" y="960.3" width="14.9" height="81.9" fill="#00b8ff"/>
<rect x="782.0" y="1041.9" width="14.9" height="114.6" fill="#00d8ff"/>
<rect x="782.0" y="1156.2" width="14.9" height="56.5" fill="#00b8ff"/>
<rect x="782.0" y="1212.4" width="14.9" height="107.3" fill="#00d8ff"/>
<rect x="782.0" y="1319.4" width="14.9" height="43.8" fill="#00ffff"/>
</g>
<g>
<rect x="823.7" y="925.8" width="14.9" height="21.0" fill="#0088ff"/>
<rect x="823.7" y="946.5" width="14.9" height="10.5" fill="#00b8ff"/>
<rect x="823.7" y="956.7" width="14.9" height="13.0" fill="#00d8ff"/>
<rect x="823.7" y="969.4" width="14.9" height="34.8" fill="#00b8ff"/>
<rect x="823.7" y="1003.8" width="14.9" height="36.6" fill="#0088ff"/>
<rect x="823.7" y="1040.1" width="14.9" height="49.3" fill="#00b8ff"/>
<rect x="823.7" y="1089.1" width="14.9" height="42.0" fill="#00d8ff"/>
<rect x="823.7" y="1130.8" width="14.9" height="111.7" fill="#00b8ff"/>
<rect x="823.7" y="1242.1" width="14.9" height="75.0" fill="#00d8ff"/>
<rect x="823.7" y="1316.8" width="14.9" height="44.2" fill="#00ffff"/>
</g>
<g>
<rect x="854.9" y="935.6" width="15.2" height="43.8" fill="#00d8ff"/>
<rect x="854.9" y="979.1" width="15.2" height="85.9" fill="#0088ff"/>
<rect x="854.9" y="1064.7" width="15.2" height="223.4" fill="#00b8ff"/>
<rect x="854.9" y="1287.8" width="15.2" height="83.0" fill="#00d8ff"/>
</g>
<g>
<rect x="895.9" y="938.9" width="15.2" height="12.6" fill="#0088ff"/>
<rect x="895.9" y="951.2" width="15.2" height="9.4" fill="#00b8ff"/>
<rect x="895.9" y="960.3" width="15.2" height="16.6" fill="#00d8ff"/>
<rect x="895.9" y="976.6" width="15.2" height="13.7" fill="#00b8ff"/>
<rect x="895.9" y="990.0" width="15.2" height="78.3" fill="#0088ff"/>
<rect x="895.9" y="1068.0" width="15.2" height="223.4" fill="#00b8ff"/>
<rect x="895.9" y="1291.1" width="15.2" height="83.0" fill="#00d8ff"/>
</g>
<g>
<rect x="955.0" y="944.7" width="14.9" height="15.9" fill="#00b8ff"/>
<rect x="955.0" y="960.3" width="14.9" height="22.1" fill="#00ffff"/>
<rect x="955.0" y="982.1" width="14.9" height="31.1" fill="#00b8ff"/>
<rect x="955.0" y="1012.9" width="14.9" height="10.1" fill="#0088ff"/>
<rect x="955.0" y="1022.7" width="14.9" height="23.2" fill="#0050f0"/>
<rect x="955.0" y="1045.5" width="14.9" height="27.5" fill="#0088ff"/>
<rect x="955.0" y="1072.7" width="14.9" height="127.2" fill="#00b8ff"/>
<rect x="955.0" y="1199.7" width="14.9" height="61.2" fill="#0088ff"/>
<rect x="955.0" y="1260.6" width="14.9" height="75.4" fill="#00b8ff"/>
<rect x="955.0" y="1335.7" width="14.9" height="44.2" fill="#00d8ff"/>
</g>
<g>
<rect x="987.7" y="937.8" width="15.2" height="15.5" fill="#00b8ff"/>
<rect x="987.7" y="953.0" width="15.2" height="16.6" fill="#00ffff"/>
<rect x="987.7" y="969.4" width="15.2" height="29.3" fill="#00b8ff"/>
<rect x="987.7" y="998.4" width="15.2" height="18.4" fill="#0088ff"/>
<rect x="987.7" y="1016.5" width="15.2" height="22.8" fill="#0050f0"/>
<rect x="987.7" y="1039.0" width="15.2" height="13.0" fill="#0088ff"/>
<rect x="987.7" y="1051.7" width="15.2" height="141.0" fill="#00b8ff"/>
<rect x="987.7" y="1192.4" width="15.2" height="62.0" fill="#0088ff"/>
<rect x="987.7" y="1254.1" width="15.2" height="75.0" fill="#00b8ff"/>
<rect x="987.7" y="1328.8" width="15.2" height="44.2" fill="#00d8ff"/>
</g>
<g>
<rect x="1025.0" y="941.4" width="15.2" height="31.9" fill="#00c8ff"/>
<rect x="1025.0" y="973.0" width="15.2" height="47.5" fill="#0088ff"/>
<rect x="1025.0" y="1020.1" width="15.2" height="10.1" fill="#0050f0"/>
<rect x="1025.0" y="1029.9" width="15.2" height="26.1" fill="#0088ff"/>
<rect x="1025.0" y="1055.7" width="15.2" height="30.8" fill="#00b8ff"/>
<rect x="1025.0" y="1086.1" width="15.2" height="60.5" fill="#00d8ff"/>
<rect x="1025.0" y="1146.4" width="15.2" height="186.7" fill="#00b8ff"/>
<rect x="1025.0" y="1332.8" width="15.2" height="44.2" fill="#00d8ff"/>
</g>
<g>
<rect x="1050.1" y="951.9" width="14.9" height="37.7" fill="#00c8ff"/>
<rect x="1050.1" y="989.3" width="14.9" height="40.9" fill="#0088ff"/>
<rect x="1050.1" y="1029.9" width="14.9" height="23.5" fill="#0050f0"/>
<rect x="1050.1" y="1053.1" width="14.9" height="12.6" fill="#0088ff"/>
<rect x="1050.1" y="1065.5" width="14.9" height="31.9" fill="#00b8ff"/>
<rect x="1050.1" y="1097.0" width="14.9" height="59.4" fill="#00d8ff"/>
<rect x="1050.1" y="1156.2" width="14.9" height="147.9" fill="#00b8ff"/>
<rect x="1050.1" y="1303.8" width="14.9" height="83.7" fill="#00d8ff"/>
</g>
<g>
<rect x="1096.8" y="963.6" width="15.2" height="31.5" fill="#00b8ff"/>
<rect x="1096.8" y="994.7" width="15.2" height="20.2" fill="#0088ff"/>
<rect x="1096.8" y="1014.7" width="15.2" height="18.4" fill="#00b8ff"/>
<rect x="1096.8" y="1032.8" width="15.2" height="9.4" fill="#0088ff"/>
<rect x="1096.8" y="1041.9" width="15.2" height="23.2" fill="#0050f0"/>
<rect x="1096.8" y="1064.7" width="15.2" height="13.7" fill="#0088ff"/>
<rect x="1096.8" y="1078.2" width="15.2" height="30.4" fill="#00b8ff"/>
<rect x="1096.8" y="1108.3" width="15.2" height="109.8" fill="#00d8ff"/>
<rect x="1096.8" y="1217.8" width="15.2" height="62.0" fill="#00b8ff"/>
<rect x="1096.8" y="1279.5" width="15.2" height="119.3" fill="#00d8ff"/>
</g>
<g>
<rect x="1163.9" y="959.6" width="14.9" height="12.6" fill="#00a0ff"/>
<rect x="1163.9" y="971.9" width="14.9" height="8.6" fill="#00d8ff"/>
<rect x="1163.9" y="980.2" width="14.9" height="5.7" fill="#00ff90"/>
<rect x="1163.9" y="985.7" width="14.9" height="43.1" fill="#00b8ff"/>
<rect x="1163.9" y="1028.5" width="14.9" height="31.9" fill="#0088ff"/>
<rect x="1163.9" y="1060.0" width="14.9" height="44.9" fill="#00b8ff"/>
<rect x="1163.9" y="1104.6" width="14.9" height="109.8" fill="#00ffff"/>
<rect x="1163.9" y="1214.2" width="14.9" height="62.0" fill="#00d8ff"/>
<rect x="1163.9" y="1275.8" width="14.9" height="119.3" fill="#00ffff"/>
</g>
<g>
<rect x="1243.7" y="948.7" width="14.9" height="17.3" fill="#00d8ff"/>
<rect x="1243.7" y="965.7" width="14.9" height="9.4" fill="#00ff90"/>
<rect x="1243.7" y="974.8" width="14.9" height="11.2" fill="#00d8ff"/>
<rect x="1243.7" y="985.7" width="14.9" height="22.1" fill="#00b8ff"/>
<rect x="1243.7" y="1007.4" width="14.9" height="11.2" fill="#00d8ff"/>
<rect x="1243.7" y="1018.3" width="14.9" height="75.7" fill="#00b8ff"/>
<rect x="1243.7" y="1093.8" width="14.9" height="37.3" fill="#00d8ff"/>
<rect x="1243.7" y="1130.8" width="14.9" height="135.2" fill="#00ffff"/>
<rect x="1243.7" y="1265.7" width="14.9" height="118.2" fill="#00ff90"/>
</g>
<g>
<rect x="1340.2" y="963.9" width="14.9" height="27.5" fill="#00ffff"/>
<rect x="1340.2" y="991.1" width="14.9" height="7.6" fill="#00b8ff"/>
<rect x="1340.2" y="998.4" width="14.9" height="10.1" fill="#0088ff"/>
<rect x="1340.2" y="1008.2" width="14.9" height="10.5" fill="#00b8ff"/>
<rect x="1340.2" y="1018.3" width="14.9" height="13.0" fill="#00d8ff"/>
<rect x="1340.2" y="1031.0" width="14.9" height="29.3" fill="#00b8ff"/>
<rect x="1340.2" y="1060.0" width="14.9" height="18.4" fill="#00d8ff"/>
<rect x="1340.2" y="1078.2" width="14.9" height="63.8" fill="#00ffff"/>
<rect x="1340.2" y="1141.6" width="14.9" height="29.3" fill="#00d8ff"/>
<rect x="1340.2" y="1170.7" width="14.9" height="31.1" fill="#00b8ff"/>
<rect x="1340.2" y="1201.5" width="14.9" height="34.8" fill="#0088ff"/>
<rect x="1340.2" y="1236.0" width="14.9" height="39.5" fill="#00b8ff"/>
<rect x="1340.2" y="1275.1" width="14.9" height="43.8" fill="#00ffff"/>
<rect x="1340.2" y="1318.6" width="14.9" height="48.9" fill="#00ff90"/>
<rect x="1340.2" y="1367.3" width="14.9" height="55.8" fill="#00ffff"/>
<rect x="1340.2" y="1422.7" width="14.9" height="20.1" fill="#00b8ff"/>
</g>
<g>
<rect x="1397.5" y="965.0" width="14.9" height="5.7" fill="#00b8ff"/>
<rect x="1397.5" y="970.4" width="14.9" height="7.6" fill="#0088ff"/>
<rect x="1397.5" y="977.7" width="14.9" height="25.7" fill="#00c8ff"/>
<rect x="1397.5" y="1003.1" width="14.9" height="13.0" fill="#0088ff"/>
<rect x="1397.5" y="1015.8" width="14.9" height="17.3" fill="#00b8ff"/>
<rect x="1397.5" y="1032.8" width="14.9" height="11.2" fill="#00d8ff"/>
<rect x="1397.5" y="1043.7" width="14.9" height="35.8" fill="#00b8ff"/>
<rect x="1397.5" y="1079.3" width="14.9" height="31.1" fill="#00d8ff"/>
<rect x="1397.5" y="1110.1" width="14.9" height="38.0" fill="#00ffff"/>
<rect x="1397.5" y="1147.8" width="14.9" height="170.0" fill="#00ff90"/>
<rect x="1397.5" y="1317.6" width="14.9" height="82.6" fill="#00f000"/>
</g>
<g>
<rect x="1432.7" y="968.3" width="14.9" height="32.2" fill="#00c8ff"/>
<rect x="1432.7" y="1000.2" width="14.9" height="97.1" fill="#00b8ff"/>
<rect x="1432.7" y="1097.0" width="14.9" height="34.0" fill="#00d8ff"/>
<rect x="1432.7" y="1130.8" width="14.9" height="66.3" fill="#00ffff"/>
<rect x="1432.7" y="1196.8" width="14.9" height="88.4" fill="#00ff90"/>
<rect x="1432.7" y="1284.9" width="14.9" height="118.5" fill="#00f000"/>
</g>
<g>
<rect x="1457.4" y="950.5" width="14.9" height="6.5" fill="#00b8ff"/>
<rect x="1457.4" y="956.7" width="14.9" height="6.8" fill="#0088ff"/>
<rect x="1457.4" y="963.2" width="14.9" height="132.7" fill="#00b8ff"/>
<rect x="1457.4" y="1095.6" width="14.9" height="38.0" fill="#00d8ff"/>
<rect x="1457.4" y="1133.3" width="14.9" height="72.8" fill="#00ffff"/>
<rect x="1457.4" y="1205.8" width="14.9" height="97.1" fill="#00ff90"/>
<rect x="1457.4" y="1302.7" width="14.9" height="83.4" fill="#00f000"/>
</g>
<g>
<rect x="1545.1" y="971.9" width="15.2" height="32.2" fill="#00c8ff"/>
<rect x="1545.1" y="1003.8" width="15.2" height="12.3" fill="#0088ff"/>
<rect x="1545.1" y="1015.8" width="15.2" height="46.4" fill="#00b8ff"/>
<rect x="1545.1" y="1061.8" width="15.2" height="23.9" fill="#0088ff"/>
<rect x="1545.1" y="1085.4" width="15.2" height="141.8" fill="#00b8ff"/>
<rect x="1545.1" y="1226.9" width="15.2" height="29.3" fill="#00d8ff"/>
<rect x="1545.1" y="1255.9" width="15.2" height="69.2" fill="#00ffff"/>
<rect x="1545.1" y="1324.8" width="15.2" height="39.5" fill="#00ff90"/>
<rect x="1545.1" y="1364.0" width="15.2" height="43.5" fill="#00f000"/>
</g>
<g>
<rect x="1569.8" y="977.0" width="15.2" height="26.4" fill="#00d8ff"/>
<rect x="1569.8" y="1003.1" width="15.2" height="6.5" fill="#00b8ff"/>
<rect x="1569.8" y="1009.3" width="15.2" height="19.2" fill="#0088ff"/>
<rect x="1569.8" y="1028.1" width="15.2" height="203.4" fill="#00b8ff"/>
<rect x="1569.8" y="1231.2" width="15.2" height="62.3" fill="#00d8ff"/>
<rect x="1569.8" y="1293.3" width="15.2" height="36.2" fill="#00ffff"/>
<rect x="1569.8" y="1329.2" width="15.2" height="39.8" fill="#00ff90"/>
<rect x="1569.8" y="1368.7" width="15.2" height="43.5" fill="#00f000"/>
</g>
<g>
<rect x="1624.6" y="977.7" width="15.2" height="26.4" fill="#00ffff"/>
<rect x="1624.6" y="1003.8" width="15.2" height="43.1" fill="#00b8ff"/>
<rect x="1624.6" y="1046.6" width="15.2" height="31.9" fill="#0088ff"/>
<rect x="1624.6" y="1078.2" width="15.2" height="183.5" fill="#00b8ff"/>
<rect x="1624.6" y="1261.3" width="15.2" height="68.1" fill="#00d8ff"/>
<rect x="1624.6" y="1329.2" width="15.2" height="40.6" fill="#00ffff"/>
<rect x="1624.6" y="1369.4" width="15.2" height="43.5" fill="#00ff90"/>
</g>
<g>
<rect x="1677.5" y="972.6" width="15.2" height="9.7" fill="#00d8ff"/>
<rect x="1677.5" y="982.1" width="15.2" height="22.1" fill="#00ffff"/>
<rect x="1677.5" y="1003.8" width="15.2" height="58.3" fill="#00c8ff"/>
<rect x="1677.5" y="1061.8" width="15.2" height="25.7" fill="#0088ff"/>
<rect x="1677.5" y="1087.2" width="15.2" height="170.0" fill="#00b8ff"/>
<rect x="1677.5" y="1257.0" width="15.2" height="68.1" fill="#00d8ff"/>
<rect x="1677.5" y="1324.8" width="15.2" height="40.2" fill="#00ffff"/>
<rect x="1677.5" y="1364.7" width="15.2" height="43.5" fill="#00ff90"/>
</g>
<g>
<rect x="1710.9" y="971.5" width="14.9" height="27.1" fill="#00ffff"/>
<rect x="1710.9" y="998.4" width="14.9" height="289.7" fill="#00b8ff"/>
<rect x="1710.9" y="1287.8" width="14.9" height="35.5" fill="#00d8ff"/>
<rect x="1710.9" y="1323.0" width="14.9" height="40.9" fill="#00ffff"/>
<rect x="1710.9" y="1363.6" width="14.9" height="43.5" fill="#00ff90"/>
</g>
<g>
<rect x="1804.8" y="973.7" width="15.2" height="8.6" fill="#00ffff"/>
<rect x="1804.8" y="982.1" width="15.2" height="13.0" fill="#00ff90"/>
<rect x="1804.8" y="994.7" width="15.2" height="5.7" fill="#00ffff"/>
<rect x="1804.8" y="1000.2" width="15.2" height="63.8" fill="#00b8ff"/>
<rect x="1804.8" y="1063.7" width="15.2" height="24.6" fill="#0088ff"/>
<rect x="1804.8" y="1088.0" width="15.2" height="49.3" fill="#00b8ff"/>
<rect x="1804.8" y="1136.9" width="15.2" height="19.5" fill="#00d8ff"/>
<rect x="1804.8" y="1156.2" width="15.2" height="134.5" fill="#00b8ff"/>
<rect x="1804.8" y="1290.4" width="15.2" height="35.8" fill="#00d8ff"/>
<rect x="1804.8" y="1325.9" width="15.2" height="39.8" fill="#00ffff"/>
<rect x="1804.8" y="1365.4" width="15.2" height="43.5" fill="#00ff90"/>
</g>
<g>
<rect x="1838.6" y="975.2" width="15.2" height="7.2" fill="#00d8ff"/>
<rect x="1838.6" y="982.1" width="15.2" height="14.8" fill="#00ffff"/>
<rect x="1838.6" y="996.6" width="15.2" height="10.5" fill="#00b8ff"/>
<rect x="1838.6" y="1006.7" width="15.2" height="12.6" fill="#0088ff"/>
<rect x="1838.6" y="1019.0" width="15.2" height="45.6" fill="#00b8ff"/>
<rect x="1838.6" y="1064.4" width="15.2" height="12.3" fill="#0088ff"/>
<rect x="1838.6" y="1076.4" width="15.2" height="43.8" fill="#00b8ff"/>
<rect x="1838.6" y="1119.9" width="15.2" height="60.1" fill="#00d8ff"/>
<rect x="1838.6" y="1179.7" width="15.2" height="111.7" fill="#00b8ff"/>
<rect x="1838.6" y="1291.1" width="15.2" height="35.8" fill="#00d8ff"/>
<rect x="1838.6" y="1326.6" width="15.2" height="40.2" fill="#00ffff"/>
<rect x="1838.6" y="1366.5" width="15.2" height="43.5" fill="#00ff90"/>
</g>
<g>
<rect x="1875.2" y="979.5" width="15.2" height="6.5" fill="#00b8ff"/>
<rect x="1875.2" y="985.7" width="15.2" height="20.2" fill="#00d8ff"/>
<rect x="1875.2" y="1005.6" width="15.2" height="34.0" fill="#00b8ff"/>
<rect x="1875.2" y="1039.4" width="15.2" height="29.3" fill="#0088ff"/>
<rect x="1875.2" y="1068.4" width="15.2" height="25.7" fill="#00b8ff"/>
<rect x="1875.2" y="1093.8" width="15.2" height="91.0" fill="#00d8ff"/>
<rect x="1875.2" y="1184.4" width="15.2" height="111.7" fill="#00b8ff"/>
<rect x="1875.2" y="1295.8" width="15.2" height="35.8" fill="#00d8ff"/>
<rect x="1875.2" y="1331.3" width="15.2" height="40.2" fill="#00ffff"/>
<rect x="1875.2" y="1371.2" width="15.2" height="43.5" fill="#00ff90"/>
</g>
<g>
<rect x="1915.4" y="986.0" width="15.2" height="17.3" fill="#00d8ff"/>
<rect x="1915.4" y="1003.1" width="15.2" height="4.7" fill="#00ff90"/>
<rect x="1915.4" y="1007.4" width="15.2" height="13.0" fill="#00ffff"/>
<rect x="1915.4" y="1020.1" width="15.2" height="11.2" fill="#00b8ff"/>
<rect x="1915.4" y="1031.0" width="15.2" height="14.8" fill="#0088ff"/>
<rect x="1915.4" y="1045.5" width="15.2" height="9.4" fill="#0050f0"/>
<rect x="1915.4" y="1054.6" width="15.2" height="9.4" fill="#0088ff"/>
<rect x="1915.4" y="1063.7" width="15.2" height="23.2" fill="#00b8ff"/>
<rect x="1915.4" y="1086.5" width="15.2" height="29.0" fill="#00d8ff"/>
<rect x="1915.4" y="1115.2" width="15.2" height="54.7" fill="#00ffff"/>
<rect x="1915.4" y="1169.6" width="15.2" height="21.3" fill="#00d8ff"/>
<rect x="1915.4" y="1190.6" width="15.2" height="51.1" fill="#00b8ff"/>
<rect x="1915.4" y="1241.4" width="15.2" height="28.6" fill="#0088ff"/>
<rect x="1915.4" y="1269.7" width="15.2" height="68.9" fill="#00b8ff"/>
<rect x="1915.4" y="1338.2" width="15.2" height="39.5" fill="#00d8ff"/>
<rect x="1915.4" y="1377.4" width="15.2" height="43.8" fill="#00ffff"/>
</g>
<g>
<rect x="1937.2" y="986.0" width="15.2" height="16.3" fill="#00b8ff"/>
<rect x="1937.2" y="1002.0" width="15.2" height="22.1" fill="#00ffff"/>
<rect x="1937.2" y="1023.8" width="15.2" height="40.9" fill="#0088ff"/>
<rect x="1937.2" y="1064.4" width="15.2" height="22.4" fill="#00b8ff"/>
<rect x="1937.2" y="1086.5" width="15.2" height="29.0" fill="#00d8ff"/>
<rect x="1937.2" y="1115.2" width="15.2" height="54.0" fill="#00ffff"/>
<rect x="1937.2" y="1168.8" width="15.2" height="45.6" fill="#00b8ff"/>
<rect x="1937.2" y="1214.2" width="15.2" height="88.1" fill="#0088ff"/>
<rect x="1937.2" y="1302.0" width="15.2" height="36.6" fill="#00b8ff"/>
<rect x="1937.2" y="1338.2" width="15.2" height="39.5" fill="#00d8ff"/>
<rect x="1937.2" y="1377.4" width="15.2" height="43.1" fill="#00ffff"/>
</g>
<g>
<rect x="1958.6" y="986.0" width="15.2" height="32.6" fill="#00c8ff"/>
<rect x="1958.6" y="1018.3" width="15.2" height="11.9" fill="#0088ff"/>
<rect x="1958.6" y="1029.9" width="15.2" height="7.6" fill="#0050f0"/>
<rect x="1958.6" y="1037.2" width="15.2" height="38.4" fill="#0088ff"/>
<rect x="1958.6" y="1075.3" width="15.2" height="11.5" fill="#00b8ff"/>
<rect x="1958.6" y="1086.5" width="15.2" height="29.0" fill="#00d8ff"/>
<rect x="1958.6" y="1115.2" width="15.2" height="54.0" fill="#00ffff"/>
<rect x="1958.6" y="1168.8" width="15.2" height="22.1" fill="#00d8ff"/>
<rect x="1958.6" y="1190.6" width="15.2" height="23.9" fill="#00b8ff"/>
<rect x="1958.6" y="1214.2" width="15.2" height="88.1" fill="#0088ff"/>
<rect x="1958.6" y="1302.0" width="15.2" height="36.6" fill="#00b8ff"/>
<rect x="1958.6" y="1338.2" width="15.2" height="39.5" fill="#00d8ff"/>
<rect x="1958.6" y="1377.4" width="15.2" height="43.8" fill="#00ffff"/>
</g>
<g>
<rect x="1999.2" y="979.1" width="14.9" height="52.2" fill="#00c8ff"/>
<rect x="1999.2" y="1031.0" width="14.9" height="49.3" fill="#0088ff"/>
<rect x="1999.2" y="1080.0" width="14.9" height="11.9" fill="#00b8ff"/>
<rect x="1999.2" y="1091.6" width="14.9" height="32.9" fill="#00d8ff"/>
<rect x="1999.2" y="1124.2" width="14.9" height="18.8" fill="#00ffff"/>
<rect x="1999.2" y="1142.7" width="14.9" height="40.9" fill="#00d8ff"/>
<rect x="1999.2" y="1183.4" width="14.9" height="24.6" fill="#00b8ff"/>
<rect x="1999.2" y="1207.7" width="14.9" height="55.8" fill="#0088ff"/>
<rect x="1999.2" y="1263.2" width="14.9" height="68.5" fill="#00b8ff"/>
<rect x="1999.2" y="1331.3" width="14.9" height="39.1" fill="#00d8ff"/>
<rect x="1999.2" y="1370.2" width="14.9" height="44.2" fill="#00ffff"/>
</g>
<g>
<rect x="2022.1" y="977.0" width="14.9" height="32.6" fill="#00d8ff"/>
<rect x="2022.1" y="1009.3" width="14.9" height="27.5" fill="#00b8ff"/>
<rect x="2022.1" y="1036.5" width="14.9" height="42.0" fill="#0088ff"/>
<rect x="2022.1" y="1078.2" width="14.9" height="13.0" fill="#00b8ff"/>
<rect x="2022.1" y="1090.9" width="14.9" height="91.0" fill="#00d8ff"/>
<rect x="2022.1" y="1181.5" width="14.9" height="24.6" fill="#00b8ff"/>
<rect x="2022.1" y="1205.8" width="14.9" height="87.4" fill="#0088ff"/>
<rect x="2022.1" y="1292.9" width="14.9" height="36.6" fill="#00b8ff"/>
<rect x="2022.1" y="1329.2" width="14.9" height="39.5" fill="#00d8ff"/>
<rect x="2022.1" y="1368.3" width="14.9" height="43.8" fill="#00ffff"/>
</g>
<g>
<rect x="2109.1" y="969.0" width="14.9" height="26.1" fill="#00c8ff"/>
<rect x="2109.1" y="994.7" width="14.9" height="42.7" fill="#00b8ff"/>
<rect x="2109.1" y="1037.2" width="14.9" height="32.9" fill="#0088ff"/>
<rect x="2109.1" y="1069.8" width="14.9" height="12.3" fill="#00b8ff"/>
<rect x="2109.1" y="1081.8" width="14.9" height="31.9" fill="#00d8ff"/>
<rect x="2109.1" y="1113.4" width="14.9" height="38.7" fill="#00ffff"/>
<rect x="2109.1" y="1151.8" width="14.9" height="46.4" fill="#00d8ff"/>
<rect x="2109.1" y="1197.9" width="14.9" height="54.7" fill="#00b8ff"/>
<rect x="2109.1" y="1252.3" width="14.9" height="69.2" fill="#00d8ff"/>
<rect x="2109.1" y="1321.2" width="14.9" height="83.0" fill="#00ffff"/>
</g>
<g>
<rect x="2133.8" y="965.0" width="15.2" height="13.0" fill="#00d8ff"/>
<rect x="2133.8" y="977.7" width="15.2" height="8.3" fill="#00ffff"/>
<rect x="2133.8" y="985.7" width="15.2" height="17.7" fill="#00d8ff"/>
<rect x="2133.8" y="1003.1" width="15.2" height="22.1" fill="#00b8ff"/>
<rect x="2133.8" y="1024.9" width="15.2" height="9.0" fill="#0088ff"/>
<rect x="2133.8" y="1033.6" width="15.2" height="20.6" fill="#0050f0"/>
<rect x="2133.8" y="1053.9" width="15.2" height="11.9" fill="#0088ff"/>
<rect x="2133.8" y="1065.5" width="15.2" height="13.0" fill="#00b8ff"/>
<rect x="2133.8" y="1078.2" width="15.2" height="15.9" fill="#00d8ff"/>
<rect x="2133.8" y="1093.8" width="15.2" height="99.7" fill="#00ffff"/>
<rect x="2133.8" y="1193.2" width="15.2" height="88.4" fill="#00d8ff"/>
<rect x="2133.8" y="1281.3" width="15.2" height="75.4" fill="#00ffff"/>
<rect x="2133.8" y="1356.4" width="15.2" height="43.8" fill="#00ff90"/>
</g>
<g>
<rect x="2069.9" y="952.1" width="14.8" height="5.0" fill="#0088ff"/>
<rect x="2069.9" y="956.8" width="14.8" height="7.1" fill="#00b8ff"/>
<rect x="2069.9" y="963.6" width="14.8" height="9.7" fill="#00d8ff"/>
<rect x="2069.9" y="973.0" width="14.8" height="435.3" fill="#00b8ff"/>
<rect x="2069.9" y="1408.0" width="14.8" height="2.8" fill="#00f000"/>
<rect x="2069.9" y="1410.5" width="14.8" height="32.3" fill="#00ff90"/>
</g>
<g>
<rect x="582.9" y="949.4" width="15.2" height="13.0" fill="#00b8ff"/>
<rect x="582.9" y="962.1" width="15.2" height="38.4" fill="#0088ff"/>
<rect x="582.9" y="1000.2" width="15.2" height="38.4" fill="#0070f8"/>
<rect x="582.9" y="1038.3" width="15.2" height="13.0" fill="#00b8ff"/>
<rect x="582.9" y="1051.0" width="15.2" height="13.0" fill="#00d8ff"/>
<rect x="582.9" y="1063.7" width="15.2" height="69.2" fill="#00ffff"/>
<rect x="582.9" y="1132.6" width="15.2" height="100.8" fill="#00d8ff"/>
<rect x="582.9" y="1233.0" width="15.2" height="32.9" fill="#00ffff"/>
<rect x="582.9" y="1265.7" width="15.2" height="35.8" fill="#00ff90"/>
<rect x="582.9" y="1301.2" width="15.2" height="39.5" fill="#00f000"/>
<rect x="582.9" y="1340.4" width="15.2" height="43.8" fill="#90ff00"/>
</g>
<g>
<rect x="763.2" y="933.8" width="14.9" height="18.8" fill="#00b8ff"/>
<rect x="763.2" y="952.3" width="14.9" height="16.3" fill="#0050f0"/>
<rect x="763.2" y="968.3" width="14.9" height="10.5" fill="#00b8ff"/>
<rect x="763.2" y="978.4" width="14.9" height="11.9" fill="#00ffff"/>
<rect x="763.2" y="990.0" width="14.9" height="12.3" fill="#00d8ff"/>
<rect x="763.2" y="1002.0" width="14.9" height="13.7" fill="#0088ff"/>
<rect x="763.2" y="1015.4" width="14.9" height="14.8" fill="#0050f0"/>
<rect x="763.2" y="1029.9" width="14.9" height="17.7" fill="#00b8ff"/>
<rect x="763.2" y="1047.3" width="14.9" height="20.2" fill="#00ffff"/>
<rect x="763.2" y="1067.3" width="14.9" height="73.6" fill="#00ff90"/>
<rect x="763.2" y="1140.6" width="14.9" height="31.5" fill="#00d8ff"/>
<rect x="763.2" y="1171.8" width="14.9" height="73.6" fill="#0030d8"/>
<rect x="763.2" y="1245.0" width="14.9" height="43.1" fill="#00ff90"/>
<rect x="763.2" y="1287.8" width="14.9" height="50.0" fill="#d0ff00"/>
<rect x="763.2" y="1337.5" width="14.9" height="54.7" fill="#90ff00"/>
<rect x="763.2" y="1391.9" width="14.9" height="50.9" fill="#00ffff"/>
</g>
<g>
<rect x="1121.1" y="958.5" width="15.2" height="18.4" fill="#00b8ff"/>
<rect x="1121.1" y="976.6" width="15.2" height="16.6" fill="#0050f0"/>
<rect x="1121.1" y="992.9" width="15.2" height="32.9" fill="#00b8ff"/>
<rect x="1121.1" y="1025.6" width="15.2" height="29.3" fill="#0050f0"/>
<rect x="1121.1" y="1054.6" width="15.2" height="18.4" fill="#00b8ff"/>
<rect x="1121.1" y="1072.7" width="15.2" height="20.2" fill="#00ffff"/>
<rect x="1121.1" y="1092.7" width="15.2" height="45.6" fill="#00ff90"/>
<rect x="1121.1" y="1138.0" width="15.2" height="58.3" fill="#00ffff"/>
<rect x="1121.1" y="1196.1" width="15.2" height="72.8" fill="#0050f0"/>
<rect x="1121.1" y="1268.6" width="15.2" height="44.6" fill="#00ff90"/>
<rect x="1121.1" y="1312.8" width="15.2" height="50.4" fill="#d0ff00"/>
<rect x="1121.1" y="1362.9" width="15.2" height="54.0" fill="#90ff00"/>
<rect x="1121.1" y="1416.6" width="15.2" height="26.2" fill="#00ff90"/>
</g>
<g>
<rect x="1207.8" y="952.3" width="14.9" height="6.5" fill="#00b8ff"/>
<rect x="1207.8" y="958.5" width="14.9" height="7.6" fill="#0070f8"/>
<rect x="1207.8" y="965.7" width="14.9" height="3.9" fill="#00d8ff"/>
<rect x="1207.8" y="969.4" width="14.9" height="14.8" fill="#00ff90"/>
<rect x="1207.8" y="983.9" width="14.9" height="36.6" fill="#00d8ff"/>
<rect x="1207.8" y="1020.1" width="14.9" height="22.1" fill="#00b8ff"/>
<rect x="1207.8" y="1041.9" width="14.9" height="23.9" fill="#0088ff"/>
<rect x="1207.8" y="1065.5" width="14.9" height="16.6" fill="#00b8ff"/>
<rect x="1207.8" y="1081.8" width="14.9" height="33.7" fill="#00d8ff"/>
<rect x="1207.8" y="1115.2" width="14.9" height="190.0" fill="#00ffff"/>
<rect x="1207.8" y="1304.9" width="14.9" height="82.6" fill="#00ff90"/>
</g>
<g>
<rect x="1504.9" y="972.6" width="14.9" height="79.4" fill="#00b8ff"/>
<rect x="1504.9" y="1051.7" width="14.9" height="35.1" fill="#0088ff"/>
<rect x="1504.9" y="1086.5" width="14.9" height="50.0" fill="#00b8ff"/>
<rect x="1504.9" y="1136.2" width="14.9" height="91.7" fill="#00d8ff"/>
<rect x="1504.9" y="1227.6" width="14.9" height="62.3" fill="#00ffff"/>
<rect x="1504.9" y="1289.6" width="14.9" height="75.4" fill="#00ff90"/>
<rect x="1504.9" y="1364.7" width="14.9" height="43.5" fill="#00f000"/>
</g>
<g>
<rect x="2065.7" y="965.6" width="15.1" height="25.2" fill="#00d8ff"/>
<rect x="2065.7" y="990.5" width="15.1" height="42.4" fill="#00b8ff"/>
<rect x="2065.7" y="1032.6" width="15.1" height="29.7" fill="#0088ff"/>
<rect x="2065.7" y="1062.0" width="15.1" height="18.0" fill="#00b8ff"/>
<rect x="2065.7" y="1079.7" width="15.1" height="19.6" fill="#00d8ff"/>
<rect x="2065.7" y="1099.0" width="15.1" height="46.7" fill="#00ffff"/>
<rect x="2065.7" y="1145.4" width="15.1" height="27.2" fill="#00d8ff"/>
<rect x="2065.7" y="1172.3" width="15.1" height="31.0" fill="#00b8ff"/>
<rect x="2065.7" y="1203.0" width="15.1" height="35.3" fill="#0050f0"/>
<rect x="2065.7" y="1238.0" width="15.1" height="39.0" fill="#0088ff"/>
<rect x="2065.7" y="1276.7" width="15.1" height="44.1" fill="#00ff90"/>
<rect x="2065.7" y="1320.5" width="15.1" height="103.8" fill="#90ff00"/>
<rect x="2065.7" y="1424.0" width="15.1" height="18.8" fill="#00ff90"/>
</g>
<g>
<rect x="573.5" y="940.7" width="15.2" height="17.0" fill="#00a0ff"/>
<rect x="573.5" y="957.4" width="15.2" height="10.5" fill="#0050f0"/>
<rect x="573.5" y="967.5" width="15.2" height="11.2" fill="#0088ff"/>
<rect x="573.5" y="978.4" width="15.2" height="22.1" fill="#00b8ff"/>
<rect x="573.5" y="1000.2" width="15.2" height="30.0" fill="#0088ff"/>
<rect x="573.5" y="1029.9" width="15.2" height="25.0" fill="#00b8ff"/>
<rect x="573.5" y="1054.6" width="15.2" height="58.3" fill="#00ffff"/>
<rect x="573.5" y="1112.6" width="15.2" height="83.7" fill="#00d8ff"/>
<rect x="573.5" y="1196.1" width="15.2" height="29.3" fill="#00ffff"/>
<rect x="573.5" y="1225.1" width="15.2" height="32.9" fill="#00ff90"/>
<rect x="573.5" y="1257.7" width="15.2" height="35.8" fill="#00f000"/>
<rect x="573.5" y="1293.3" width="15.2" height="40.2" fill="#90ff00"/>
<rect x="573.5" y="1333.2" width="15.2" height="43.5" fill="#d0ff00"/>
</g>
<g>
<rect x="750.1" y="933.1" width="14.9" height="69.2" fill="#00b8ff"/>
<rect x="750.1" y="1002.0" width="14.9" height="32.2" fill="#0088ff"/>
<rect x="750.1" y="1033.9" width="14.9" height="42.7" fill="#00b8ff"/>
<rect x="750.1" y="1076.4" width="14.9" height="208.9" fill="#00d8ff"/>
<rect x="750.1" y="1284.9" width="14.9" height="83.7" fill="#00ffff"/>
</g>
<g>
<rect x="1124.8" y="963.9" width="14.9" height="13.0" fill="#00d8ff"/>
<rect x="1124.8" y="976.6" width="14.9" height="23.9" fill="#00b8ff"/>
<rect x="1124.8" y="1000.2" width="14.9" height="14.8" fill="#0050f0"/>
<rect x="1124.8" y="1014.7" width="14.9" height="50.4" fill="#0088ff"/>
<rect x="1124.8" y="1064.7" width="14.9" height="44.6" fill="#00b8ff"/>
<rect x="1124.8" y="1109.0" width="14.9" height="83.7" fill="#00ffff"/>
<rect x="1124.8" y="1192.4" width="14.9" height="162.8" fill="#00d8ff"/>
<rect x="1124.8" y="1354.9" width="14.9" height="44.6" fill="#00ffff"/>
</g>
<g>
<rect x="1194.4" y="952.3" width="14.9" height="6.5" fill="#00b8ff"/>
<rect x="1194.4" y="958.5" width="14.9" height="7.6" fill="#0050f0"/>
<rect x="1194.4" y="965.7" width="14.9" height="7.6" fill="#00d8ff"/>
<rect x="1194.4" y="973.0" width="14.9" height="6.5" fill="#00f000"/>
<rect x="1194.4" y="979.1" width="14.9" height="5.0" fill="#00ff90"/>
<rect x="1194.4" y="983.9" width="14.9" height="13.0" fill="#00d8ff"/>
<rect x="1194.4" y="996.6" width="14.9" height="15.5" fill="#00ffff"/>
<rect x="1194.4" y="1011.8" width="14.9" height="85.5" fill="#00b8ff"/>
<rect x="1194.4" y="1097.0" width="14.9" height="139.2" fill="#00d8ff"/>
<rect x="1194.4" y="1236.0" width="14.9" height="151.6" fill="#00ffff"/>
</g>
<g>
<rect x="1494.0" y="945.8" width="14.9" height="16.6" fill="#00b8ff"/>
<rect x="1494.0" y="962.1" width="14.9" height="11.2" fill="#00d8ff"/>
<rect x="1494.0" y="973.0" width="14.9" height="51.8" fill="#00b8ff"/>
<rect x="1494.0" y="1024.5" width="14.9" height="51.1" fill="#0088ff"/>
<rect x="1494.0" y="1075.3" width="14.9" height="34.0" fill="#00b8ff"/>
<rect x="1494.0" y="1109.0" width="14.9" height="92.1" fill="#00d8ff"/>
<rect x="1494.0" y="1200.8" width="14.9" height="62.3" fill="#00ffff"/>
<rect x="1494.0" y="1262.8" width="14.9" height="35.8" fill="#00ff90"/>
<rect x="1494.0" y="1298.3" width="14.9" height="83.0" fill="#00f000"/>
</g>
<g>
<rect x="562.6" y="940.7" width="14.9" height="9.0" fill="#00b8ff"/>
<rect x="562.6" y="949.4" width="14.9" height="20.2" fill="#0088ff"/>
<rect x="562.6" y="969.4" width="14.9" height="31.1" fill="#00b8ff"/>
<rect x="562.6" y="1000.2" width="14.9" height="10.5" fill="#0088ff"/>
<rect x="562.6" y="1010.3" width="14.9" height="19.9" fill="#0050f0"/>
<rect x="562.6" y="1029.9" width="14.9" height="25.0" fill="#00b8ff"/>
<rect x="562.6" y="1054.6" width="14.9" height="16.6" fill="#00c8ff"/>
<rect x="562.6" y="1070.9" width="14.9" height="16.6" fill="#00ffff"/>
<rect x="562.6" y="1087.2" width="14.9" height="36.6" fill="#00d8ff"/>
<rect x="562.6" y="1123.5" width="14.9" height="47.5" fill="#00b8ff"/>
<rect x="562.6" y="1170.7" width="14.9" height="25.7" fill="#00d8ff"/>
<rect x="562.6" y="1196.1" width="14.9" height="29.3" fill="#00ffff"/>
<rect x="562.6" y="1225.1" width="14.9" height="32.9" fill="#00ff90"/>
<rect x="562.6" y="1257.7" width="14.9" height="35.8" fill="#90ff00"/>
<rect x="562.6" y="1293.3" width="14.9" height="40.2" fill="#d0ff00"/>
<rect x="562.6" y="1333.2" width="14.9" height="43.5" fill="#ffb800"/>
</g>
<g>
<rect x="2052.7" y="973.0" width="14.7" height="32.1" fill="#00d8ff"/>
<rect x="2052.7" y="1004.8" width="14.7" height="28.1" fill="#00b8ff"/>
<rect x="2052.7" y="1032.6" width="14.7" height="41.5" fill="#0088ff"/>
<rect x="2052.7" y="1073.8" width="14.7" height="13.8" fill="#00b8ff"/>
<rect x="2052.7" y="1087.3" width="14.7" height="90.4" fill="#00d8ff"/>
<rect x="2052.7" y="1177.4" width="14.7" height="24.7" fill="#00b8ff"/>
<rect x="2052.7" y="1201.8" width="14.7" height="55.8" fill="#0088ff"/>
<rect x="2052.7" y="1257.3" width="14.7" height="67.7" fill="#00b8ff"/>
<rect x="2052.7" y="1324.7" width="14.7" height="39.6" fill="#00d8ff"/>
<rect x="2052.7" y="1364.0" width="14.7" height="44.3" fill="#00ffff"/>
</g>
<g>
<rect x="2075.1" y="973.0" width="14.8" height="12.8" fill="#0088ff"/>
<rect x="2075.1" y="985.5" width="14.8" height="8.7" fill="#00b8ff"/>
<rect x="2075.1" y="993.9" width="14.8" height="17.1" fill="#00d8ff"/>
<rect x="2075.1" y="1010.7" width="14.8" height="30.6" fill="#00b8ff"/>
<rect x="2075.1" y="1041.0" width="14.8" height="33.1" fill="#0088ff"/>
<rect x="2075.1" y="1073.8" width="14.8" height="28.1" fill="#00b8ff"/>
<rect x="2075.1" y="1101.6" width="14.8" height="76.1" fill="#00d8ff"/>
<rect x="2075.1" y="1177.4" width="14.8" height="112.2" fill="#00b8ff"/>
<rect x="2075.1" y="1289.3" width="14.8" height="75.0" fill="#00d8ff"/>
<rect x="2075.1" y="1364.0" width="14.8" height="44.3" fill="#00ffff"/>
</g>
<g>
<rect x="553.9" y="937.8" width="15.2" height="11.9" fill="#00b8ff"/>
<rect x="553.9" y="949.4" width="15.2" height="20.2" fill="#0088ff"/>
<rect x="553.9" y="969.4" width="15.2" height="13.0" fill="#00b8ff"/>
<rect x="553.9" y="982.1" width="15.2" height="16.6" fill="#00d8ff"/>
<rect x="553.9" y="998.4" width="15.2" height="8.6" fill="#00b8ff"/>
<rect x="553.9" y="1006.7" width="15.2" height="21.0" fill="#0050f0"/>
<rect x="553.9" y="1027.4" width="15.2" height="12.3" fill="#00b8ff"/>
<rect x="553.9" y="1039.4" width="15.2" height="12.6" fill="#00d8ff"/>
<rect x="553.9" y="1051.7" width="15.2" height="31.5" fill="#00ff90"/>
<rect x="553.9" y="1082.9" width="15.2" height="38.0" fill="#00ffff"/>
<rect x="553.9" y="1120.6" width="15.2" height="47.5" fill="#00d8ff"/>
<rect x="553.9" y="1167.8" width="15.2" height="25.7" fill="#00ffff"/>
<rect x="553.9" y="1193.2" width="15.2" height="29.3" fill="#00f000"/>
<rect x="553.9" y="1222.2" width="15.2" height="32.2" fill="#d0ff00"/>
<rect x="553.9" y="1254.1" width="15.2" height="36.2" fill="#ffff00"/>
<rect x="553.9" y="1290.0" width="15.2" height="39.8" fill="#ffb800"/>
<rect x="553.9" y="1329.5" width="15.2" height="43.5" fill="#ff7800"/>
</g>
<line x1="578.5" y1="1107.2" x2="602.5" y2="1107.2" stroke="#6c6c6c" stroke-width="1.5" stroke-dasharray="2.6 0.7" shape-rendering="auto"/>
<line x1="569.1" y1="1112.3" x2="593.1" y2="1112.3" stroke="#6c6c6c" stroke-width="1.5" stroke-dasharray="2.6 0.7" shape-rendering="auto"/>
<line x1="557.8" y1="1162.0" x2="581.8" y2="1162.0" stroke="#6c6c6c" stroke-width="1.5" stroke-dasharray="2.6 0.7" shape-rendering="auto"/>
<line x1="549.5" y1="1166.3" x2="573.5" y2="1166.3" stroke="#6c6c6c" stroke-width="1.5" stroke-dasharray="2.6 0.7" shape-rendering="auto"/>
<line x1="622.8" y1="1055.0" x2="646.8" y2="1055.0" stroke="#6c6c6c" stroke-width="1.5" stroke-dasharray="2.6 0.7" shape-rendering="auto"/>
<line x1="717.1" y1="1048.8" x2="741.1" y2="1048.8" stroke="#6c6c6c" stroke-width="1.5" stroke-dasharray="2.6 0.7" shape-rendering="auto"/>
<line x1="745.4" y1="1064.0" x2="769.4" y2="1064.0" stroke="#6c6c6c" stroke-width="1.5" stroke-dasharray="2.6 0.7" shape-rendering="auto"/>
<line x1="777.3" y1="1058.9" x2="801.3" y2="1058.9" stroke="#6c6c6c" stroke-width="1.5" stroke-dasharray="2.6 0.7" shape-rendering="auto"/>
<line x1="819.0" y1="1081.1" x2="843.0" y2="1081.1" stroke="#6c6c6c" stroke-width="1.5" stroke-dasharray="2.6 0.7" shape-rendering="auto"/>
<line x1="850.6" y1="1126.4" x2="874.6" y2="1126.4" stroke="#6c6c6c" stroke-width="1.5" stroke-dasharray="2.6 0.7" shape-rendering="auto"/>
<line x1="891.5" y1="1192.4" x2="915.5" y2="1192.4" stroke="#6c6c6c" stroke-width="1.5" stroke-dasharray="2.6 0.7" shape-rendering="auto"/>
<line x1="950.6" y1="1227.6" x2="974.6" y2="1227.6" stroke="#6c6c6c" stroke-width="1.5" stroke-dasharray="2.6 0.7" shape-rendering="auto"/>
<line x1="983.3" y1="1229.1" x2="1007.3" y2="1229.1" stroke="#6c6c6c" stroke-width="1.5" stroke-dasharray="2.6 0.7" shape-rendering="auto"/>
<line x1="1020.6" y1="1222.2" x2="1044.6" y2="1222.2" stroke="#6c6c6c" stroke-width="1.5" stroke-dasharray="2.6 0.7" shape-rendering="auto"/>
<line x1="1045.3" y1="1226.9" x2="1069.3" y2="1226.9" stroke="#6c6c6c" stroke-width="1.5" stroke-dasharray="2.6 0.7" shape-rendering="auto"/>
<line x1="1092.5" y1="1225.1" x2="1116.5" y2="1225.1" stroke="#6c6c6c" stroke-width="1.5" stroke-dasharray="2.6 0.7" shape-rendering="auto"/>
<line x1="1120.4" y1="1217.1" x2="1144.4" y2="1217.1" stroke="#6c6c6c" stroke-width="1.5" stroke-dasharray="2.6 0.7" shape-rendering="auto"/>
<line x1="1159.2" y1="1234.5" x2="1183.2" y2="1234.5" stroke="#6c6c6c" stroke-width="1.5" stroke-dasharray="2.6 0.7" shape-rendering="auto"/>
<line x1="1189.7" y1="1235.6" x2="1213.7" y2="1235.6" stroke="#6c6c6c" stroke-width="1.5" stroke-dasharray="2.6 0.7" shape-rendering="auto"/>
<line x1="1203.1" y1="1224.7" x2="1227.1" y2="1224.7" stroke="#6c6c6c" stroke-width="1.5" stroke-dasharray="2.6 0.7" shape-rendering="auto"/>
<line x1="1239.0" y1="1226.2" x2="1263.0" y2="1226.2" stroke="#6c6c6c" stroke-width="1.5" stroke-dasharray="2.6 0.7" shape-rendering="auto"/>
<line x1="1392.8" y1="1229.1" x2="1416.8" y2="1229.1" stroke="#6c6c6c" stroke-width="1.5" stroke-dasharray="2.6 0.7" shape-rendering="auto"/>
<line x1="1428.0" y1="1245.7" x2="1452.0" y2="1245.7" stroke="#6c6c6c" stroke-width="1.5" stroke-dasharray="2.6 0.7" shape-rendering="auto"/>
<line x1="1452.6" y1="1187.3" x2="1476.6" y2="1187.3" stroke="#6c6c6c" stroke-width="1.5" stroke-dasharray="2.6 0.7" shape-rendering="auto"/>
<line x1="1489.3" y1="1212.7" x2="1513.3" y2="1212.7" stroke="#6c6c6c" stroke-width="1.5" stroke-dasharray="2.6 0.7" shape-rendering="auto"/>
<line x1="1500.1" y1="1245.0" x2="1524.1" y2="1245.0" stroke="#6c6c6c" stroke-width="1.5" stroke-dasharray="2.6 0.7" shape-rendering="auto"/>
<line x1="1540.4" y1="1246.8" x2="1564.4" y2="1246.8" stroke="#6c6c6c" stroke-width="1.5" stroke-dasharray="2.6 0.7" shape-rendering="auto"/>
<line x1="1565.1" y1="1262.4" x2="1589.1" y2="1262.4" stroke="#6c6c6c" stroke-width="1.5" stroke-dasharray="2.6 0.7" shape-rendering="auto"/>
<line x1="1620.2" y1="1255.2" x2="1644.2" y2="1255.2" stroke="#6c6c6c" stroke-width="1.5" stroke-dasharray="2.6 0.7" shape-rendering="auto"/>
<line x1="1672.8" y1="1266.8" x2="1696.8" y2="1266.8" stroke="#6c6c6c" stroke-width="1.5" stroke-dasharray="2.6 0.7" shape-rendering="auto"/>
<line x1="1706.2" y1="1259.9" x2="1730.2" y2="1259.9" stroke="#6c6c6c" stroke-width="1.5" stroke-dasharray="2.6 0.7" shape-rendering="auto"/>
<line x1="1800.4" y1="1265.0" x2="1824.4" y2="1265.0" stroke="#6c6c6c" stroke-width="1.5" stroke-dasharray="2.6 0.7" shape-rendering="auto"/>
<line x1="1834.2" y1="1255.5" x2="1858.2" y2="1255.5" stroke="#6c6c6c" stroke-width="1.5" stroke-dasharray="2.6 0.7" shape-rendering="auto"/>
<line x1="1870.8" y1="1278.8" x2="1894.8" y2="1278.8" stroke="#6c6c6c" stroke-width="1.5" stroke-dasharray="2.6 0.7" shape-rendering="auto"/>
<line x1="1910.7" y1="1282.7" x2="1934.7" y2="1282.7" stroke="#6c6c6c" stroke-width="1.5" stroke-dasharray="2.6 0.7" shape-rendering="auto"/>
<line x1="1932.8" y1="1287.8" x2="1956.8" y2="1287.8" stroke="#6c6c6c" stroke-width="1.5" stroke-dasharray="2.6 0.7" shape-rendering="auto"/>
<line x1="1954.2" y1="1261.0" x2="1978.2" y2="1261.0" stroke="#6c6c6c" stroke-width="1.5" stroke-dasharray="2.6 0.7" shape-rendering="auto"/>
<line x1="1994.5" y1="1270.0" x2="2018.5" y2="1270.0" stroke="#6c6c6c" stroke-width="1.5" stroke-dasharray="2.6 0.7" shape-rendering="auto"/>
<line x1="2017.3" y1="1273.3" x2="2041.3" y2="1273.3" stroke="#6c6c6c" stroke-width="1.5" stroke-dasharray="2.6 0.7" shape-rendering="auto"/>
<line x1="2104.4" y1="1249.4" x2="2128.4" y2="1249.4" stroke="#6c6c6c" stroke-width="1.5" stroke-dasharray="2.6 0.7" shape-rendering="auto"/>
<line x1="2129.4" y1="1237.0" x2="2153.4" y2="1237.0" stroke="#6c6c6c" stroke-width="1.5" stroke-dasharray="2.6 0.7" shape-rendering="auto"/>
<line x1="2070.0" y1="1250.6" x2="2094.0" y2="1250.6" stroke="#6c6c6c" stroke-width="1.5" stroke-dasharray="2.6 0.7" shape-rendering="auto"/>
<line x1="2048.0" y1="1264.0" x2="2072.0" y2="1264.0" stroke="#6c6c6c" stroke-width="1.5" stroke-dasharray="2.6 0.7" shape-rendering="auto"/>
<rect x="518" y="905" width="1682.1999999999998" height="538.2" fill="none" stroke="#0c0c0c" stroke-width="2.1"/>
</svg>
<div class="t " style="left:447.3px;top:1006.8px;font-size:25.95px;letter-spacing:-0.35px;">1,850</div>
<div class="t " style="left:447.3px;top:1142.8px;font-size:25.95px;letter-spacing:-0.35px;">1,800</div>
<div class="t " style="left:447.3px;top:1278.8px;font-size:25.95px;letter-spacing:-0.35px;">1,750</div>
<div class="t " style="left:447.3px;top:1414.8px;font-size:25.95px;letter-spacing:-0.35px;">1,700</div>
<div class="t " style="left:879px;top:1461px;font-size:26px;letter-spacing:0.008px;">1,000 m</div>
<div class="t " style="left:1314.5px;top:1461px;font-size:26px;letter-spacing:-0.213px;">2,000</div>
<div class="t " style="left:1735px;top:1461px;font-size:26px;letter-spacing:-0.213px;">3,000</div>
<div class="t " style="left:2140.4px;top:1461px;font-size:25.95px;letter-spacing:-0.35px;">4,000</div>
<div class="abs" style="left:431px;top:1493.6px;width:1780px;height:1px;background:#c8c8c8"></div>
<div class="abs" style="left:2210.3px;top:890px;width:1.7px;height:603px;background:#c6c6c6"></div>
<div class="inp" style="left:6px;top:1501px;width:466px;height:38px"></div>
<svg class="abs" style="left:20px;top:1507px" width="26" height="26"><circle cx="10.5" cy="10.5" r="7.5" fill="none" stroke="#7a7a7a" stroke-width="2.4"/><path d="M16 16l7 7" stroke="#7a7a7a" stroke-width="3" stroke-linecap="round"/></svg>
<div class="t " style="left:57.5px;top:1509.5px;font-size:22px;letter-spacing:0.392px;color:#7c7c7c">Type to locate (Ctrl+K)</div>
<div class="t " style="left:726px;top:1512px;font-size:19px;letter-spacing:-0.045px;">Coordinate</div>
<div class="inp" style="left:827px;top:1501px;width:168.5px;height:37.5px"></div>
<div class="t " style="left:839px;top:1512px;font-size:19px;letter-spacing:-0.268px;">272738, 9984117</div>
<div class="t " style="left:1055px;top:1512px;font-size:17.69px;letter-spacing:-0.35px;">Scale</div>
<div class="inp" style="left:1106px;top:1501px;width:174px;height:37.5px;background:linear-gradient(90deg,#fff 0,#fff 134px,#f4f4f4 135px,#ececec)"></div>
<div class="t " style="left:1112px;top:1512px;font-size:18.8px;letter-spacing:-0.35px;">1:95078</div>
<svg class="abs" style="left:1250px;top:1514px" width="18" height="12"><path d="M1 2h15l-7.500 8z" fill="#444"/></svg>
<div class="t " style="left:1337.5px;top:1512px;font-size:19px;letter-spacing:0.095px;">Magnifier</div>
<div class="inp" style="left:1425px;top:1501.5px;width:157px;height:37px"></div>
<div class="t " style="left:1433.5px;top:1512px;font-size:19px;letter-spacing:0.351px;">100%</div>
<div class="t " style="left:1598.5px;top:1512px;font-size:19px;letter-spacing:0.029px;">Rotation</div>
<div class="inp" style="left:1686px;top:1501.5px;width:151px;height:37px"></div>
<div class="t " style="left:1693.5px;top:1512px;font-size:19px;letter-spacing:-0.312px;">-40.0 °</div>
<div class="abs" style="left:1555px;top:1503px;width:1px;height:34px;background:#c8c8c8"></div>
<svg class="abs" style="left:1559px;top:1507px" width="16" height="26"><path d="M1 9h14l-7-8zM1 17h14l-7 8z" fill="#444"/></svg>
<div class="abs" style="left:1810px;top:1503px;width:1px;height:34px;background:#c8c8c8"></div>
<svg class="abs" style="left:1814px;top:1507px" width="16" height="26"><path d="M1 9h14l-7-8zM1 17h14l-7 8z" fill="#444"/></svg>
<div class="cb" style="left:1846px;top:1508px"></div>
<svg class="abs" style="left:1846px;top:1508px" width="25" height="25"><path d="M5.5 12.5l5.5 8.5 8.5-16" fill="none" stroke="#000" stroke-width="3.2"/></svg>
<div class="t " style="left:1881.5px;top:1512px;font-size:18.78px;letter-spacing:-0.35px;">Render</div>
<div class="t " style="left:2002px;top:1512.6px;font-size:17.47px;letter-spacing:-0.35px;">EPSG:32737</div>
<svg class="abs" style="left:998px;top:1502px" width="36" height="36" viewBox="-18 -18 36 36"><path d="M-15 10L-9.500 6.200M8 -6.500L14.500 -11.500" stroke="#111" stroke-width="1.800" stroke-dasharray="1.800 2.200"/><g transform="translate(-1,0.500) rotate(-33)"><rect x="-5.500" y="-12" width="14.500" height="26" rx="7" fill="#b3a3a3"/><rect x="-7.500" y="-13" width="14.500" height="26" rx="7" fill="#fff" stroke="#000" stroke-width="2.200"/><path d="M-7.500 -1.500C-3 1 3 1 7 -1.500" fill="none" stroke="#000" stroke-width="1.800"/><rect x="-5.200" y="-11.300" width="10" height="10.500" rx="4.500" fill="none" stroke="#000" stroke-width="1.400"/><ellipse cx="-0.300" cy="-6.500" rx="1.700" ry="4.300" fill="#2a1a1a"/><circle cx="0" cy="6.500" r="2.500" fill="#fff" stroke="#000" stroke-width="1.700"/></g></svg>
<svg class="abs" style="left:1295px;top:1506px" width="28" height="32" viewBox="-14 -16 28 32"><path d="M-6.500 -1V-6A6.500 6.500 0 0 1 6.500 -6V-1" fill="none" stroke="#8a8a8a" stroke-width="2.800"/><rect x="-11" y="-1.500" width="22" height="15.500" rx="2.500" fill="#6e6e6e"/></svg>
<svg class="abs" style="left:1767px;top:1510px" width="28" height="20" viewBox="-14 -10 28 20"><path d="M-13 0L-6 -8H11A2 2 0 0 1 13 -6V6A2 2 0 0 1 11 8H-6Z" fill="#b9b9b9"/><path d="M-1 -4L7 4M7 -4L-1 4" stroke="#fff" stroke-width="2.200"/></svg>
<svg class="abs" style="left:1967px;top:1505px" width="32" height="32" viewBox="-16 -16 32 32"><g fill="none" stroke="#6a6a6a" stroke-width="1.300"><path d="M-13 -3C-8 -13 8 -13 13 -3M-14.500 -3H14.500M-11 -8H11M0 -11V12M-7 -9C-10 0 -8 8 -3 12M7 -9C10 0 8 8 3 12M-13 -3C-12 5 -7 11 0 12.500C7 11 12 5 13 -3M-12 3H12"/></g></svg>
<svg class="abs" style="left:2133px;top:1501.7px" width="36" height="36" viewBox="-18 -18 36 36"><path d="M-15 -1.500C-15 -8 -8 -12.500 0 -12.500C8 -12.500 15 -8 15 -1.500C15 3 11 7 6 8.500C7 11.500 9 13.500 11 14.500C6 15 2 13 0 9.500C-8 9.500 -15 5 -15 -1.500Z" fill="#6e6e6e"/><circle cx="-6.500" cy="-1.500" r="2.200" fill="#fff"/><circle cx="0" cy="-1.500" r="2.200" fill="#fff"/><circle cx="6.500" cy="-1.500" r="2.200" fill="#fff"/></svg>
<svg class="abs" style="left:2196px;top:1528px" width="14" height="14"><g fill="#b5b5b5"><circle cx="11" cy="3" r="1"/><circle cx="7" cy="7" r="1"/><circle cx="11" cy="7" r="1"/><circle cx="3" cy="11" r="1"/><circle cx="7" cy="11" r="1"/><circle cx="11" cy="11" r="1"/></g></svg>
</body></html>
